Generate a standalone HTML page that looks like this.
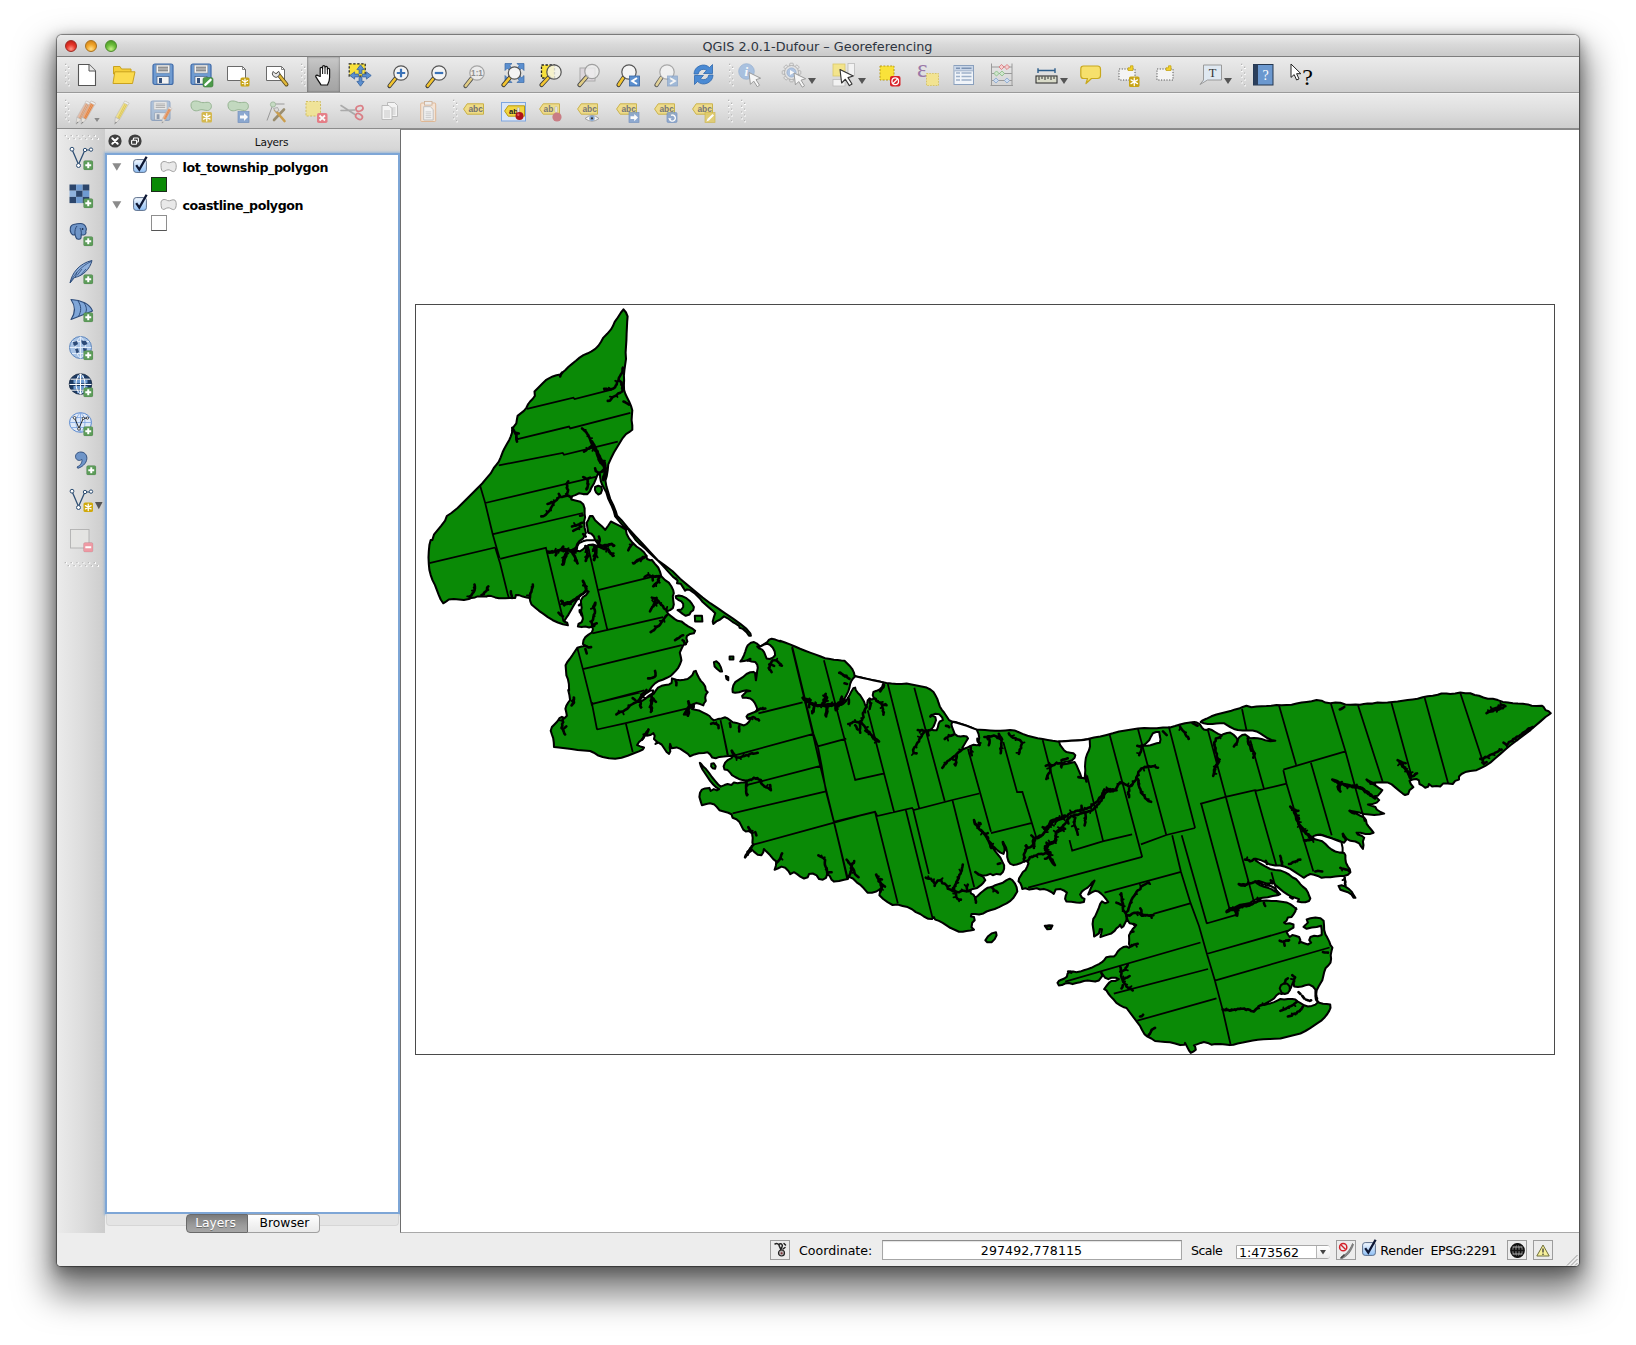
<!DOCTYPE html>
<html lang="en">
<head>
<meta charset="utf-8">
<title>QGIS 2.0.1-Dufour – Georeferencing</title>
<style>
html,body{margin:0;padding:0;background:#fff;}
body{width:1636px;height:1345px;position:relative;overflow:hidden;font-family:"DejaVu Sans","Liberation Sans",sans-serif;font-size:12px;color:#000;}
.abs{position:absolute;}
#win{position:absolute;left:57px;top:35px;width:1522px;height:1231px;background:#ededed;border-radius:5px 5px 4px 4px;
 box-shadow:0 0 1px 1px rgba(0,0,0,.45),0 5px 14px 2px rgba(0,0,0,.32),0 21px 34px 8px rgba(0,0,0,.50);}
#title{position:absolute;left:0;top:0;width:1522px;height:22px;border-radius:5px 5px 0 0;
 background:linear-gradient(#ebebeb,#d9d9d9 45%,#cacaca);border-bottom:1px solid #7d7d7d;box-sizing:border-box;}
#title .t{position:absolute;left:0;width:1521px;top:3.6px;text-align:center;font-size:12.8px;color:#2d3440;letter-spacing:0px;white-space:nowrap;}
.tl{position:absolute;top:5px;width:12px;height:12px;border-radius:50%;box-sizing:border-box;}
.tb{position:absolute;left:0;width:1522px;height:36px;background:linear-gradient(#ebebeb,#dedede 50%,#cecece);box-sizing:border-box;}
#tb1{top:22px;border-bottom:1px solid #9a9a9a;}
#tb2{top:58px;border-top:1px solid #f2f2f2;border-bottom:1px solid #8c8c8c;}
.ic{position:absolute;overflow:visible;}
.grip{position:absolute;width:5px;height:23px;}
#ltb{position:absolute;left:0;top:94px;width:48px;height:1104px;background:linear-gradient(90deg,#ebebeb,#dcdcdc 55%,#cccccc);}
#lhead{position:absolute;left:48px;top:94px;width:295px;height:25px;background:linear-gradient(#e4e4e4,#d3d3d3);}
#lhead .t{position:absolute;left:0;width:333px;top:7.2px;text-align:center;font-size:10.6px;letter-spacing:-.3px;color:#111;}
#tree{position:absolute;left:48px;top:118px;width:295px;height:1061px;background:#fff;box-sizing:border-box;border:2px solid #7ea6d6;box-shadow:0 0 2px 1px rgba(110,160,215,.55);}
.lname{position:absolute;font-weight:bold;font-size:12.6px;letter-spacing:-.4px;white-space:nowrap;color:#000;}
#canvas{position:absolute;left:343px;top:94px;width:1179px;height:1104px;background:#fff;border-left:1px solid #6e6e6e;box-sizing:border-box;border-top:1px solid #8a8a8a;border-bottom:1px solid #a9a9a9;}
#status{position:absolute;left:0;top:1198px;width:1522px;height:33px;background:#ededed;border-radius:0 0 4px 4px;}
.st{position:absolute;font-size:12.6px;white-space:nowrap;color:#000;}
</style>
</head>
<body>
<div id="win">
<div id="title">
 <div class="tl" style="left:8px;background:radial-gradient(circle at 50% 80%,#ff9a8a 0,#e8392d 45%,#b5150f 100%);border:1px solid #9c2a22;"></div>
 <div class="tl" style="left:28px;background:radial-gradient(circle at 50% 80%,#ffe08a 0,#f2a72d 45%,#c9780f 100%);border:1px solid #a8701c;"></div>
 <div class="tl" style="left:48px;background:radial-gradient(circle at 50% 80%,#c8f08a 0,#6fbf3d 45%,#3f8f1f 100%);border:1px solid #4d8a2c;"></div>
 <div class="t">QGIS 2.0.1-Dufour – Georeferencing</div>
</div>
<div id="tb1" class="tb"></div>
<div id="tb2" class="tb"></div>
<svg class="ic" style="left:8px;top:28.5px" width="6" height="25" viewBox="0 0 6 25" ><rect x="0" y="0" width="2" height="2" fill="#fff"/><rect x="0" y="-0.3" width="1.4" height="1.4" fill="#b5b5b5"/><rect x="3" y="2.9" width="2" height="2" fill="#fff"/><rect x="3" y="2.6" width="1.4" height="1.4" fill="#b5b5b5"/><rect x="0" y="5.8" width="2" height="2" fill="#fff"/><rect x="0" y="5.5" width="1.4" height="1.4" fill="#b5b5b5"/><rect x="3" y="8.7" width="2" height="2" fill="#fff"/><rect x="3" y="8.4" width="1.4" height="1.4" fill="#b5b5b5"/><rect x="0" y="11.6" width="2" height="2" fill="#fff"/><rect x="0" y="11.3" width="1.4" height="1.4" fill="#b5b5b5"/><rect x="3" y="14.5" width="2" height="2" fill="#fff"/><rect x="3" y="14.2" width="1.4" height="1.4" fill="#b5b5b5"/><rect x="0" y="17.4" width="2" height="2" fill="#fff"/><rect x="0" y="17.1" width="1.4" height="1.4" fill="#b5b5b5"/><rect x="3" y="20.3" width="2" height="2" fill="#fff"/><rect x="3" y="20" width="1.4" height="1.4" fill="#b5b5b5"/></svg><svg class="ic" style="left:18px;top:28px" width="24" height="24" viewBox="0 0 24 24" ><path d="M3.5 1.5H14L20.5 8V22.5H3.5Z" fill="#fff" stroke="#555" stroke-width="1.1" stroke-linejoin="round"/><path d="M14 1.5V8H20.5" fill="#e8e8e8" stroke="#555" stroke-width="1"/></svg><svg class="ic" style="left:55px;top:27px" width="24" height="24" viewBox="0 0 24 24" ><path d="M1.5 4.5H8L9.5 7H19V12H1.5Z" fill="#f5cf3a" stroke="#c9a21e" stroke-width="1"/><path d="M1 21.5L2.8 9.8H23L20.5 21.5Z" fill="#fbdb4f" stroke="#c9a21e" stroke-width="1" stroke-linejoin="round"/></svg><svg class="ic" style="left:93.5px;top:27.5px" width="24" height="24" viewBox="0 0 24 24" ><g transform="translate(1 0)"><g opacity="1"><rect x="1" y="1" width="20" height="20.5" rx="2" fill="#6f9bd1" stroke="#3f6aa8" stroke-width="1.2"/><rect x="4.2" y="2" width="13.6" height="8" fill="#f2f2f2" stroke="#888" stroke-width=".5"/><path d="M6 4.2H16M6 6H16M6 7.8H16" stroke="#555" stroke-width=".9"/><rect x="5" y="13.5" width="12" height="7.5" fill="#f2f2f2" stroke="#35507a" stroke-width=".6"/><rect x="7" y="15" width="3" height="5" fill="#35507a"/></g></g></svg><svg class="ic" style="left:132.5px;top:27.5px" width="24" height="24" viewBox="0 0 24 24" ><g transform="translate(0 0)"><g opacity="1"><rect x="1" y="1" width="20" height="20.5" rx="2" fill="#6f9bd1" stroke="#3f6aa8" stroke-width="1.2"/><rect x="4.2" y="2" width="13.6" height="8" fill="#f2f2f2" stroke="#888" stroke-width=".5"/><path d="M6 4.2H16M6 6H16M6 7.8H16" stroke="#555" stroke-width=".9"/><rect x="5" y="13.5" width="12" height="7.5" fill="#f2f2f2" stroke="#35507a" stroke-width=".6"/><rect x="7" y="15" width="3" height="5" fill="#35507a"/></g></g><rect x="13" y="14.5" width="10" height="9.5" rx="1.8" fill="#4d9a4a" stroke="#3b7a39" stroke-width=".6"/><path d="M15.3 21.8L20.6 16.8" stroke="#fff" stroke-width="2.3" stroke-linecap="round"/></svg><svg class="ic" style="left:169px;top:28px" width="24" height="24" viewBox="0 0 24 24" ><path d="M1.5 3.5H16.5L19.5 6.5V17.5H1.5Z" fill="#fff" stroke="#6a6a6a" stroke-width="1"/><path d="M16.5 3.5V6.5H19.5" fill="none" stroke="#6a6a6a" stroke-width=".8"/><g transform="translate(14.5 14.5)"><rect width="9" height="9" rx="1.6" fill="#c8a415"/><path d="M4.5 1.5L4.5 7.5M7.09808 3L1.90192 6M1.90192 3L7.09808 6" stroke="#fff" stroke-width="1.25" stroke-linecap="round"/></g></svg><svg class="ic" style="left:207.5px;top:28px" width="24" height="24" viewBox="0 0 24 24" ><path d="M1.5 3.5H16.5L19.5 6.5V17.5H1.5Z" fill="#fff" stroke="#6a6a6a" stroke-width="1"/><path d="M16.5 3.5V6.5H19.5" fill="none" stroke="#6a6a6a" stroke-width=".8"/><path d="M13 11L21.5 21.5" stroke="#5a4a1a" stroke-width="4" stroke-linecap="round"/><path d="M13.4 11.4L21.3 21.2" stroke="#e0b83a" stroke-width="2.4" stroke-linecap="round"/><path d="M8.2 8.4A3.6 3.6 0 1 0 13.6 8.2L11.6 10.6L9.8 10.2Z" fill="#e6e6e6" stroke="#444" stroke-width=".9"/></svg><svg class="ic" style="left:244px;top:28.5px" width="6" height="25" viewBox="0 0 6 25" ><rect x="0" y="0" width="2" height="2" fill="#fff"/><rect x="0" y="-0.3" width="1.4" height="1.4" fill="#b5b5b5"/><rect x="3" y="2.9" width="2" height="2" fill="#fff"/><rect x="3" y="2.6" width="1.4" height="1.4" fill="#b5b5b5"/><rect x="0" y="5.8" width="2" height="2" fill="#fff"/><rect x="0" y="5.5" width="1.4" height="1.4" fill="#b5b5b5"/><rect x="3" y="8.7" width="2" height="2" fill="#fff"/><rect x="3" y="8.4" width="1.4" height="1.4" fill="#b5b5b5"/><rect x="0" y="11.6" width="2" height="2" fill="#fff"/><rect x="0" y="11.3" width="1.4" height="1.4" fill="#b5b5b5"/><rect x="3" y="14.5" width="2" height="2" fill="#fff"/><rect x="3" y="14.2" width="1.4" height="1.4" fill="#b5b5b5"/><rect x="0" y="17.4" width="2" height="2" fill="#fff"/><rect x="0" y="17.1" width="1.4" height="1.4" fill="#b5b5b5"/><rect x="3" y="20.3" width="2" height="2" fill="#fff"/><rect x="3" y="20" width="1.4" height="1.4" fill="#b5b5b5"/></svg><div class="abs" style="left:250px;top:22px;width:33px;height:35px;background:linear-gradient(#c9c9c9,#b1b1b1 50%,#a3a3a3);box-shadow:inset 1px 0 2px rgba(0,0,0,.25),inset -1px 0 2px rgba(0,0,0,.18)"></div><svg class="ic" style="left:254.5px;top:28px" width="24" height="24" viewBox="0 0 24 24" ><path d="M8.2 13.5V5.6C8.2 4 10.6 4 10.6 5.6V3.8C10.6 2.2 13 2.2 13 3.8V4.6C13 3 15.4 3 15.4 4.6V6.4C15.4 5 17.6 5 17.6 6.6V14.5C17.6 18 16 21 15.5 22H9C8 20 5.5 16.5 4 14.2C3 12.6 5 11.4 6.2 12.8Z" fill="#fff" stroke="#111" stroke-width="1.2" stroke-linejoin="round"/><path d="M10.6 5.6V11M13 4.6V11M15.4 6.4V11.4" stroke="#111" stroke-width="1"/></svg><svg class="ic" style="left:291px;top:27.5px" width="24" height="24" viewBox="0 0 24 24" ><rect x="1.2" y="0.8" width="16" height="12.4" fill="#f7e03c" stroke="#222" stroke-width="1.2" stroke-dasharray="2.4 1.6"/><path transform="rotate(0 12.5 12.5)" d="M12.5 1.8L16.1 6.6H13.9V10.6H11.1V6.6H8.9Z" fill="#5b8fcf" stroke="#35629e" stroke-width=".8" stroke-linejoin="round"/><path transform="rotate(90 12.5 12.5)" d="M12.5 1.8L16.1 6.6H13.9V10.6H11.1V6.6H8.9Z" fill="#5b8fcf" stroke="#35629e" stroke-width=".8" stroke-linejoin="round"/><path transform="rotate(180 12.5 12.5)" d="M12.5 1.8L16.1 6.6H13.9V10.6H11.1V6.6H8.9Z" fill="#5b8fcf" stroke="#35629e" stroke-width=".8" stroke-linejoin="round"/><path transform="rotate(270 12.5 12.5)" d="M12.5 1.8L16.1 6.6H13.9V10.6H11.1V6.6H8.9Z" fill="#5b8fcf" stroke="#35629e" stroke-width=".8" stroke-linejoin="round"/></svg><svg class="ic" style="left:330px;top:29px" width="24" height="24" viewBox="0 0 24 24" ><g opacity="1"><path d="M8.816 14.184L2.5 22" stroke="#3a3a3a" stroke-width="4.2" stroke-linecap="round"/><path d="M8.216 14.784L2.7 21.8" stroke="#f3c530" stroke-width="2.6" stroke-linecap="round"/><circle cx="14" cy="9" r="7.2" fill="#f4f4f4" stroke="#555" stroke-width="1.2"/></g><path d="M9.8 9H18.2M14 4.8V13.2" stroke="#3a72b8" stroke-width="2.2"/></svg><svg class="ic" style="left:368px;top:29px" width="24" height="24" viewBox="0 0 24 24" ><g opacity="1"><path d="M8.816 14.184L2.5 22" stroke="#3a3a3a" stroke-width="4.2" stroke-linecap="round"/><path d="M8.216 14.784L2.7 21.8" stroke="#f3c530" stroke-width="2.6" stroke-linecap="round"/><circle cx="14" cy="9" r="7.2" fill="#f4f4f4" stroke="#555" stroke-width="1.2"/></g><path d="M9.8 9H18.2" stroke="#3a72b8" stroke-width="2.2"/></svg><svg class="ic" style="left:406px;top:29px" width="24" height="24" viewBox="0 0 24 24" ><g opacity="0.85"><path d="M8.816 14.184L2.5 22" stroke="#3a3a3a" stroke-width="4.2" stroke-linecap="round"/><path d="M8.216 14.784L2.7 21.8" stroke="#e6cd78" stroke-width="2.6" stroke-linecap="round"/><circle cx="14" cy="9" r="7.2" fill="#ededed" stroke="#9a9a9a" stroke-width="1.2"/></g><text x="14" y="12" font-family="Liberation Sans,sans-serif" font-weight="bold" font-size="8.2" text-anchor="middle" fill="#8d8d8d">1:1</text></svg><svg class="ic" style="left:443.5px;top:28px" width="24" height="24" viewBox="0 0 24 24" ><path transform="rotate(0 13.5 10)" d="M4 0.5H11L8.7 2.8L11.5 5.6L9.1 8L6.3 5.2L4 7.5Z" fill="#5b8fcf" stroke="#3a68a5" stroke-width=".7"/><path transform="rotate(90 13.5 10)" d="M4 0.5H11L8.7 2.8L11.5 5.6L9.1 8L6.3 5.2L4 7.5Z" fill="#5b8fcf" stroke="#3a68a5" stroke-width=".7"/><path transform="rotate(180 13.5 10)" d="M4 0.5H11L8.7 2.8L11.5 5.6L9.1 8L6.3 5.2L4 7.5Z" fill="#5b8fcf" stroke="#3a68a5" stroke-width=".7"/><path transform="rotate(270 13.5 10)" d="M4 0.5H11L8.7 2.8L11.5 5.6L9.1 8L6.3 5.2L4 7.5Z" fill="#5b8fcf" stroke="#3a68a5" stroke-width=".7"/><g opacity="1"><path d="M9.036 14.464L2.5 22" stroke="#3a3a3a" stroke-width="4.2" stroke-linecap="round"/><path d="M8.436 15.064L2.7 21.8" stroke="#f3c530" stroke-width="2.6" stroke-linecap="round"/><circle cx="13.5" cy="10" r="6.2" fill="#f4f4f4" stroke="#555" stroke-width="1.2"/></g></svg><svg class="ic" style="left:481.5px;top:28px" width="24" height="24" viewBox="0 0 24 24" ><rect x="2.5" y="2" width="13" height="13" fill="#f7e03c" stroke="#222" stroke-width="1.3" stroke-dasharray="2.4 1.6"/><g opacity="1"><path d="M9.816 14.184L2.5 22" stroke="#3a3a3a" stroke-width="4.2" stroke-linecap="round"/><path d="M9.216 14.784L2.7 21.8" stroke="#f3c530" stroke-width="2.6" stroke-linecap="round"/><circle cx="15" cy="9" r="7.2" fill="rgba(245,245,235,.82)" stroke="#555" stroke-width="1.2"/></g></svg><svg class="ic" style="left:520px;top:28px" width="24" height="24" viewBox="0 0 24 24" ><rect x="3" y="5" width="15" height="13" fill="#dcd6dc" stroke="#aaa" stroke-width="1"/><g opacity="0.9"><path d="M9.816 13.684L2.5 22" stroke="#3a3a3a" stroke-width="4.2" stroke-linecap="round"/><path d="M9.216 14.284L2.7 21.8" stroke="#e3cd7e" stroke-width="2.6" stroke-linecap="round"/><circle cx="15" cy="8.5" r="7.2" fill="rgba(240,240,240,.85)" stroke="#999" stroke-width="1.2"/></g></svg><svg class="ic" style="left:558.5px;top:28px" width="24" height="24" viewBox="0 0 24 24" ><g opacity="1"><path d="M7.816 14.184L2.5 22" stroke="#3a3a3a" stroke-width="4.2" stroke-linecap="round"/><path d="M7.216 14.784L2.7 21.8" stroke="#f3c530" stroke-width="2.6" stroke-linecap="round"/><circle cx="13" cy="9" r="7.2" fill="#f4f4f4" stroke="#555" stroke-width="1.2"/></g><rect x="13.5" y="13" width="10" height="10" fill="#5b8fcf" stroke="#3a68a5" stroke-width=".8"/><path d="M21 15L16.2 18L21 21" fill="none" stroke="#fff" stroke-width="2"/></svg><svg class="ic" style="left:596.5px;top:28px" width="24" height="24" viewBox="0 0 24 24" ><g opacity="0.8"><path d="M7.816 14.184L2.5 22" stroke="#3a3a3a" stroke-width="4.2" stroke-linecap="round"/><path d="M7.216 14.784L2.7 21.8" stroke="#e6d28a" stroke-width="2.6" stroke-linecap="round"/><circle cx="13" cy="9" r="7.2" fill="#f4f4f4" stroke="#9a9a9a" stroke-width="1.2"/></g><g opacity=".75"><rect x="13.5" y="13" width="10" height="10" fill="#8fb0d8" stroke="#7a99c2" stroke-width=".8"/><path d="M16 15L20.8 18L16 21" fill="none" stroke="#fff" stroke-width="2"/></g></svg><svg class="ic" style="left:634.5px;top:28px" width="24" height="24" viewBox="0 0 24 24" ><path d="M2 11A9.3 9.3 0 0 1 17.5 4.5L20.5 1.5V10.5H11.5L14.6 7.4A5.2 5.2 0 0 0 6.2 11Z" fill="#4a8ad4" stroke="#2f68ad" stroke-width=".8" stroke-linejoin="round"/><path d="M21 12A9.3 9.3 0 0 1 5.5 18.5L2.5 21.5V12.5H11.5L8.4 15.6A5.2 5.2 0 0 0 16.8 12Z" fill="#4a8ad4" stroke="#2f68ad" stroke-width=".8" stroke-linejoin="round"/></svg><svg class="ic" style="left:672px;top:28.5px" width="6" height="25" viewBox="0 0 6 25" ><rect x="0" y="0" width="2" height="2" fill="#fff"/><rect x="0" y="-0.3" width="1.4" height="1.4" fill="#b5b5b5"/><rect x="3" y="2.9" width="2" height="2" fill="#fff"/><rect x="3" y="2.6" width="1.4" height="1.4" fill="#b5b5b5"/><rect x="0" y="5.8" width="2" height="2" fill="#fff"/><rect x="0" y="5.5" width="1.4" height="1.4" fill="#b5b5b5"/><rect x="3" y="8.7" width="2" height="2" fill="#fff"/><rect x="3" y="8.4" width="1.4" height="1.4" fill="#b5b5b5"/><rect x="0" y="11.6" width="2" height="2" fill="#fff"/><rect x="0" y="11.3" width="1.4" height="1.4" fill="#b5b5b5"/><rect x="3" y="14.5" width="2" height="2" fill="#fff"/><rect x="3" y="14.2" width="1.4" height="1.4" fill="#b5b5b5"/><rect x="0" y="17.4" width="2" height="2" fill="#fff"/><rect x="0" y="17.1" width="1.4" height="1.4" fill="#b5b5b5"/><rect x="3" y="20.3" width="2" height="2" fill="#fff"/><rect x="3" y="20" width="1.4" height="1.4" fill="#b5b5b5"/></svg><svg class="ic" style="left:681px;top:28px" width="24" height="24" viewBox="0 0 24 24" ><g opacity=".8"><circle cx="8.5" cy="8.5" r="7.8" fill="#9bb9df" stroke="#8aa8cf" stroke-width=".8"/><text x="8.2" y="13" font-family="Liberation Serif,serif" font-style="italic" font-weight="bold" font-size="13" text-anchor="middle" fill="#fff">i</text></g><path transform="translate(11 9.5) scale(1.1)" d="M0 0L10.6 5.2L6.4 6.5L9.6 11.6L7.5 12.9L4.3 7.8L1.3 10.8Z" fill="#f6f6f6" stroke="#9a9a9a" stroke-width=".9" stroke-linejoin="round"/></svg><svg class="ic" style="left:725px;top:28px" width="24" height="24" viewBox="0 0 24 24" ><g opacity=".85"><rect transform="rotate(0 9.5 9.5)" x="7.7" y="0.2" width="3.6" height="4" rx=".8" fill="#e4e4e4" stroke="#9c9c9c" stroke-width=".7"/><rect transform="rotate(45 9.5 9.5)" x="7.7" y="0.2" width="3.6" height="4" rx=".8" fill="#e4e4e4" stroke="#9c9c9c" stroke-width=".7"/><rect transform="rotate(90 9.5 9.5)" x="7.7" y="0.2" width="3.6" height="4" rx=".8" fill="#e4e4e4" stroke="#9c9c9c" stroke-width=".7"/><rect transform="rotate(135 9.5 9.5)" x="7.7" y="0.2" width="3.6" height="4" rx=".8" fill="#e4e4e4" stroke="#9c9c9c" stroke-width=".7"/><rect transform="rotate(180 9.5 9.5)" x="7.7" y="0.2" width="3.6" height="4" rx=".8" fill="#e4e4e4" stroke="#9c9c9c" stroke-width=".7"/><rect transform="rotate(225 9.5 9.5)" x="7.7" y="0.2" width="3.6" height="4" rx=".8" fill="#e4e4e4" stroke="#9c9c9c" stroke-width=".7"/><rect transform="rotate(270 9.5 9.5)" x="7.7" y="0.2" width="3.6" height="4" rx=".8" fill="#e4e4e4" stroke="#9c9c9c" stroke-width=".7"/><rect transform="rotate(315 9.5 9.5)" x="7.7" y="0.2" width="3.6" height="4" rx=".8" fill="#e4e4e4" stroke="#9c9c9c" stroke-width=".7"/><circle cx="9.5" cy="9.5" r="7" fill="#e4e4e4" stroke="#9c9c9c" stroke-width=".8"/><circle cx="9.5" cy="9.5" r="4.6" fill="#a9c1e2" stroke="#8aa3c9" stroke-width=".7"/><path d="M8 7L12.3 9.5L8 12Z" fill="#fff"/></g><path transform="translate(12 10) scale(1.1)" d="M0 0L10.6 5.2L6.4 6.5L9.6 11.6L7.5 12.9L4.3 7.8L1.3 10.8Z" fill="#f6f6f6" stroke="#9a9a9a" stroke-width=".9" stroke-linejoin="round"/></svg><svg class="ic" style="left:751px;top:43px" width="8" height="6" viewBox="0 0 8 6" ><path d="M0 0H8L4 6Z" fill="#555"/></svg><svg class="ic" style="left:775px;top:27.5px" width="24" height="24" viewBox="0 0 24 24" ><rect x="1" y="1" width="12" height="12" fill="#f3e48c" stroke="#d9c869" stroke-width=".8"/><rect x="16" y="0.5" width="6.5" height="12" fill="#f2f2f2" stroke="#bbb" stroke-width=".8"/><rect x="1" y="16.5" width="12" height="6.5" fill="#f2f2f2" stroke="#bbb" stroke-width=".8"/><path transform="translate(8 6.5) scale(1.25)" d="M0 0L10.6 5.2L6.4 6.5L9.6 11.6L7.5 12.9L4.3 7.8L1.3 10.8Z" fill="#fff" stroke="#333" stroke-width=".9" stroke-linejoin="round"/></svg><svg class="ic" style="left:801px;top:43px" width="8" height="6" viewBox="0 0 8 6" ><path d="M0 0H8L4 6Z" fill="#555"/></svg><svg class="ic" style="left:821.5px;top:29px" width="24" height="24" viewBox="0 0 24 24" ><rect x="1" y="2" width="14" height="14" fill="#f9e23a" stroke="#b89c1a" stroke-width="1" stroke-dasharray="2 1.4"/><rect x="11" y="12" width="10.5" height="10.5" rx="2" fill="#d8242b"/><circle cx="16.25" cy="17.25" r="3.3" fill="none" stroke="#fff" stroke-width="1.3"/><path d="M14 19.5L18.5 15" stroke="#fff" stroke-width="1.3"/></svg><svg class="ic" style="left:860px;top:28px" width="24" height="24" viewBox="0 0 24 24" ><text x="0" y="14" font-family="Liberation Serif,DejaVu Serif,serif" font-size="25" fill="#9a78a8">ε</text><rect x="9.5" y="10.5" width="12" height="12" fill="#f2e391" stroke="#d5c160" stroke-width=".9" stroke-dasharray="1.6 1.2"/></svg><svg class="ic" style="left:896px;top:29px" width="24" height="24" viewBox="0 0 24 24" ><rect x="1" y="1.5" width="19.5" height="19" fill="#f0f4f9" stroke="#8aa0bd" stroke-width="1"/><rect x="1.5" y="2" width="18.5" height="4.5" fill="#c9d6e8"/><path d="M3 4.2H7M8.5 4.2H18.5" stroke="#7d93b3" stroke-width="1.6"/><path d="M3 9H7M8.5 9H18.5M3 12.5H7M8.5 12.5H18.5M3 16H7M8.5 16H18.5" stroke="#9db0c9" stroke-width="1.3"/><path d="M1.5 6.8H20" stroke="#8aa0bd" stroke-width=".8"/></svg><svg class="ic" style="left:933px;top:28px" width="24" height="24" viewBox="0 0 24 24" ><path d="M1.5 0.5V22M22 0.5V22M0.5 22.5H23M1.5 4H22M1.5 10.5H22M1.5 17.5H22" stroke="#9a9a9a" stroke-width="1" fill="none"/><rect transform="rotate(45 11.5 4)" x="9.7" y="2.2" width="3.6" height="3.6" fill="#f6cfd0" stroke="#d76a6e" stroke-width=".7"/><rect transform="rotate(45 17 4)" x="15.2" y="2.2" width="3.6" height="3.6" fill="#f6cfd0" stroke="#d76a6e" stroke-width=".7"/><rect transform="rotate(45 6.5 10.5)" x="4.7" y="8.7" width="3.6" height="3.6" fill="#cfe6cc" stroke="#7fb879" stroke-width=".7"/><rect transform="rotate(45 12 10.5)" x="10.2" y="8.7" width="3.6" height="3.6" fill="#cfe6cc" stroke="#7fb879" stroke-width=".7"/><rect transform="rotate(45 6 17.5)" x="4.2" y="15.7" width="3.6" height="3.6" fill="#cddcf0" stroke="#7fa0cc" stroke-width=".7"/><rect transform="rotate(45 17 17.5)" x="15.2" y="15.7" width="3.6" height="3.6" fill="#cddcf0" stroke="#7fa0cc" stroke-width=".7"/></svg><svg class="ic" style="left:977.5px;top:32px" width="24" height="24" viewBox="0 0 24 24" ><path d="M3 3.5H20M3 1.2V6M20 1.2V6" stroke="#2c5d8a" stroke-width="1.4"/><rect x="1" y="9" width="21" height="7" fill="#d9dbc9" stroke="#333" stroke-width="1.1"/><path d="M4 9.5V13M7 9.5V12M10 9.5V13M13 9.5V12M16 9.5V13M19 9.5V12" stroke="#333" stroke-width="1"/></svg><svg class="ic" style="left:1003px;top:43px" width="8" height="6" viewBox="0 0 8 6" ><path d="M0 0H8L4 6Z" fill="#555"/></svg><svg class="ic" style="left:1022.5px;top:30px" width="24" height="24" viewBox="0 0 24 24" ><path d="M3.5 1H17.5Q20.5 1 20.5 4V10.5Q20.5 13.5 17.5 13.5H11.5L6 18.5L7.5 13.5H3.5Q0.8 13.5 0.8 10.5V4Q0.8 1 3.5 1Z" fill="#f7e06c" stroke="#c8a81e" stroke-width="1.2" stroke-linejoin="round"/></svg><svg class="ic" style="left:1061px;top:29.5px" width="24" height="24" viewBox="0 0 24 24" ><rect x="1" y="4" width="16" height="11" fill="#f4f4f4" stroke="#555" stroke-width="1" stroke-dasharray="1.2 1.5"/><path d="M10 5.5V2.8H12.5V0.8H15V5.5Z" fill="#f4d228" stroke="#c4a418" stroke-width=".8"/><g transform="translate(11 11.5)"><rect width="10.5" height="10.5" rx="1.6" fill="#c8a415"/><path d="M5.25 1.5L5.25 9M8.4976 3.375L2.0024 7.125M2.0024 3.375L8.4976 7.125" stroke="#fff" stroke-width="1.25" stroke-linecap="round"/></g></svg><svg class="ic" style="left:1099px;top:29.5px" width="24" height="24" viewBox="0 0 24 24" ><rect x="1" y="4" width="16" height="11" fill="#f4f4f4" stroke="#555" stroke-width="1" stroke-dasharray="1.2 1.5"/><path d="M10 5.5V2.8H12.5V0.8H15V5.5Z" fill="#f4d228" stroke="#c4a418" stroke-width=".8"/></svg><svg class="ic" style="left:1141.5px;top:29px" width="24" height="24" viewBox="0 0 24 24" ><path d="M4.5 1H22.5V16H8.5L1 20.5L4.5 16Z" fill="#dfe8f1" stroke="#9a9a9a" stroke-width="1" stroke-linejoin="round"/><text x="13.5" y="13" font-family="Liberation Serif,serif" font-size="12.5" text-anchor="middle" fill="#333">T</text></svg><svg class="ic" style="left:1167px;top:43px" width="8" height="6" viewBox="0 0 8 6" ><path d="M0 0H8L4 6Z" fill="#555"/></svg><svg class="ic" style="left:1184px;top:28.5px" width="6" height="25" viewBox="0 0 6 25" ><rect x="0" y="0" width="2" height="2" fill="#fff"/><rect x="0" y="-0.3" width="1.4" height="1.4" fill="#b5b5b5"/><rect x="3" y="2.9" width="2" height="2" fill="#fff"/><rect x="3" y="2.6" width="1.4" height="1.4" fill="#b5b5b5"/><rect x="0" y="5.8" width="2" height="2" fill="#fff"/><rect x="0" y="5.5" width="1.4" height="1.4" fill="#b5b5b5"/><rect x="3" y="8.7" width="2" height="2" fill="#fff"/><rect x="3" y="8.4" width="1.4" height="1.4" fill="#b5b5b5"/><rect x="0" y="11.6" width="2" height="2" fill="#fff"/><rect x="0" y="11.3" width="1.4" height="1.4" fill="#b5b5b5"/><rect x="3" y="14.5" width="2" height="2" fill="#fff"/><rect x="3" y="14.2" width="1.4" height="1.4" fill="#b5b5b5"/><rect x="0" y="17.4" width="2" height="2" fill="#fff"/><rect x="0" y="17.1" width="1.4" height="1.4" fill="#b5b5b5"/><rect x="3" y="20.3" width="2" height="2" fill="#fff"/><rect x="3" y="20" width="1.4" height="1.4" fill="#b5b5b5"/></svg><svg class="ic" style="left:1195.5px;top:28.5px" width="24" height="24" viewBox="0 0 24 24" ><rect x="0.5" y="0.5" width="19.5" height="20.5" fill="#6b98cf" stroke="#24364e" stroke-width="1"/><rect x="0.5" y="0.5" width="4.5" height="20.5" fill="#2b3f5c"/><text x="12.5" y="15.5" font-family="Liberation Serif,serif" font-size="14" text-anchor="middle" fill="#fff">?</text></svg><svg class="ic" style="left:1232.5px;top:28px" width="24" height="24" viewBox="0 0 24 24" ><path d="M1 1L1 14.4L4.2 11.6L6.6 17L9 15.9L6.6 10.7L10.9 10.7Z" fill="#fff" stroke="#222" stroke-width="1" stroke-linejoin="round"/><text x="17.5" y="21.5" font-family="Liberation Serif,serif" font-size="24" text-anchor="middle" fill="#000">?</text></svg>
<svg class="ic" style="left:8px;top:65px" width="6" height="25" viewBox="0 0 6 25" ><rect x="0" y="0" width="2" height="2" fill="#fff"/><rect x="0" y="-0.3" width="1.4" height="1.4" fill="#b5b5b5"/><rect x="3" y="2.9" width="2" height="2" fill="#fff"/><rect x="3" y="2.6" width="1.4" height="1.4" fill="#b5b5b5"/><rect x="0" y="5.8" width="2" height="2" fill="#fff"/><rect x="0" y="5.5" width="1.4" height="1.4" fill="#b5b5b5"/><rect x="3" y="8.7" width="2" height="2" fill="#fff"/><rect x="3" y="8.4" width="1.4" height="1.4" fill="#b5b5b5"/><rect x="0" y="11.6" width="2" height="2" fill="#fff"/><rect x="0" y="11.3" width="1.4" height="1.4" fill="#b5b5b5"/><rect x="3" y="14.5" width="2" height="2" fill="#fff"/><rect x="3" y="14.2" width="1.4" height="1.4" fill="#b5b5b5"/><rect x="0" y="17.4" width="2" height="2" fill="#fff"/><rect x="0" y="17.1" width="1.4" height="1.4" fill="#b5b5b5"/><rect x="3" y="20.3" width="2" height="2" fill="#fff"/><rect x="3" y="20" width="1.4" height="1.4" fill="#b5b5b5"/></svg><svg class="ic" style="left:19px;top:66px" width="24" height="24" viewBox="0 0 24 24" ><g transform="translate(-0.5 0) scale(0.86)" opacity="0.9"><path d="M12.5 0L17.5 2.6L6.6 21.5L1.6 18.9Z" fill="#e3b9a3" stroke="#b9b9b9" stroke-width=".6"/><path d="M14.2 0.9L4.4 20.4M15.9 1.8L5.6 20.9" stroke="#d9925e" stroke-width="1"/><path d="M12.5 0L17.5 2.6L16.3 4.7L11.3 2.1Z" fill="#f0f0f0" stroke="#bbb" stroke-width=".5"/><path d="M1.6 18.9L6.6 21.5L0.6 27Z" fill="#e8e4de" stroke="#aaa" stroke-width=".6"/><path d="M1.9 24L3.4 24.8L0.6 27Z" fill="#777"/></g><g transform="translate(4.5 0) scale(0.86)" opacity="0.95"><path d="M12.5 0L17.5 2.6L6.6 21.5L1.6 18.9Z" fill="#eda77c" stroke="#b9b9b9" stroke-width=".6"/><path d="M14.2 0.9L4.4 20.4M15.9 1.8L5.6 20.9" stroke="#e07a2f" stroke-width="1"/><path d="M12.5 0L17.5 2.6L16.3 4.7L11.3 2.1Z" fill="#f0f0f0" stroke="#bbb" stroke-width=".5"/><path d="M1.6 18.9L6.6 21.5L0.6 27Z" fill="#e8e4de" stroke="#aaa" stroke-width=".6"/><path d="M1.9 24L3.4 24.8L0.6 27Z" fill="#777"/></g></svg><svg class="ic" style="left:36.5px;top:82.5px" width="6" height="4" viewBox="0 0 8 6"><path d="M0 0H8L4 6Z" fill="#888"/></svg><svg class="ic" style="left:56px;top:66px" width="24" height="24" viewBox="0 0 24 24" ><g transform="translate(1 0) scale(0.86)" opacity="0.95"><path d="M12.5 0L17.5 2.6L6.6 21.5L1.6 18.9Z" fill="#f0e08a" stroke="#b9b9b9" stroke-width=".6"/><path d="M14.2 0.9L4.4 20.4M15.9 1.8L5.6 20.9" stroke="#d9c24a" stroke-width="1"/><path d="M12.5 0L17.5 2.6L16.3 4.7L11.3 2.1Z" fill="#f0f0f0" stroke="#bbb" stroke-width=".5"/><path d="M1.6 18.9L6.6 21.5L0.6 27Z" fill="#e8e4de" stroke="#aaa" stroke-width=".6"/><path d="M1.9 24L3.4 24.8L0.6 27Z" fill="#777"/></g></svg><svg class="ic" style="left:93px;top:64px" width="24" height="24" viewBox="0 0 24 24" ><g transform="translate(0 1) scale(.95)"><g opacity="0.45"><rect x="1" y="1" width="20" height="20.5" rx="2" fill="#6f9bd1" stroke="#3f6aa8" stroke-width="1.2"/><rect x="4.2" y="2" width="13.6" height="8" fill="#f2f2f2" stroke="#888" stroke-width=".5"/><path d="M6 4.2H16M6 6H16M6 7.8H16" stroke="#555" stroke-width=".9"/><rect x="5" y="13.5" width="12" height="7.5" fill="#f2f2f2" stroke="#35507a" stroke-width=".6"/><rect x="7" y="15" width="3" height="5" fill="#35507a"/></g></g><g transform="translate(11.5 8) scale(0.6)" opacity="0.9"><path d="M12.5 0L17.5 2.6L6.6 21.5L1.6 18.9Z" fill="#eda77c" stroke="#b9b9b9" stroke-width=".6"/><path d="M14.2 0.9L4.4 20.4M15.9 1.8L5.6 20.9" stroke="#e07a2f" stroke-width="1"/><path d="M12.5 0L17.5 2.6L16.3 4.7L11.3 2.1Z" fill="#f0f0f0" stroke="#bbb" stroke-width=".5"/><path d="M1.6 18.9L6.6 21.5L0.6 27Z" fill="#e8e4de" stroke="#aaa" stroke-width=".6"/><path d="M1.9 24L3.4 24.8L0.6 27Z" fill="#777"/></g></svg><svg class="ic" style="left:131.5px;top:64px" width="24" height="24" viewBox="0 0 24 24" ><g opacity=".9"><path d="M2 6C2 1 8 1.5 11 3C15 4.8 19 1.8 21.5 4.5C23.5 7 22 11.5 18.5 11.5C15 11.5 13 9.8 10 11.2C6.5 12.8 2 11.5 2 6Z" fill="#bfd8bc" stroke="#8fb08b" stroke-width="1"/></g><g transform="translate(12.5 13)"><rect width="10.5" height="10.5" rx="1.6" fill="#d4b84e"/><path d="M5.25 1.5L5.25 9M8.4976 3.375L2.0024 7.125M2.0024 3.375L8.4976 7.125" stroke="#fff" stroke-width="1.25" stroke-linecap="round"/></g></svg><svg class="ic" style="left:169px;top:64px" width="24" height="24" viewBox="0 0 24 24" ><g opacity=".9"><path d="M2 6C2 1 8 1.5 11 3C15 4.8 19 1.8 21.5 4.5C23.5 7 22 11.5 18.5 11.5C15 11.5 13 9.8 10 11.2C6.5 12.8 2 11.5 2 6Z" fill="#bfd8bc" stroke="#8fb08b" stroke-width="1"/></g><g opacity=".85"><rect x="12" y="12.5" width="11" height="11" fill="#7fa0cf" stroke="#6385b8" stroke-width=".7"/><path d="M14 16.5H18V14L22 18L18 22V19.5H14Z" fill="#fff"/></g></svg><svg class="ic" style="left:208px;top:66px" width="24" height="24" viewBox="0 0 24 24" ><g opacity=".8"><circle cx="8" cy="3.5" r="2.6" fill="#bfd8bc" stroke="#8fb08b" stroke-width=".9"/><path d="M10.6 3H19.5M7 6L2 19.5" stroke="#888" stroke-width="1" fill="none"/><path d="M9 19L19 8.5" stroke="#8a7a55" stroke-width="2.6" stroke-linecap="round"/><path d="M10 9L19.5 20" stroke="#c9902a" stroke-width="2.6" stroke-linecap="round"/><path d="M8.5 7.5L12.5 6.5L14 9.5L11 11Z" fill="#ddd" stroke="#888" stroke-width=".7"/></g></svg><svg class="ic" style="left:248px;top:65px" width="24" height="24" viewBox="0 0 24 24" ><g opacity=".85"><rect x="1" y="1.5" width="14.5" height="14.5" fill="#f3e48c" stroke="#cdb84e" stroke-width="1" stroke-dasharray="2 1.4"/><rect x="12" y="13" width="10.5" height="10" rx="1.8" fill="#e8707a"/><path d="M14.5 15.5L20 20.5M20 15.5L14.5 20.5" stroke="#fff" stroke-width="1.8"/></g></svg><svg class="ic" style="left:283px;top:67px" width="24" height="24" viewBox="0 0 24 24" ><g opacity=".75"><path d="M1 3.5L15 12.5M1 8.5L15 8" stroke="#999" stroke-width="1.6" stroke-linecap="round"/><ellipse cx="19.5" cy="6.5" rx="3.6" ry="2.6" transform="rotate(-20 19.5 6.5)" fill="none" stroke="#d9606a" stroke-width="1.7"/><ellipse cx="19" cy="14.5" rx="3.6" ry="2.6" transform="rotate(30 19 14.5)" fill="none" stroke="#d9606a" stroke-width="1.7"/></g></svg><svg class="ic" style="left:323.5px;top:67px" width="24" height="24" viewBox="0 0 24 24" ><g transform="translate(6 0)"><path d="M0.5 0.5H7.5L10.5 3.5V14.5H0.5Z" fill="#f4f4f4" stroke="#b5b5b5" stroke-width=".9"/><path d="M2.5 6H8.5M2.5 8H8.5M2.5 10H8.5M2.5 12H8.5" stroke="#c3c3c3" stroke-width=".9"/></g><g transform="translate(0.5 3)"><path d="M0.5 0.5H7.5L10.5 3.5V14.5H0.5Z" fill="#f4f4f4" stroke="#b5b5b5" stroke-width=".9"/><path d="M2.5 6H8.5M2.5 8H8.5M2.5 10H8.5M2.5 12H8.5" stroke="#c3c3c3" stroke-width=".9"/></g></svg><svg class="ic" style="left:362.5px;top:65.5px" width="24" height="24" viewBox="0 0 24 24" ><g opacity=".9"><rect x="0.7" y="2" width="15" height="18.5" rx="1" fill="#f6e4d4" stroke="#e0b48e" stroke-width="1"/><rect x="4.5" y="0.5" width="7.5" height="3.6" fill="#eee" stroke="#c9a98c" stroke-width=".8"/><g transform="translate(3.2 5.2) scale(.95)"><path d="M0.5 0.5H7.5L10.5 3.5V14.5H0.5Z" fill="#f4f4f4" stroke="#b5b5b5" stroke-width=".9"/><path d="M2.5 6H8.5M2.5 8H8.5M2.5 10H8.5M2.5 12H8.5" stroke="#c3c3c3" stroke-width=".9"/></g></g></svg><svg class="ic" style="left:395.5px;top:65px" width="6" height="25" viewBox="0 0 6 25" ><rect x="0" y="0" width="2" height="2" fill="#fff"/><rect x="0" y="-0.3" width="1.4" height="1.4" fill="#b5b5b5"/><rect x="3" y="2.9" width="2" height="2" fill="#fff"/><rect x="3" y="2.6" width="1.4" height="1.4" fill="#b5b5b5"/><rect x="0" y="5.8" width="2" height="2" fill="#fff"/><rect x="0" y="5.5" width="1.4" height="1.4" fill="#b5b5b5"/><rect x="3" y="8.7" width="2" height="2" fill="#fff"/><rect x="3" y="8.4" width="1.4" height="1.4" fill="#b5b5b5"/><rect x="0" y="11.6" width="2" height="2" fill="#fff"/><rect x="0" y="11.3" width="1.4" height="1.4" fill="#b5b5b5"/><rect x="3" y="14.5" width="2" height="2" fill="#fff"/><rect x="3" y="14.2" width="1.4" height="1.4" fill="#b5b5b5"/><rect x="0" y="17.4" width="2" height="2" fill="#fff"/><rect x="0" y="17.1" width="1.4" height="1.4" fill="#b5b5b5"/><rect x="3" y="20.3" width="2" height="2" fill="#fff"/><rect x="3" y="20" width="1.4" height="1.4" fill="#b5b5b5"/></svg><svg class="ic" style="left:406px;top:68px" width="24" height="24" viewBox="0 0 24 24" ><g opacity="0.95"><path d="M0.6 6L4.2 0.8H20.5V11.2H4.2Z" fill="#f0dc82" stroke="#c9ae3c" stroke-width="1"/><text x="12.6" y="9" font-family="Liberation Sans,sans-serif" font-weight="bold" font-size="8.4" text-anchor="middle" fill="#6b6b6b">abc</text></g></svg><svg class="ic" style="left:444.5px;top:67.5px" width="24" height="24" viewBox="0 0 24 24" ><rect x="-0.5" y="-0.5" width="24" height="18.5" fill="#dbe6f6" stroke="#7ea6e0" stroke-width="1"/><g transform="translate(2 2)"><g opacity="1"><path d="M0.6 6L4.2 0.8H20.5V11.2H4.2Z" fill="#f2d640" stroke="#b89a14" stroke-width="1"/><text x="9.5" y="9" font-family="Liberation Sans,sans-serif" font-weight="bold" font-size="7.6" text-anchor="middle" fill="#222">ab</text></g></g><rect x="15.2" y="4.6" width="2.2" height="6" rx="1" fill="#eee" stroke="#999" stroke-width=".5"/><circle cx="17.5" cy="13" r="4" fill="#b01318"/><circle cx="16.3" cy="11.8" r="1.2" fill="#e0565a"/></svg><svg class="ic" style="left:482px;top:68px" width="24" height="24" viewBox="0 0 24 24" ><g opacity="0.9"><path d="M0.6 6L4.2 0.8H20.5V11.2H4.2Z" fill="#f0dc82" stroke="#c9ae3c" stroke-width="1"/><text x="9.5" y="9" font-family="Liberation Sans,sans-serif" font-weight="bold" font-size="8.4" text-anchor="middle" fill="#6b6b6b">ab</text></g><rect x="16" y="3.5" width="2.2" height="6" rx="1" fill="#eee" stroke="#aaa" stroke-width=".5"/><circle cx="18" cy="14" r="4.6" fill="#c97d84"/></svg><svg class="ic" style="left:520px;top:68px" width="24" height="24" viewBox="0 0 24 24" ><g opacity="0.9"><path d="M0.6 6L4.2 0.8H20.5V11.2H4.2Z" fill="#f0dc82" stroke="#c9ae3c" stroke-width="1"/><text x="12.6" y="9" font-family="Liberation Sans,sans-serif" font-weight="bold" font-size="8.4" text-anchor="middle" fill="#6b6b6b">abc</text></g><path d="M8 15.5Q15 9.5 22 15.5Q15 21 8 15.5Z" fill="#f4f4f4" stroke="#9a9a9a" stroke-width=".9"/><circle cx="15" cy="15.3" r="2.7" fill="#86a6d2"/><circle cx="15" cy="15.3" r="1.1" fill="#333"/></svg><svg class="ic" style="left:558.5px;top:68px" width="24" height="24" viewBox="0 0 24 24" ><g opacity="0.9"><path d="M0.6 6L4.2 0.8H20.5V11.2H4.2Z" fill="#f0dc82" stroke="#c9ae3c" stroke-width="1"/><text x="12.6" y="9" font-family="Liberation Sans,sans-serif" font-weight="bold" font-size="8.4" text-anchor="middle" fill="#6b6b6b">abc</text></g><g opacity=".9"><rect x="13" y="9.5" width="10" height="10" fill="#87a5d0" stroke="#6f8fbe" stroke-width=".7"/><path d="M14.5 13.2H18.2V11L22 14.6L18.2 18.2V16H14.5Z" fill="#fff"/></g></svg><svg class="ic" style="left:596.5px;top:68px" width="24" height="24" viewBox="0 0 24 24" ><g opacity="0.9"><path d="M0.6 6L4.2 0.8H20.5V11.2H4.2Z" fill="#f0dc82" stroke="#c9ae3c" stroke-width="1"/><text x="12.6" y="9" font-family="Liberation Sans,sans-serif" font-weight="bold" font-size="8.4" text-anchor="middle" fill="#6b6b6b">abc</text></g><g opacity=".9"><rect x="13" y="9.5" width="10" height="10" rx="1.2" fill="#8aa4cb" stroke="#6f8fbe" stroke-width=".7"/><path d="M15.5 16A3 3 0 1 0 17 12.4" fill="none" stroke="#fff" stroke-width="1.4"/><path d="M14.2 15L15.6 17.6L17.6 15.6Z" fill="#fff"/></g></svg><svg class="ic" style="left:634.5px;top:68px" width="24" height="24" viewBox="0 0 24 24" ><g opacity="0.9"><path d="M0.6 6L4.2 0.8H20.5V11.2H4.2Z" fill="#f0dc82" stroke="#c9ae3c" stroke-width="1"/><text x="12.6" y="9" font-family="Liberation Sans,sans-serif" font-weight="bold" font-size="8.4" text-anchor="middle" fill="#6b6b6b">abc</text></g><g opacity=".9"><rect x="13" y="9.5" width="10" height="10" fill="#e1cc6c" stroke="#cdb54c" stroke-width=".7"/><path d="M14.5 18.5L15.5 15.8L20.6 11L22 12.4L17 17.4Z" fill="#fff"/></g></svg><svg class="ic" style="left:670.5px;top:65px" width="6" height="25" viewBox="0 0 6 25" ><rect x="0" y="0" width="2" height="2" fill="#fff"/><rect x="0" y="-0.3" width="1.4" height="1.4" fill="#b5b5b5"/><rect x="3" y="2.9" width="2" height="2" fill="#fff"/><rect x="3" y="2.6" width="1.4" height="1.4" fill="#b5b5b5"/><rect x="0" y="5.8" width="2" height="2" fill="#fff"/><rect x="0" y="5.5" width="1.4" height="1.4" fill="#b5b5b5"/><rect x="3" y="8.7" width="2" height="2" fill="#fff"/><rect x="3" y="8.4" width="1.4" height="1.4" fill="#b5b5b5"/><rect x="0" y="11.6" width="2" height="2" fill="#fff"/><rect x="0" y="11.3" width="1.4" height="1.4" fill="#b5b5b5"/><rect x="3" y="14.5" width="2" height="2" fill="#fff"/><rect x="3" y="14.2" width="1.4" height="1.4" fill="#b5b5b5"/><rect x="0" y="17.4" width="2" height="2" fill="#fff"/><rect x="0" y="17.1" width="1.4" height="1.4" fill="#b5b5b5"/><rect x="3" y="20.3" width="2" height="2" fill="#fff"/><rect x="3" y="20" width="1.4" height="1.4" fill="#b5b5b5"/></svg><svg class="ic" style="left:683.5px;top:65px" width="6" height="25" viewBox="0 0 6 25" ><rect x="0" y="0" width="2" height="2" fill="#fff"/><rect x="0" y="-0.3" width="1.4" height="1.4" fill="#b5b5b5"/><rect x="3" y="2.9" width="2" height="2" fill="#fff"/><rect x="3" y="2.6" width="1.4" height="1.4" fill="#b5b5b5"/><rect x="0" y="5.8" width="2" height="2" fill="#fff"/><rect x="0" y="5.5" width="1.4" height="1.4" fill="#b5b5b5"/><rect x="3" y="8.7" width="2" height="2" fill="#fff"/><rect x="3" y="8.4" width="1.4" height="1.4" fill="#b5b5b5"/><rect x="0" y="11.6" width="2" height="2" fill="#fff"/><rect x="0" y="11.3" width="1.4" height="1.4" fill="#b5b5b5"/><rect x="3" y="14.5" width="2" height="2" fill="#fff"/><rect x="3" y="14.2" width="1.4" height="1.4" fill="#b5b5b5"/><rect x="0" y="17.4" width="2" height="2" fill="#fff"/><rect x="0" y="17.1" width="1.4" height="1.4" fill="#b5b5b5"/><rect x="3" y="20.3" width="2" height="2" fill="#fff"/><rect x="3" y="20" width="1.4" height="1.4" fill="#b5b5b5"/></svg>
<div id="ltb"></div><div><svg class="ic" style="left:8px;top:100px" width="36" height="6" viewBox="0 0 36 6" ><rect x="0" y="0" width="2" height="2" fill="#fff"/><rect x="-0.3" y="0" width="1.4" height="1.4" fill="#b8b8b8"/><rect x="2.9" y="3" width="2" height="2" fill="#fff"/><rect x="2.6" y="3" width="1.4" height="1.4" fill="#b8b8b8"/><rect x="5.8" y="0" width="2" height="2" fill="#fff"/><rect x="5.5" y="0" width="1.4" height="1.4" fill="#b8b8b8"/><rect x="8.7" y="3" width="2" height="2" fill="#fff"/><rect x="8.4" y="3" width="1.4" height="1.4" fill="#b8b8b8"/><rect x="11.6" y="0" width="2" height="2" fill="#fff"/><rect x="11.3" y="0" width="1.4" height="1.4" fill="#b8b8b8"/><rect x="14.5" y="3" width="2" height="2" fill="#fff"/><rect x="14.2" y="3" width="1.4" height="1.4" fill="#b8b8b8"/><rect x="17.4" y="0" width="2" height="2" fill="#fff"/><rect x="17.1" y="0" width="1.4" height="1.4" fill="#b8b8b8"/><rect x="20.3" y="3" width="2" height="2" fill="#fff"/><rect x="20" y="3" width="1.4" height="1.4" fill="#b8b8b8"/><rect x="23.2" y="0" width="2" height="2" fill="#fff"/><rect x="22.9" y="0" width="1.4" height="1.4" fill="#b8b8b8"/><rect x="26.1" y="3" width="2" height="2" fill="#fff"/><rect x="25.8" y="3" width="1.4" height="1.4" fill="#b8b8b8"/><rect x="29" y="0" width="2" height="2" fill="#fff"/><rect x="28.7" y="0" width="1.4" height="1.4" fill="#b8b8b8"/><rect x="31.9" y="3" width="2" height="2" fill="#fff"/><rect x="31.6" y="3" width="1.4" height="1.4" fill="#b8b8b8"/></svg><svg class="ic" style="left:12px;top:110.5px" width="24.5" height="24.5" viewBox="0 0 24.5 24.5" ><path d="M3.5 4.5L9.5 18.5L15.5 5" fill="none" stroke="#2f4f73" stroke-width="1.3"/><path d="M16 4H21" stroke="#2f4f73" stroke-width="1.1"/><circle cx="3" cy="3.2" r="1.9" fill="#fff" stroke="#2f4f73" stroke-width="1"/><circle cx="9.5" cy="19.5" r="2" fill="#fff" stroke="#2f4f73" stroke-width="1"/><circle cx="16" cy="4" r="1.7" fill="#fff" stroke="#2f4f73" stroke-width="1"/><circle cx="22" cy="3.6" r="1.7" fill="#fff" stroke="#2f4f73" stroke-width="1"/><g transform="translate(14.5 14.5)" opacity="1"><rect width="9.5" height="9.5" rx="1.6" fill="#5d9c5a" stroke="rgba(0,0,0,.12)" stroke-width=".6"/><path d="M1.8 4.75H7.7" stroke="#fff" stroke-width="2"/><path d="M4.75 1.8V7.7" stroke="#fff" stroke-width="2"/></g></svg><svg class="ic" style="left:12px;top:148.5px" width="24.5" height="24.5" viewBox="0 0 24.5 24.5" ><rect x="0.5" y="0.5" width="6.6" height="6.2" fill="#2b456b"/><rect x="7.1" y="0.5" width="6.6" height="6.2" fill="#6f9bd1"/><rect x="13.7" y="0.5" width="6.6" height="6.2" fill="#2b456b"/><rect x="0.5" y="6.7" width="6.6" height="6.2" fill="#8fb2dc"/><rect x="7.1" y="6.7" width="6.6" height="6.2" fill="#2b456b"/><rect x="13.7" y="6.7" width="6.6" height="6.2" fill="#6f9bd1"/><rect x="0.5" y="12.9" width="6.6" height="6.2" fill="#2b456b"/><rect x="7.1" y="12.9" width="6.6" height="6.2" fill="#6f9bd1"/><rect x="13.7" y="12.9" width="6.6" height="6.2" fill="#2b456b"/><g transform="translate(14.5 14.5)" opacity="1"><rect width="9.5" height="9.5" rx="1.6" fill="#5d9c5a" stroke="rgba(0,0,0,.12)" stroke-width=".6"/><path d="M1.8 4.75H7.7" stroke="#fff" stroke-width="2"/><path d="M4.75 1.8V7.7" stroke="#fff" stroke-width="2"/></g></svg><svg class="ic" style="left:12px;top:187px" width="24.5" height="24.5" viewBox="0 0 24.5 24.5" ><path d="M4.5 2.5C1 3 0.5 8 2 11C3 13 5 13.5 6 12.5L7 15.5C7.5 17.5 11 18 12 16L12.2 13H14.5C16.5 13 17.5 11 16.8 9.5C18.5 6 16 1.5 11.5 1.5C9 1.5 6.5 2 4.5 2.5Z" fill="#6f95c8" stroke="#2c4a78" stroke-width="1.1"/><path d="M6 12.5C5.5 9 6.5 5.5 8 4M12.2 13C12.6 10 12 7.5 11 6" fill="none" stroke="#2c4a78" stroke-width="1"/><circle cx="13.6" cy="7" r=".9" fill="#1b2f50"/><g transform="translate(14.5 14.5)" opacity="1"><rect width="9.5" height="9.5" rx="1.6" fill="#5d9c5a" stroke="rgba(0,0,0,.12)" stroke-width=".6"/><path d="M1.8 4.75H7.7" stroke="#fff" stroke-width="2"/><path d="M4.75 1.8V7.7" stroke="#fff" stroke-width="2"/></g></svg><svg class="ic" style="left:12px;top:225px" width="24.5" height="24.5" viewBox="0 0 24.5 24.5" ><path d="M1 23C3 13 10 3.5 23 0.5C21 9 14 16 5.5 17.5Z" fill="#8fb0dc" stroke="#2c4a78" stroke-width="1"/><path d="M1.5 22C6 13 13 6 22 1.5M8 15.5L13 9M11 16L17 9M6 18L8 12" fill="none" stroke="#2c4a78" stroke-width=".8"/><g transform="translate(14.5 14.5)" opacity="1"><rect width="9.5" height="9.5" rx="1.6" fill="#5d9c5a" stroke="rgba(0,0,0,.12)" stroke-width=".6"/><path d="M1.8 4.75H7.7" stroke="#fff" stroke-width="2"/><path d="M4.75 1.8V7.7" stroke="#fff" stroke-width="2"/></g></svg><svg class="ic" style="left:12px;top:263px" width="24.5" height="24.5" viewBox="0 0 24.5 24.5" ><path d="M2 1.5C12 2 21 6 23.5 13L2 21.5C6.5 15 6.5 8 2 1.5Z" fill="#7fa6d8" stroke="#2c4a78" stroke-width="1.1" stroke-linejoin="round"/><path d="M9 3C12.5 8 12.5 13 9.5 18.5M15 5C18 9 18 12.5 16 16" fill="none" stroke="#2c4a78" stroke-width="1"/><g transform="translate(14.5 14.5)" opacity="1"><rect width="9.5" height="9.5" rx="1.6" fill="#5d9c5a" stroke="rgba(0,0,0,.12)" stroke-width=".6"/><path d="M1.8 4.75H7.7" stroke="#fff" stroke-width="2"/><path d="M4.75 1.8V7.7" stroke="#fff" stroke-width="2"/></g></svg><svg class="ic" style="left:12px;top:300.8px" width="24.5" height="24.5" viewBox="0 0 24.5 24.5" ><circle cx="11.5" cy="11.5" r="11" fill="#a9c4e6" stroke="#5d86bd" stroke-width="1"/><path d="M0.8 11.5H22.2M11.5 0.8V22.2M3 5.5H20M3 17.5H20M11.5 0.8C5 6 5 17 11.5 22.2M11.5 0.8C18 6 18 17 11.5 22.2" fill="none" stroke="#e9f0fa" stroke-width=".9"/><path d="M4 6L8 5L9 8L6 10L4.5 9ZM12 4.5L17 5L18.5 8L15 9.5L13 7.5ZM6 13L9 12.5L10 16L7.5 17.5ZM14 12L18 12.5L17 16L14.5 15.5Z" fill="#2c4a78"/><g transform="translate(14.5 14.5)" opacity="1"><rect width="9.5" height="9.5" rx="1.6" fill="#5d9c5a" stroke="rgba(0,0,0,.12)" stroke-width=".6"/><path d="M1.8 4.75H7.7" stroke="#fff" stroke-width="2"/><path d="M4.75 1.8V7.7" stroke="#fff" stroke-width="2"/></g></svg><svg class="ic" style="left:12px;top:338.4px" width="24.5" height="24.5" viewBox="0 0 24.5 24.5" ><ellipse cx="11.5" cy="11" rx="11.3" ry="10.3" fill="#1d3a63" stroke="#14263f" stroke-width=".8"/><path d="M4.5 7H18.5V10.3H4.5ZM4.5 13H18.5V16.5H4.5Z" fill="#6f9bd1"/><path d="M8 2.5H15V5H8ZM8 18.3H15V20.3H8Z" fill="#6f9bd1"/><path d="M0.5 11.5H22.5M1.5 6.2H21.5M1.5 17.2H21.5M11.5 0.8V21.2M11.5 0.8C5.5 5.5 5.5 16.5 11.5 21.2M11.5 0.8C17.5 5.5 17.5 16.5 11.5 21.2" fill="none" stroke="#fff" stroke-width="1"/><g transform="translate(14.5 14.5)" opacity="1"><rect width="9.5" height="9.5" rx="1.6" fill="#5d9c5a" stroke="rgba(0,0,0,.12)" stroke-width=".6"/><path d="M1.8 4.75H7.7" stroke="#fff" stroke-width="2"/><path d="M4.75 1.8V7.7" stroke="#fff" stroke-width="2"/></g></svg><svg class="ic" style="left:12px;top:376.7px" width="24.5" height="24.5" viewBox="0 0 24.5 24.5" ><ellipse cx="11.5" cy="10.5" rx="11" ry="9.8" fill="#dfe9f7" stroke="#5b8ad0" stroke-width="1"/><path d="M0.8 10.5H22.2M2 5.5H21M2 15.5H21M11.5 0.8V20.2M11.5 0.8C5.5 5 5.5 16 11.5 20.2M11.5 0.8C17.5 5 17.5 16 11.5 20.2" fill="none" stroke="#7ba3df" stroke-width=".8"/><g transform="translate(3.5 3.6) scale(.68)"><path d="M3.5 4.5L9.5 18.5L15.5 5" fill="none" stroke="#111" stroke-width="1.3"/><path d="M16 4H21" stroke="#111" stroke-width="1.1"/><circle cx="3" cy="3.2" r="1.9" fill="#fff" stroke="#111" stroke-width="1"/><circle cx="9.5" cy="19.5" r="2" fill="#fff" stroke="#111" stroke-width="1"/><circle cx="16" cy="4" r="1.7" fill="#fff" stroke="#111" stroke-width="1"/><circle cx="22" cy="3.6" r="1.7" fill="#fff" stroke="#111" stroke-width="1"/></g><g transform="translate(14.5 14.5)" opacity="1"><rect width="9.5" height="9.5" rx="1.6" fill="#5d9c5a" stroke="rgba(0,0,0,.12)" stroke-width=".6"/><path d="M1.8 4.75H7.7" stroke="#fff" stroke-width="2"/><path d="M4.75 1.8V7.7" stroke="#fff" stroke-width="2"/></g></svg><svg class="ic" style="left:15px;top:416px" width="24.5" height="24.5" viewBox="0 0 24.5 24.5" ><path d="M9 1C4.5 1 2.5 4.5 4 7.5C5.2 9.8 8.5 10 9.8 8.3C10.5 11.5 8.5 14.5 5 16L5.8 17.3C12 15.5 15.5 10.5 14.8 6C14.3 3 12 1 9 1Z" fill="#6f95c8" stroke="#2c4a78" stroke-width=".9"/><g transform="translate(14.5 14.5)" opacity="1"><rect width="9.5" height="9.5" rx="1.6" fill="#5d9c5a" stroke="rgba(0,0,0,.12)" stroke-width=".6"/><path d="M1.8 4.75H7.7" stroke="#fff" stroke-width="2"/><path d="M4.75 1.8V7.7" stroke="#fff" stroke-width="2"/></g></svg><svg class="ic" style="left:12px;top:452.5px" width="24.5" height="24.5" viewBox="0 0 24.5 24.5" ><path d="M3.5 4.5L9.5 18.5L15.5 5" fill="none" stroke="#2f4f73" stroke-width="1.3"/><path d="M16 4H21" stroke="#2f4f73" stroke-width="1.1"/><circle cx="3" cy="3.2" r="1.9" fill="#fff" stroke="#2f4f73" stroke-width="1"/><circle cx="9.5" cy="19.5" r="2" fill="#fff" stroke="#2f4f73" stroke-width="1"/><circle cx="16" cy="4" r="1.7" fill="#fff" stroke="#2f4f73" stroke-width="1"/><circle cx="22" cy="3.6" r="1.7" fill="#fff" stroke="#2f4f73" stroke-width="1"/><g transform="translate(14.5 14.5)"><rect width="9.5" height="9.5" rx="1.6" fill="#d0a90c"/><path d="M4.75 1.5L4.75 8M7.56458 3.125L1.93542 6.375M1.93542 3.125L7.56458 6.375" stroke="#fff" stroke-width="1.25" stroke-linecap="round"/></g></svg><svg class="ic" style="left:12px;top:492.5px" width="24.5" height="24.5" viewBox="0 0 24.5 24.5" ><g opacity=".85"><rect x="1.5" y="1.5" width="18.5" height="18.5" fill="#e6e6e4" stroke="#a9a9a9" stroke-width=".9"/></g><g transform="translate(14.5 14.5)" opacity="1"><rect width="9.5" height="9.5" rx="1.6" fill="#ee9aa4" stroke="rgba(0,0,0,.12)" stroke-width=".6"/><path d="M1.8 4.75H7.7" stroke="#fff" stroke-width="2"/></g></svg><svg class="ic" style="left:38.3px;top:466.8px" width="7.6" height="7.2" viewBox="0 0 7.6 7.2" ><path d="M0 0H7.6L3.8 7.2Z" fill="#555"/></svg><svg class="ic" style="left:8px;top:526.6px" width="36" height="6" viewBox="0 0 36 6" ><rect x="0" y="0" width="2" height="2" fill="#fff"/><rect x="-0.3" y="0" width="1.4" height="1.4" fill="#b8b8b8"/><rect x="2.9" y="3" width="2" height="2" fill="#fff"/><rect x="2.6" y="3" width="1.4" height="1.4" fill="#b8b8b8"/><rect x="5.8" y="0" width="2" height="2" fill="#fff"/><rect x="5.5" y="0" width="1.4" height="1.4" fill="#b8b8b8"/><rect x="8.7" y="3" width="2" height="2" fill="#fff"/><rect x="8.4" y="3" width="1.4" height="1.4" fill="#b8b8b8"/><rect x="11.6" y="0" width="2" height="2" fill="#fff"/><rect x="11.3" y="0" width="1.4" height="1.4" fill="#b8b8b8"/><rect x="14.5" y="3" width="2" height="2" fill="#fff"/><rect x="14.2" y="3" width="1.4" height="1.4" fill="#b8b8b8"/><rect x="17.4" y="0" width="2" height="2" fill="#fff"/><rect x="17.1" y="0" width="1.4" height="1.4" fill="#b8b8b8"/><rect x="20.3" y="3" width="2" height="2" fill="#fff"/><rect x="20" y="3" width="1.4" height="1.4" fill="#b8b8b8"/><rect x="23.2" y="0" width="2" height="2" fill="#fff"/><rect x="22.9" y="0" width="1.4" height="1.4" fill="#b8b8b8"/><rect x="26.1" y="3" width="2" height="2" fill="#fff"/><rect x="25.8" y="3" width="1.4" height="1.4" fill="#b8b8b8"/><rect x="29" y="0" width="2" height="2" fill="#fff"/><rect x="28.7" y="0" width="1.4" height="1.4" fill="#b8b8b8"/><rect x="31.9" y="3" width="2" height="2" fill="#fff"/><rect x="31.6" y="3" width="1.4" height="1.4" fill="#b8b8b8"/></svg></div>
<div id="lhead"><div class="t">Layers</div></div><div><svg class="ic" style="left:51px;top:99px" width="14" height="14" viewBox="0 0 14 14" ><circle cx="7" cy="7" r="6.6" fill="#3f3f3f"/><path d="M4.3 4.3L9.7 9.7M9.7 4.3L4.3 9.7" stroke="#fff" stroke-width="2" stroke-linecap="round"/></svg><svg class="ic" style="left:71px;top:99px" width="14" height="14" viewBox="0 0 14 14" ><circle cx="7" cy="7" r="6.6" fill="#3f3f3f"/><rect x="5.4" y="4" width="5" height="4" rx=".8" fill="none" stroke="#fff" stroke-width="1.1"/><rect x="3.6" y="6.2" width="5" height="4" rx=".8" fill="#3f3f3f" stroke="#fff" stroke-width="1.1"/></svg></div>
<div id="tree"></div><div><svg class="ic" style="left:54.7px;top:127.6px" width="10" height="8" viewBox="0 0 10 8" ><path d="M0.3 0.3H9.3L4.8 7.7Z" fill="#8b8b8b"/></svg><svg class="ic" style="left:75.8px;top:121px" width="16" height="18" viewBox="0 0 16 18" ><defs><linearGradient id="cbg1487" x1="0" y1="0" x2="0" y2="1"><stop offset="0" stop-color="#f6faff"/><stop offset=".45" stop-color="#c4ddfa"/><stop offset="1" stop-color="#8fc0f5"/></linearGradient></defs><rect x="0.6" y="3.6" width="12.8" height="12.8" rx="2.6" fill="url(#cbg1487)" stroke="#5c6f8c" stroke-width="1"/><path d="M3.2 9.2L6.3 13.6L13.6 0.8" fill="none" stroke="#0d1734" stroke-width="2.3" stroke-linejoin="miter"/></svg><svg class="ic" style="left:102.5px;top:124.6px" width="17" height="13" viewBox="0 0 17 13" ><path d="M1 5.5C0.6 1.2 4.6 0.6 7.6 2.6C9.6 3.8 12.5 0.6 15 2.2C17 3.8 16.6 11.6 13.6 11.6C11.4 11.6 10.4 9.6 8 9.8C5.4 10 4.4 12.2 2.6 11.2C1.2 10.4 1.2 8 1 5.5Z" fill="#e9e9e9" stroke="#a0a0a0" stroke-width="1"/></svg><div class="lname" style="left:125.5px;top:124.5px">lot_township_polygon</div><div class="abs" style="left:94px;top:141.9px;width:14px;height:13.5px;background:#0a8a06;border:1px solid #1c2b1c"></div><svg class="ic" style="left:54.7px;top:165.6px" width="10" height="8" viewBox="0 0 10 8" ><path d="M0.3 0.3H9.3L4.8 7.7Z" fill="#8b8b8b"/></svg><svg class="ic" style="left:75.8px;top:159px" width="16" height="18" viewBox="0 0 16 18" ><defs><linearGradient id="cbg1525" x1="0" y1="0" x2="0" y2="1"><stop offset="0" stop-color="#f6faff"/><stop offset=".45" stop-color="#c4ddfa"/><stop offset="1" stop-color="#8fc0f5"/></linearGradient></defs><rect x="0.6" y="3.6" width="12.8" height="12.8" rx="2.6" fill="url(#cbg1525)" stroke="#5c6f8c" stroke-width="1"/><path d="M3.2 9.2L6.3 13.6L13.6 0.8" fill="none" stroke="#0d1734" stroke-width="2.3" stroke-linejoin="miter"/></svg><svg class="ic" style="left:102.5px;top:162.6px" width="17" height="13" viewBox="0 0 17 13" ><path d="M1 5.5C0.6 1.2 4.6 0.6 7.6 2.6C9.6 3.8 12.5 0.6 15 2.2C17 3.8 16.6 11.6 13.6 11.6C11.4 11.6 10.4 9.6 8 9.8C5.4 10 4.4 12.2 2.6 11.2C1.2 10.4 1.2 8 1 5.5Z" fill="#e9e9e9" stroke="#a0a0a0" stroke-width="1"/></svg><div class="lname" style="left:125.5px;top:162.8px">coastline_polygon</div><div class="abs" style="left:94px;top:180px;width:14px;height:14px;background:#fff;border:1px solid #8e8e8e;border-bottom-color:#555"></div></div>
<div id="tabs"><div class="abs" style="left:48.5px;top:1179px;width:293px;height:12px;border:1px solid #d6d6d6;border-top:none;border-radius:0 0 4px 4px;background:#e4e4e4;box-sizing:border-box"></div><div class="abs" style="left:128.5px;top:1179px;width:62px;height:19px;border-radius:4px 0 0 4px;background:linear-gradient(#7a7a7a,#9b9b9b 60%,#a6a6a6);border:1px solid #6a6a6a;box-sizing:border-box;color:#fff;text-align:center;font-size:12.3px;line-height:16.5px;text-indent:-2px;text-shadow:0 1px 0 rgba(0,0,0,.35)">Layers</div><div class="abs" style="left:190.5px;top:1179px;width:72px;height:19px;border-radius:0 4px 4px 0;background:linear-gradient(#ffffff,#f1f1f1 60%,#e9e9e9);border:1px solid #a0a0a0;border-left:none;box-sizing:border-box;color:#000;text-align:center;text-indent:3px;font-size:12.3px;line-height:16.5px">Browser</div></div>
<div id="canvas">
<svg class="abs" style="left:-1px;top:-1px" width="1179" height="1104" viewBox="400 129 1179 1104">
<rect x="415.5" y="304.5" width="1139" height="750" fill="#fff" stroke="#4a4a4a" stroke-width="1"/>
<path d="M623.5 309.4 L621.0 312.5 L617.8 317.5 L614.7 321.9 L612.8 326.3 L611.0 329.4 L607.2 333.8 L603.4 337.6 L600.9 342.0 L598.4 345.7 L595.3 348.9 L591.5 351.4 L587.8 353.3 L583.4 355.1 L579.6 357.6 L575.9 360.8 L572.1 363.9 L568.3 367.0 L565.2 370.2 L562.1 372.7 L560.2 374.6 L556.4 375.2 L552.7 376.4 L548.9 378.3 L545.8 380.2 L542.7 383.3 L539.5 386.5 L537.0 389.0 L534.5 391.5 L534.9 395.9 L532.6 399.0 L530.1 401.5 L528.2 404.0 L526.4 407.8 L523.9 410.9 L520.7 413.4 L517.6 415.9 L517.0 419.0 L516.3 423.4 L513.8 426.6 L512.3 429.1 L512.0 432.8 L510.7 436.6 L509.4 439.7 L506.9 444.1 L504.4 448.5 L502.6 452.3 L500.7 457.3 L498.8 461.7 L496.3 464.8 L493.8 468.0 L490.7 473.4 L486.4 478.4 L482.2 483.5 L476.4 489.2 L470.2 495.5 L463.9 501.8 L457.6 508.0 L451.4 513.0 L446.8 516.0 L445.1 520.6 L441.3 525.6 L437.6 530.1 L434.1 534.3 L432.3 540.1 L430.7 540.0 L429.4 545.0 L428.8 551.3 L428.5 557.5 L428.8 563.8 L429.4 570.1 L430.7 575.1 L432.5 580.1 L435.0 585.1 L436.9 590.1 L438.8 595.1 L440.7 599.5 L443.2 603.3 L446.3 601.4 L448.8 599.5 L453.8 599.1 L458.8 599.5 L463.9 599.9 L468.9 598.9 L471.4 597.9 L475.1 597.4 L477.6 596.4 L482.7 596.4 L486.4 596.6 L488.3 595.8 L491.4 596.1 L495.2 597.4 L498.9 598.3 L505.2 598.3 L510.2 597.9 L515.2 597.9 L515.9 595.1 L519.0 595.1 L522.8 596.6 L526.5 597.4 L529.6 597.9 L530.3 601.4 L531.5 604.5 L535.3 607.7 L539.0 610.8 L543.4 613.9 L547.8 617.1 L552.8 620.2 L557.8 622.5 L562.9 624.2 L567.9 625.2 L567.2 622.7 L564.1 621.5 L566.0 618.3 L568.5 614.6 L571.0 610.2 L573.5 605.8 L576.0 601.4 L578.5 597.6 L581.7 594.5 L584.8 592.6 L586.7 590.8 L587.9 592.6 L586.0 595.1 L582.9 597.0 L581.0 600.2 L581.0 603.9 L581.7 607.7 L581.0 610.8 L582.3 615.2 L582.9 618.9 L581.7 622.1 L578.5 624.0 L577.9 626.5 L581.7 627.1 L585.4 626.5 L589.2 627.5 L592.3 626.5 L592.9 629.6 L591.7 632.7 L588.5 634.6 L585.4 637.1 L583.5 640.3 L582.9 644.0 L585.4 645.9 L581.7 646.5 L577.3 647.8 L574.8 651.5 L572.3 655.3 L569.7 659.0 L567.2 662.2 L565.6 665.3 L566.0 670.3 L566.4 675.3 L567.9 679.1 L568.9 684.1 L569.1 690.4 L568.2 690.0 L569.4 695.0 L570.1 700.0 L568.2 702.5 L566.3 705.7 L565.4 708.8 L566.3 712.6 L566.9 715.7 L564.4 718.2 L561.9 716.9 L559.4 718.2 L557.5 721.3 L554.4 724.5 L551.9 727.0 L550.7 730.7 L551.9 734.5 L553.2 738.2 L553.8 742.6 L554.0 747.0 L558.8 747.6 L565.1 748.3 L571.3 749.1 L577.6 749.9 L583.9 750.4 L590.1 751.0 L593.9 752.7 L597.6 755.2 L602.7 757.0 L608.9 758.3 L615.2 758.7 L621.5 757.7 L627.7 755.8 L634.0 753.3 L639.0 751.4 L642.8 749.5 L644.0 747.6 L640.3 746.4 L637.1 745.1 L639.0 742.0 L642.1 739.5 L644.6 736.4 L646.5 732.6 L648.4 729.5 L647.5 732.6 L646.8 735.7 L650.3 735.1 L653.4 733.2 L654.7 735.7 L654.0 738.9 L657.2 742.0 L655.5 743.9 L658.4 742.6 L661.6 744.5 L664.1 748.3 L666.6 752.0 L669.1 753.9 L670.3 751.4 L669.7 747.6 L670.1 743.9 L671.6 748.3 L676.6 747.4 L680.4 748.9 L684.1 751.4 L687.9 753.9 L690.0 756.3 L694.4 754.4 L698.8 753.2 L703.8 752.9 L707.5 752.3 L710.1 754.4 L712.3 757.6 L715.7 758.2 L719.4 756.9 L723.8 756.6 L728.8 756.1 L733.2 755.4 L731.4 758.2 L727.6 760.1 L725.1 762.6 L723.6 766.3 L724.5 769.5 L727.6 770.1 L730.1 772.6 L732.0 775.1 L735.1 777.0 L738.9 778.9 L742.6 780.1 L747.0 780.8 L745.1 782.6 L741.4 782.4 L737.6 783.3 L733.9 782.6 L731.4 784.9 L727.6 784.1 L724.5 785.1 L720.7 786.6 L718.2 784.5 L715.1 780.8 L711.9 777.0 L708.8 772.6 L706.0 769.1 L703.2 766.6 L701.3 764.1 L699.8 762.8 L700.7 765.7 L702.5 769.5 L705.0 773.2 L707.5 777.0 L710.1 780.8 L713.2 784.5 L716.3 787.4 L719.1 789.1 L716.9 790.4 L713.8 789.1 L710.7 791.0 L709.4 787.9 L705.0 788.4 L701.9 789.6 L700.0 792.7 L699.4 797.0 L700.7 801.4 L701.9 805.2 L706.3 803.9 L710.1 803.3 L714.4 804.6 L716.9 807.1 L719.4 810.2 L723.8 811.5 L728.2 812.7 L731.4 814.2 L732.6 817.7 L736.4 819.2 L739.5 822.1 L741.4 825.9 L743.3 829.6 L745.8 831.5 L748.9 830.9 L752.0 833.4 L752.7 837.8 L752.4 842.8 L753.3 844.7 L750.2 849.0 L747.6 852.8 L745.1 857.2 L747.0 855.3 L749.5 852.2 L752.0 849.7 L753.9 851.6 L757.7 854.7 L761.4 855.3 L763.3 852.2 L763.9 849.0 L766.4 851.6 L770.2 855.3 L773.3 859.1 L776.5 861.6 L775.8 866.0 L774.6 869.7 L777.7 868.5 L781.5 866.6 L785.2 867.8 L788.4 871.0 L790.3 874.1 L794.0 872.2 L797.1 874.1 L800.3 876.6 L804.0 878.5 L807.8 877.2 L809.0 874.1 L812.8 873.5 L816.6 875.4 L819.1 879.1 L822.8 879.7 L826.0 877.9 L827.2 874.1 L829.7 876.0 L831.6 879.7 L834.1 881.6 L839.1 881.0 L844.1 879.7 L847.9 879.1 L848.5 876.6 L852.9 878.5 L856.7 882.3 L860.0 884.6 L863.8 888.3 L867.5 892.7 L871.9 892.7 L876.3 891.5 L879.4 889.6 L881.9 887.1 L880.1 891.5 L879.4 895.2 L883.2 899.0 L887.6 902.1 L892.6 905.0 L897.6 904.6 L902.6 905.9 L907.6 907.1 L912.0 909.2 L915.8 912.1 L920.2 914.0 L923.9 916.5 L928.3 918.8 L932.1 919.0 L933.9 917.1 L935.2 919.6 L938.9 920.9 L942.7 922.8 L946.5 925.3 L950.2 927.8 L954.6 929.7 L959.0 931.8 L962.8 931.8 L966.5 930.9 L970.3 930.6 L974.0 929.7 L971.5 927.2 L972.2 922.8 L974.7 920.3 L974.0 917.1 L970.9 916.5 L971.5 914.0 L975.3 914.0 L979.0 914.6 L983.4 913.4 L986.6 911.5 L990.3 910.3 L994.7 909.0 L999.1 907.1 L1002.9 905.2 L1006.6 903.4 L1010.4 900.9 L1013.5 897.7 L1015.4 894.6 L1017.3 891.5 L1016.6 887.1 L1014.8 883.3 L1012.3 880.2 L1009.7 878.7 L1006.6 880.2 L1002.9 882.7 L999.1 883.9 L995.3 885.2 L991.6 887.1 L987.8 887.7 L984.1 890.2 L980.9 892.7 L977.8 895.8 L975.3 897.7 L973.4 894.6 L970.9 893.3 L970.3 890.2 L972.8 888.9 L977.2 887.9 L980.9 885.2 L983.4 882.7 L985.3 880.2 L983.4 877.0 L982.2 875.8 L986.6 875.2 L990.3 873.9 L992.8 875.2 L996.6 873.9 L1000.4 874.5 L1002.9 872.0 L1004.1 868.9 L1004.1 865.1 L1002.2 861.4 L1000.4 857.6 L997.8 854.5 L995.3 851.4 L992.8 847.6 L994.1 847.0 L997.2 850.1 L1000.4 852.6 L1003.5 853.9 L1004.7 850.1 L1004.1 845.7 L1002.9 842.0 L1006.0 847.6 L1007.2 852.6 L1007.2 857.0 L1008.5 861.4 L1010.4 863.9 L1013.5 865.1 L1016.6 864.5 L1020.4 863.3 L1024.2 861.4 L1026.7 860.8 L1028.5 863.3 L1027.3 866.4 L1025.4 870.2 L1022.9 872.0 L1021.0 875.2 L1019.1 878.3 L1018.5 881.4 L1020.4 883.3 L1021.7 886.4 L1022.3 888.9 L1025.4 888.3 L1029.2 889.6 L1032.9 888.9 L1036.7 888.3 L1040.0 889.5 L1043.8 888.9 L1047.5 890.1 L1051.3 892.0 L1053.8 893.9 L1055.7 889.5 L1060.1 888.9 L1064.4 890.8 L1066.9 892.6 L1065.7 895.8 L1065.1 898.9 L1066.3 901.4 L1071.3 901.7 L1076.3 902.4 L1080.1 902.7 L1083.9 902.0 L1084.5 898.9 L1082.0 897.6 L1080.1 894.5 L1082.0 891.4 L1084.5 889.5 L1087.6 887.6 L1090.1 885.1 L1092.6 882.0 L1094.5 880.7 L1092.6 884.5 L1090.8 888.2 L1089.5 891.4 L1088.2 894.5 L1091.4 892.6 L1095.1 890.8 L1098.3 891.4 L1101.4 893.9 L1103.9 896.4 L1106.4 899.5 L1108.3 902.0 L1105.2 903.3 L1102.0 901.4 L1100.2 903.9 L1098.9 907.7 L1097.0 912.1 L1095.1 916.4 L1093.3 918.9 L1092.6 924.0 L1093.3 929.0 L1093.9 932.7 L1094.1 936.5 L1096.4 935.2 L1098.9 933.4 L1099.9 929.0 L1102.0 929.2 L1101.2 933.4 L1100.4 937.1 L1103.9 935.9 L1107.7 934.6 L1111.4 933.4 L1114.6 930.9 L1116.4 928.3 L1118.9 926.5 L1120.2 924.6 L1121.5 927.7 L1123.3 926.5 L1125.2 922.7 L1126.5 920.2 L1126.5 916.4 L1127.7 920.2 L1129.6 923.3 L1133.4 924.0 L1135.2 926.5 L1132.7 929.0 L1130.9 932.1 L1129.0 935.2 L1129.2 940.3 L1129.0 944.0 L1130.2 946.5 L1129.0 947.8 L1126.5 946.5 L1123.3 947.1 L1120.2 949.0 L1117.7 951.5 L1115.8 954.7 L1113.9 956.5 L1110.2 956.5 L1106.4 957.2 L1104.5 959.7 L1102.0 962.2 L1098.9 964.1 L1095.1 965.9 L1091.4 967.8 L1087.6 969.1 L1083.9 970.3 L1080.1 971.6 L1076.3 972.2 L1073.2 971.6 L1070.1 971.6 L1067.6 973.5 L1066.9 976.6 L1064.4 978.5 L1061.3 979.7 L1058.8 981.0 L1057.5 982.9 L1058.8 985.4 L1061.9 985.1 L1065.1 983.5 L1068.8 982.9 L1072.6 984.1 L1076.3 982.9 L1080.1 982.2 L1083.9 981.0 L1087.6 980.4 L1091.4 981.0 L1095.1 981.6 L1098.9 980.4 L1101.4 977.2 L1102.7 974.7 L1105.2 977.8 L1108.3 979.1 L1111.4 977.8 L1115.8 977.8 L1118.9 979.1 L1115.2 981.0 L1111.4 981.0 L1108.9 982.9 L1106.4 986.0 L1104.2 989.1 L1106.4 990.4 L1108.3 993.5 L1110.8 996.6 L1113.9 999.8 L1116.4 1002.9 L1120.2 1005.4 L1124.0 1007.3 L1126.5 1008.0 L1140.0 1025.9 L1141.9 1029.7 L1144.4 1034.1 L1147.5 1036.6 L1151.3 1038.5 L1155.0 1041.0 L1160.1 1041.6 L1165.1 1041.9 L1170.1 1042.2 L1175.1 1043.5 L1180.1 1045.1 L1184.5 1044.7 L1185.1 1042.9 L1187.0 1046.6 L1188.9 1050.4 L1190.8 1052.9 L1193.3 1051.6 L1195.8 1049.7 L1195.1 1046.6 L1193.9 1045.4 L1197.6 1044.1 L1200.8 1042.9 L1203.9 1041.9 L1207.7 1042.9 L1211.4 1044.7 L1215.2 1044.1 L1220.2 1044.1 L1225.2 1044.4 L1229.6 1045.1 L1233.4 1044.7 L1237.7 1043.5 L1242.8 1042.6 L1247.8 1041.6 L1252.8 1040.6 L1257.8 1039.7 L1263.4 1039.3 L1269.1 1039.1 L1274.7 1038.8 L1280.4 1038.5 L1285.4 1037.2 L1290.4 1036.0 L1295.4 1034.7 L1300.4 1033.5 L1305.4 1031.0 L1309.8 1028.4 L1314.2 1025.3 L1317.9 1022.8 L1321.7 1020.3 L1324.8 1017.2 L1327.3 1014.0 L1329.2 1010.9 L1330.5 1007.8 L1330.2 1004.6 L1326.7 1004.0 L1323.0 1003.8 L1319.2 1002.8 L1316.7 1000.3 L1316.1 995.2 L1316.7 990.2 L1318.6 986.5 L1320.5 983.3 L1322.3 980.2 L1323.2 976.4 L1324.2 972.1 L1325.5 968.3 L1328.0 965.8 L1330.5 962.7 L1331.1 958.9 L1330.7 955.1 L1331.7 950.1 L1332.4 947.6 L1330.5 945.1 L1329.2 941.4 L1327.3 937.6 L1325.5 934.5 L1324.2 930.1 L1324.0 925.1 L1323.6 920.7 L1320.5 918.2 L1315.4 917.5 L1310.4 918.2 L1306.7 919.4 L1307.9 922.6 L1305.4 925.1 L1303.5 926.9 L1306.7 928.8 L1311.7 927.6 L1316.7 926.9 L1321.1 925.7 L1321.7 930.1 L1321.7 935.1 L1317.9 936.3 L1314.2 935.7 L1310.4 937.0 L1309.2 940.1 L1311.1 942.6 L1307.9 944.5 L1304.2 943.2 L1301.0 942.0 L1299.1 943.2 L1300.4 940.1 L1299.1 937.0 L1295.4 935.7 L1292.3 935.1 L1289.7 937.0 L1287.9 934.5 L1286.6 932.0 L1290.4 929.4 L1293.5 927.6 L1293.5 924.4 L1289.7 923.2 L1286.0 923.8 L1284.1 922.6 L1286.6 920.7 L1287.9 917.5 L1291.6 916.9 L1293.5 914.4 L1295.4 911.3 L1296.0 908.1 L1296.5 909.1 L1293.4 906.4 L1290.2 904.1 L1286.5 902.4 L1281.5 901.7 L1276.4 901.1 L1271.4 900.9 L1266.4 900.5 L1261.4 900.7 L1257.6 901.5 L1253.9 903.1 L1250.1 905.4 L1246.4 906.6 L1242.6 906.0 L1238.8 907.2 L1235.1 909.1 L1231.3 909.7 L1226.9 911.0 L1230.1 908.5 L1235.1 907.2 L1240.1 904.7 L1245.1 904.1 L1250.1 902.9 L1253.9 900.4 L1257.6 898.8 L1262.7 897.8 L1267.7 897.2 L1272.7 896.0 L1277.7 895.3 L1280.2 894.1 L1277.7 891.6 L1275.2 889.1 L1272.1 886.6 L1268.9 885.3 L1265.2 885.9 L1261.4 884.1 L1258.3 882.2 L1255.1 881.6 L1258.9 880.9 L1262.7 882.2 L1266.4 883.4 L1270.2 883.4 L1272.1 880.9 L1273.9 883.4 L1276.4 885.9 L1280.2 889.1 L1284.0 892.2 L1287.7 894.7 L1291.5 896.6 L1295.2 897.8 L1299.0 899.1 L1297.7 901.6 L1301.5 902.2 L1305.3 902.2 L1309.0 901.0 L1310.3 898.5 L1309.0 895.3 L1307.8 892.2 L1305.9 889.1 L1302.8 886.6 L1300.3 884.1 L1298.4 881.6 L1295.9 879.0 L1292.7 877.5 L1289.0 874.5 L1285.2 872.4 L1280.2 870.4 L1275.2 869.9 L1270.2 869.0 L1265.2 866.3 L1260.2 863.5 L1255.8 860.6 L1255.8 858.7 L1260.2 859.9 L1265.2 862.1 L1270.2 864.6 L1275.2 865.5 L1280.2 865.5 L1285.2 866.8 L1290.2 868.9 L1295.2 872.2 L1300.3 875.5 L1304.0 877.8 L1306.5 875.9 L1310.3 874.0 L1314.0 874.7 L1317.8 875.9 L1321.6 877.8 L1325.3 877.2 L1330.3 877.2 L1335.3 876.5 L1340.4 875.9 L1344.1 875.9 L1347.9 874.7 L1350.4 872.2 L1349.7 869.0 L1347.9 866.5 L1346.0 862.8 L1345.4 859.0 L1345.4 855.2 L1344.1 853.0 L1342.9 852.7 L1337.8 852.1 L1334.1 850.9 L1331.0 848.3 L1327.8 845.8 L1324.7 842.7 L1321.6 840.2 L1317.8 839.6 L1314.0 838.9 L1313.4 837.1 L1316.5 835.2 L1320.3 834.6 L1324.1 835.8 L1327.8 837.1 L1331.6 838.3 L1335.3 839.6 L1339.1 840.8 L1342.2 842.1 L1344.1 842.7 L1346.0 840.2 L1343.5 836.4 L1342.9 833.9 L1346.6 838.9 L1350.4 840.8 L1355.4 841.5 L1359.1 843.3 L1361.0 846.5 L1362.9 849.0 L1363.5 845.2 L1362.9 841.5 L1364.2 837.7 L1361.7 835.8 L1357.9 834.6 L1356.6 832.7 L1360.4 832.7 L1365.4 833.9 L1369.8 833.9 L1373.6 832.7 L1371.1 829.5 L1368.5 826.4 L1366.7 823.9 L1366.0 820.2 L1364.2 817.6 L1360.4 815.8 L1356.6 813.9 L1352.9 812.6 L1349.7 810.8 L1354.1 811.4 L1359.1 812.6 L1364.2 813.9 L1369.2 814.5 L1374.2 815.1 L1379.2 814.5 L1384.2 813.6 L1380.5 812.0 L1376.7 809.5 L1375.4 807.0 L1371.7 805.7 L1367.9 804.5 L1372.9 803.9 L1376.7 802.6 L1379.2 800.1 L1376.7 797.6 L1374.2 796.3 L1377.9 795.7 L1380.5 792.6 L1382.3 790.1 L1379.2 788.2 L1376.7 786.3 L1373.6 784.4 L1370.4 783.2 L1375.4 782.6 L1381.7 782.3 L1388.0 782.6 L1391.7 784.4 L1395.5 787.6 L1399.2 790.7 L1403.0 793.8 L1405.1 795.0 L1408.2 794.0 L1409.5 790.3 L1413.3 787.1 L1410.8 784.0 L1409.5 780.9 L1412.6 779.6 L1416.4 779.0 L1418.9 780.3 L1419.5 784.0 L1422.0 785.3 L1425.2 787.8 L1428.3 786.5 L1428.9 784.0 L1432.1 786.5 L1436.4 785.9 L1440.2 786.5 L1443.3 783.4 L1447.7 783.4 L1452.7 784.0 L1455.2 780.9 L1459.0 779.6 L1459.0 776.5 L1461.5 774.0 L1465.3 772.1 L1470.3 770.9 L1476.5 770.2 L1480.3 768.3 L1485.3 765.8 L1490.3 762.7 L1495.3 758.3 L1500.4 753.9 L1505.4 749.5 L1510.4 745.2 L1515.4 741.4 L1520.4 737.6 L1525.4 733.9 L1530.4 730.1 L1535.4 725.7 L1540.5 721.4 L1545.5 717.0 L1549.2 714.5 L1550.7 713.2 L1548.6 711.3 L1545.5 710.1 L1543.6 706.9 L1541.7 705.7 L1536.7 706.1 L1531.7 705.7 L1527.9 704.4 L1522.9 703.8 L1517.9 703.6 L1512.9 703.2 L1507.9 702.6 L1502.9 701.9 L1497.8 700.1 L1492.8 698.8 L1487.8 698.8 L1483.4 697.5 L1479.0 695.7 L1474.7 695.0 L1470.3 693.2 L1465.3 693.2 L1460.3 692.5 L1455.2 693.5 L1450.2 694.0 L1446.5 693.5 L1441.5 693.5 L1437.7 694.8 L1432.7 695.7 L1427.7 696.3 L1422.7 697.3 L1417.6 698.8 L1412.6 699.4 L1407.6 700.1 L1402.6 700.7 L1397.6 701.6 L1392.6 701.9 L1387.6 702.6 L1382.6 702.8 L1377.5 702.6 L1372.5 703.6 L1367.5 703.6 L1363.8 704.1 L1360.0 704.8 L1355.5 704.4 L1350.5 704.8 L1345.4 704.4 L1340.4 702.8 L1335.4 702.6 L1330.4 703.2 L1325.4 702.6 L1321.6 700.7 L1316.6 700.1 L1311.6 701.3 L1306.6 701.9 L1301.6 702.6 L1296.6 703.6 L1291.6 704.8 L1286.5 705.1 L1281.5 705.3 L1276.5 705.1 L1271.5 705.7 L1266.5 706.1 L1261.5 706.3 L1256.5 706.6 L1251.5 707.3 L1246.4 705.7 L1242.7 706.9 L1238.9 708.6 L1235.2 709.4 L1231.4 710.7 L1226.4 712.0 L1221.4 713.2 L1216.4 714.5 L1211.4 716.3 L1206.3 718.8 L1202.0 720.7 L1200.7 722.0 L1203.8 723.2 L1207.6 723.9 L1212.6 724.1 L1216.4 723.6 L1220.1 723.2 L1223.9 723.2 L1227.0 725.1 L1230.2 727.0 L1233.9 728.9 L1237.7 730.1 L1242.7 730.4 L1247.7 730.4 L1252.7 730.4 L1256.5 731.4 L1260.2 733.3 L1264.0 735.8 L1267.7 738.3 L1271.5 739.9 L1275.3 740.8 L1270.3 741.2 L1265.2 740.2 L1261.5 738.9 L1257.7 738.3 L1254.0 737.9 L1250.2 738.3 L1247.7 736.4 L1245.2 734.5 L1242.1 735.1 L1239.5 737.0 L1237.7 739.5 L1235.8 737.0 L1233.3 734.5 L1230.2 732.6 L1227.0 732.9 L1223.9 733.9 L1221.4 735.1 L1218.2 733.9 L1215.1 732.0 L1212.0 730.1 L1208.8 729.1 L1206.3 729.9 L1203.8 729.5 L1202.0 727.6 L1200.7 725.7 L1199.4 723.9 L1196.9 722.6 L1194.4 722.0 L1190.1 722.6 L1185.0 723.2 L1180.0 724.5 L1175.0 726.1 L1170.0 727.4 L1163.0 727.6 L1156.7 728.2 L1150.4 728.2 L1144.2 727.9 L1137.9 728.6 L1131.6 729.5 L1125.4 730.4 L1119.1 731.4 L1112.8 733.3 L1106.6 734.9 L1100.3 736.4 L1094.0 737.6 L1087.8 738.9 L1081.5 739.9 L1075.3 740.4 L1069.0 740.8 L1062.7 741.2 L1057.7 741.4 L1052.7 740.8 L1047.7 739.9 L1042.7 739.1 L1037.7 738.3 L1032.6 737.0 L1027.6 735.8 L1022.6 733.9 L1018.2 732.0 L1014.5 730.4 L1010.1 730.1 L1005.1 730.4 L1000.1 730.8 L995.1 730.8 L990.0 730.5 L985.0 730.1 L980.0 729.7 L975.0 729.5 L970.5 727.1 L965.5 725.2 L960.5 723.7 L955.4 722.1 L951.7 721.5 L949.2 720.2 L946.7 716.5 L944.2 712.7 L941.7 709.6 L939.8 706.4 L938.5 702.7 L937.3 698.9 L935.4 695.2 L933.5 692.0 L930.4 689.5 L926.6 687.6 L921.6 686.4 L916.6 685.4 L911.6 684.5 L906.6 683.6 L901.6 683.9 L896.5 684.1 L891.5 683.6 L886.5 682.9 L881.5 682.0 L876.5 680.8 L871.5 679.9 L866.5 678.9 L861.5 677.6 L856.4 676.4 L854.6 675.7 L853.9 672.6 L852.1 668.8 L849.5 665.7 L847.0 663.2 L844.5 660.7 L841.4 660.5 L837.6 660.1 L833.9 659.8 L830.1 659.1 L825.1 658.2 L820.1 656.3 L815.1 654.4 L810.1 652.6 L805.1 650.7 L800.1 648.8 L795.0 646.5 L790.0 644.4 L785.0 642.5 L780.0 640.7 L780.4 641.5 L775.3 639.6 L771.6 638.7 L769.1 639.6 L767.2 642.1 L764.1 644.0 L760.3 646.5 L756.5 643.3 L754.0 642.1 L750.9 642.7 L747.8 645.2 L746.5 647.7 L745.3 651.5 L744.0 655.2 L742.1 659.0 L740.3 661.5 L744.0 660.9 L747.8 660.3 L751.5 661.5 L755.3 662.1 L757.2 664.6 L757.8 667.8 L757.2 670.9 L756.5 676.5 L755.9 680.3 L755.0 672.8 L753.4 671.9 L750.3 672.2 L746.5 674.0 L742.8 677.2 L739.0 679.7 L735.2 682.2 L733.4 685.3 L732.5 689.1 L732.7 692.2 L735.2 692.8 L739.0 692.2 L742.8 691.0 L746.5 690.3 L750.3 691.0 L746.5 691.6 L744.6 693.5 L742.1 696.0 L742.8 697.8 L746.5 697.8 L750.3 698.5 L752.8 700.4 L754.7 702.9 L755.9 705.4 L757.2 708.5 L756.5 711.0 L754.0 712.3 L750.9 713.5 L747.8 714.8 L746.5 716.6 L747.8 718.5 L750.3 719.1 L749.0 721.7 L746.5 724.2 L744.0 725.4 L740.3 724.2 L736.5 722.9 L732.7 722.3 L730.2 720.4 L727.7 718.5 L725.2 717.3 L721.5 718.5 L717.7 719.1 L713.9 720.4 L711.4 718.5 L709.5 716.0 L706.4 714.1 L702.7 712.3 L698.9 710.4 L695.1 709.7 L692.0 709.1 L693.9 707.2 L693.9 704.1 L696.4 702.9 L700.2 704.1 L703.3 705.4 L703.9 703.5 L705.8 701.0 L705.2 697.8 L705.8 694.7 L707.7 692.2 L705.8 690.3 L705.2 686.6 L703.3 683.4 L700.8 680.9 L698.9 677.8 L697.0 674.0 L695.8 670.9 L693.9 671.5 L692.6 674.7 L690.1 677.2 L687.6 679.0 L683.9 679.7 L680.1 680.3 L676.3 679.7 L672.0 678.4 L671.6 682.8 L669.1 684.4 L665.3 685.1 L661.6 685.8 L658.0 687.7 L655.7 690.7 L653.8 693.7 L650.7 695.7 L647.5 697.0 L644.3 699.3 L640.5 701.9 L637.7 701.9 L639.0 699.4 L641.5 696.9 L640.0 699.1 L642.5 697.2 L646.3 693.5 L649.4 690.3 L651.9 686.6 L655.0 683.4 L658.8 680.9 L662.6 679.7 L666.9 677.8 L670.7 675.9 L672.6 674.0 L675.7 670.9 L678.2 667.8 L680.1 664.0 L681.4 660.3 L680.7 656.5 L679.8 652.7 L681.4 649.0 L683.2 645.2 L685.7 644.0 L687.4 641.5 L686.4 638.3 L687.0 635.8 L690.1 633.9 L693.9 633.3 L695.1 630.8 L692.0 628.3 L688.2 626.4 L684.5 623.9 L681.4 621.4 L677.6 620.8 L674.5 618.9 L671.3 616.4 L668.2 613.9 L666.9 611.4 L670.1 610.1 L672.8 608.2 L673.8 604.5 L673.2 600.1 L672.8 596.3 L673.8 593.2 L673.2 590.1 L671.3 586.3 L668.8 582.6 L665.1 580.1 L661.3 576.3 L660.1 571.9 L658.2 567.5 L655.0 563.8 L651.9 560.0 L650.3 560.3 L647.1 559.0 L646.3 555.9 L644.0 552.2 L640.3 549.0 L636.5 546.5 L632.7 542.8 L629.0 538.4 L626.7 534.0 L625.8 529.6 L620.2 526.2 L615.2 523.7 L610.9 521.5 L608.3 525.5 L605.2 529.8 L602.7 527.1 L598.9 523.7 L595.1 520.2 L592.6 516.1 L589.9 516.1 L588.2 520.2 L586.6 522.7 L587.4 527.7 L588.2 532.7 L591.4 533.7 L593.9 536.5 L595.1 540.3 L598.3 544.0 L602.7 545.9 L604.2 548.0 L599.1 546.8 L594.1 545.5 L589.1 544.8 L585.4 546.0 L582.6 549.0 L577.8 549.8 L576.0 547.8 L577.1 544.0 L579.1 541.3 L583.2 538.4 L585.9 532.7 L584.6 527.7 L584.1 521.5 L585.1 517.3 L584.6 513.9 L584.6 508.3 L583.2 504.2 L580.4 501.7 L575.3 500.4 L571.3 499.5 L571.6 496.4 L575.3 495.1 L579.1 493.3 L583.2 494.1 L587.4 494.1 L589.9 491.4 L591.4 487.6 L594.1 483.2 L595.9 478.8 L597.1 475.7 L598.1 473.6 L599.9 474.5 L600.2 477.6 L600.9 481.4 L602.3 485.1 L604.2 488.6 L606.4 492.6 L608.3 498.9 L611.4 505.2 L613.9 511.4 L615.2 516.4 L618.3 520.2 L621.5 524.0 L625.8 528.3 L628.1 529.2 L630.5 533.0 L633.4 536.7 L635.9 540.3 L639.0 543.4 L642.1 545.9 L645.9 549.3 L649.6 553.0 L653.4 556.5 L657.8 560.6 L661.6 564.3 L665.3 568.4 L669.1 572.6 L672.8 576.6 L676.6 579.7 L675.7 578.2 L677.6 580.7 L677.0 583.2 L680.7 583.8 L683.2 587.6 L685.1 590.7 L687.0 589.4 L690.1 590.1 L695.1 593.8 L700.2 598.8 L702.7 602.0 L707.7 606.4 L712.7 610.8 L715.2 613.3 L713.9 617.0 L712.7 621.4 L713.3 623.9 L716.4 621.4 L720.2 619.5 L724.0 616.4 L727.7 618.3 L732.7 622.0 L735.2 623.3 L739.0 625.8 L739.6 627.7 L742.8 628.9 L746.5 632.1 L749.0 635.8 L750.9 635.8 L750.3 633.3 L746.5 628.9 L740.3 623.9 L732.7 618.3 L725.2 613.3 L717.7 608.2 L710.2 603.2 L702.7 597.6 L695.1 591.3 L687.6 585.1 L680.1 578.8 L672.6 571.3 L665.1 565.6 L657.5 560.0 L650.3 552.2 L642.8 544.0 L635.2 535.9 L627.7 527.7 L621.5 520.2 L617.1 515.8 L615.8 511.4 L613.3 505.2 L610.2 498.9 L608.3 492.6 L606.4 486.4 L605.4 480.7 L606.7 476.3 L607.7 470.1 L608.3 464.4 L610.8 458.8 L613.9 452.5 L617.7 446.3 L621.5 440.0 L622.9 437.8 L626.0 434.1 L629.1 432.2 L632.3 429.7 L632.3 425.3 L631.6 420.3 L631.9 415.3 L632.3 410.3 L631.0 405.9 L629.1 401.5 L627.2 397.7 L625.4 394.0 L624.1 390.2 L623.9 385.2 L624.1 380.2 L623.9 375.2 L624.4 370.2 L625.1 365.2 L626.0 358.9 L625.6 352.6 L626.0 346.4 L626.4 340.1 L626.6 333.8 L626.9 327.6 L627.2 321.3 L627.6 316.3 L626.0 312.5Z" fill="#0a8a06" stroke="#000" stroke-width="2.05" stroke-linejoin="round" fill-rule="evenodd"/>
<path d="M757.2 646.5 L760.3 646.5 L764.1 644.6 L767.2 643.7 L770.3 645.2 L772.8 647.7 L774.7 651.5 L775.1 655.2 L772.8 657.7 L769.7 659.0 L766.6 658.4 L765.3 655.2 L764.1 652.1 L762.2 649.6 L759.0 648.3Z M1059.0 741.5 L1065.2 741.2 L1071.5 740.8 L1077.8 740.4 L1084.0 739.9 L1089.7 739.1 L1090.0 746.4 L1089.0 750.2 L1087.2 753.9 L1085.9 757.7 L1085.3 762.1 L1085.0 766.5 L1085.3 770.2 L1085.0 774.6 L1084.6 778.4 L1081.5 777.7 L1080.3 774.0 L1078.4 769.6 L1076.5 765.2 L1074.6 762.1 L1071.5 762.7 L1067.7 763.7 L1064.0 764.2 L1062.1 765.2 L1061.5 767.7 L1060.8 766.5 L1061.5 763.3 L1064.6 762.1 L1068.4 761.5 L1072.1 760.2 L1074.6 757.7 L1075.3 755.2 L1073.4 753.3 L1070.2 752.7 L1066.5 752.1 L1064.0 750.2 L1062.1 747.7 L1060.2 745.2Z M1142.9 745.8 L1146.1 743.3 L1149.2 740.2 L1151.1 736.4 L1152.9 733.3 L1156.1 732.0 L1159.2 732.0 L1159.8 735.8 L1160.5 739.5 L1159.8 742.7 L1156.7 743.3 L1153.6 744.2 L1150.4 745.2 L1147.3 745.8Z M855.2 676.2 L861.5 677.7 L867.7 679.1 L874.0 680.4 L880.3 681.8 L883.4 682.6 L882.1 687.0 L879.6 689.5 L876.5 690.8 L873.4 692.0 L872.7 695.2 L874.0 698.3 L872.1 699.5 L869.6 698.7 L867.7 700.2 L867.1 703.9 L866.5 707.1 L865.2 705.2 L864.0 701.4 L862.1 698.3 L860.2 695.2 L857.7 692.7 L855.8 690.2 L855.2 687.6 L853.3 688.3 L851.4 691.4 L849.5 695.2 L847.7 698.3 L845.8 701.4 L843.3 703.9 L841.4 704.6 L842.7 702.1 L844.5 698.9 L846.4 695.2 L848.3 691.4 L849.5 687.6 L850.2 683.9 L851.4 680.8 L853.3 678.2Z M931.6 715.2 L935.4 713.7 L939.1 714.2 L942.3 717.7 L942.9 720.2 L939.8 721.5 L938.5 724.0 L937.9 727.1 L936.6 730.3 L933.5 730.3 L931.6 729.0 L933.5 726.5 L934.8 723.4 L936.0 720.2 L935.4 717.1Z M952.3 721.7 L956.7 722.7 L961.7 724.2 L966.7 725.9 L971.7 727.7 L976.7 729.6 L978.6 734.0 L979.2 737.8 L978.6 741.5 L979.9 744.7 L976.7 745.3 L973.6 744.7 L970.5 745.9 L966.7 747.8 L963.6 749.0 L962.3 747.8 L964.2 744.7 L966.1 741.5 L968.0 738.4 L966.7 736.5 L963.6 735.9 L960.5 736.5 L957.3 735.9 L954.8 734.0 L953.6 730.9 L952.3 727.7 L951.4 724.6Z M1294.1 986.5 L1297.9 987.1 L1301.7 986.5 L1305.4 985.2 L1309.2 984.6 L1312.9 986.5 L1315.4 989.6 L1315.4 994.0 L1315.7 999.0 L1317.9 1002.1 L1315.4 1004.6 L1311.7 1005.9 L1307.9 1006.5 L1304.2 1005.3 L1301.0 1003.4 L1297.9 1001.5 L1295.4 999.6 L1292.3 999.0 L1287.9 999.0 L1284.1 999.6 L1280.4 999.0 L1277.8 1000.3 L1274.1 1002.1 L1270.3 1003.4 L1266.6 1004.0 L1263.4 1004.6 L1266.6 1002.8 L1270.3 1000.9 L1274.1 998.4 L1276.6 995.2 L1279.1 993.4 L1281.6 994.0 L1285.4 992.7 L1289.1 990.9 L1291.0 987.7 L1292.3 984.0 L1293.5 981.5Z M598.9 460.1 L603.9 460.7 L605.2 463.2 L602.7 464.4 L600.2 463.2Z M598.4 459.8 L602.2 460.4 L604.1 462.9 L600.9 463.5Z M642.8 696.3 L646.5 693.1 L650.3 690.6 L653.4 690.6 L652.8 693.1 L649.0 695.6 L645.3 698.8Z M576.6 550.7 L577.3 546.3 L579.1 543.1 L582.9 541.3 L586.7 540.3 L595.4 540.3 L597.9 543.8 L601.7 546.3 L605.5 546.9 L604.2 549.4 L600.5 547.5 L596.7 545.6 L592.9 544.4 L588.5 545.0 L585.4 546.9 L582.9 549.4 L579.8 551.3Z M1522.9 732.9 L1526.7 730.4 L1529.8 728.6 L1530.4 729.6 L1527.3 731.6 L1523.9 733.9Z M1307.8 833.9 L1310.9 836.4 L1313.4 838.3 L1312.2 839.6 L1309.0 837.7Z M1313.4 836.1 L1317.8 834.8 L1322.2 835.3 L1326.6 836.8 L1331.6 838.4 L1336.6 840.3 L1341.4 842.1 L1342.6 847.7 L1342.6 852.5 L1339.1 852.4 L1335.3 851.4 L1331.6 849.5 L1328.4 847.0 L1325.3 843.8 L1322.2 841.3 L1318.4 840.1 L1313.4 838.8Z M1255.1 881.8 L1258.9 882.6 L1262.7 884.1 L1266.4 885.3 L1270.2 885.9 L1273.9 887.8 L1276.4 890.3 L1278.3 892.8 L1275.2 891.6 L1271.4 889.1 L1267.7 887.8 L1263.9 886.8 L1260.2 885.3 L1257.0 883.4Z" fill="#fff" stroke="#000" stroke-width="2.0" stroke-linejoin="round"/>
<path d="M675.7 596.3 L678.8 595.5 L682.6 596.3 L686.4 598.2 L689.5 600.7 L692.0 603.9 L693.9 607.0 L693.3 610.1 L690.8 612.0 L689.5 614.5 L685.7 615.8 L682.6 613.9 L679.5 611.4 L677.6 610.1 L681.4 609.5 L683.2 607.0 L683.2 603.9 L681.4 601.4 L678.2 599.8 L676.1 598.2Z M694.8 615.8 L702.0 615.8 L702.4 621.4 L695.1 621.4Z M713.9 662.1 L716.4 661.3 L718.9 663.4 L720.8 667.1 L722.1 671.5 L720.2 671.5 L717.1 669.0 L714.6 666.5Z M729.6 656.5 L733.4 656.5 L733.4 659.6 L729.6 659.6Z M725.8 675.9 L728.3 677.2 L728.3 680.3 L726.5 679.0Z M595.1 487.0 L598.3 485.7 L601.4 487.0 L602.0 490.1 L600.8 493.3 L598.3 494.5 L596.1 492.6 L594.9 489.9Z M711.3 763.8 L713.8 763.2 L715.7 766.3 L715.1 768.8 L712.6 768.2 L711.1 766.3Z M985.3 940.3 L987.8 936.6 L991.6 933.4 L996.0 932.2 L996.6 935.3 L994.7 939.1 L991.6 942.2 L987.2 942.2Z M1044.8 925.9 L1049.2 925.3 L1052.4 925.5 L1050.5 929.0 L1047.3 929.3Z M1044.8 925.8 L1048.8 926.5 L1052.5 925.5 L1050.7 929.0 L1047.5 929.2Z M1338.5 885.9 L1341.6 885.3 L1345.4 886.6 L1349.1 889.1 L1351.6 891.6 L1353.5 894.7 L1355.4 897.8 L1353.5 897.8 L1351.6 894.7 L1347.9 892.2 L1344.1 891.0 L1340.4 889.7Z M1279.7 988.3 L1281.0 985.2 L1284.1 983.3 L1287.2 983.7 L1289.7 986.5 L1289.7 990.2 L1287.9 993.0 L1284.7 994.0 L1281.6 992.7Z" fill="#0a8a06" stroke="#000" stroke-width="2.0" stroke-linejoin="round"/>
<path d="M527.0 408.8 L573.4 397.7 L574.6 399.0 L611.6 389.6 M517.6 439.1 L569.0 426.6 L570.2 428.4 L630.4 412.8 M498.8 465.4 L562.7 452.9 L564.0 454.8 L617.8 441.6 M480.2 486.0 L485.2 503.0 L492.7 534.3 L499.5 558.1 L495.2 547.5 L500.2 563.8 L507.7 593.9 L509.0 598.3 M485.2 503.0 L596.7 476.7 M492.2 534.3 L582.9 513.0 M429.4 563.2 L495.2 547.5 M500.2 558.8 L545.9 547.8 L561.6 613.3 L563.5 621.5 M587.9 546.3 L597.9 590.1 L607.3 629.6 M597.9 590.1 L656.9 575.7 M592.3 633.4 L663.1 617.1 M592.0 703.8 L640.3 692.5 M597.0 729.5 L625.8 723.2 L688.5 708.2 M625.8 723.2 L632.7 752.0 M577.3 647.8 L582.9 669.1 L591.7 704.2 L592.0 703.8 L597.0 729.5 M582.9 669.1 L681.9 645.2 M591.7 704.2 L644.3 690.3 M720.5 720.1 L728.0 755.2 M722.6 730.0 L727.6 755.1 M792.2 646.5 L813.4 733.8 L817.8 746.3 L821.6 765.7 L826.0 791.4 L834.1 822.7 L840.4 849.0 L847.3 879.1 M758.4 713.4 L802.6 702.3 M733.9 755.7 L813.4 733.8 M746.4 785.1 L821.6 765.7 M732.6 813.3 L826.0 791.4 M753.3 844.7 L834.1 822.7 L875.5 811.5 L833.9 821.8 M817.8 746.3 L845.4 738.8 L845.7 739.8 M792.0 647.6 L812.6 732.8 L820.1 765.4 L833.9 821.8 L847.7 878.2 M823.9 660.2 L855.2 779.9 L883.3 773.7 M867.7 710.3 L894.0 811.8 M887.8 684.0 L919.1 808.0 M914.3 687.7 L944.7 801.0 M968.0 749.1 L991.0 831.8 M1003.3 742.1 L1017.1 792.2 L1022.4 792.0 L1036.4 837.8 M1042.7 740.1 L1062.7 817.8 M1087.0 775.4 L1103.3 841.9 M1109.6 734.6 L1142.2 856.9 M1137.9 728.8 L1166.3 835.0 M1168.8 726.5 L1195.1 828.0 M833.9 821.8 L875.2 812.0 L877.2 816.0 L912.1 808.0 L913.6 810.0 L952.4 800.0 L979.2 793.5 M875.2 812.5 L897.8 903.3 M905.8 810.0 L932.6 918.3 M913.3 810.0 L928.9 873.9 M952.4 800.0 L974.2 887.0 M991.0 833.1 L1031.1 823.1 M1069.5 840.1 L1072.2 850.6 L1102.6 841.4 L1132.1 834.3 M1028.1 887.7 L1142.2 856.9 M1140.9 844.4 L1166.3 835.0 L1195.1 828.0 M1104.6 892.5 L1181.0 871.9 M1153.4 913.8 L1190.2 903.4 M1172.2 835.2 L1181.0 872.0 L1190.5 902.9 L1199.0 925.9 L1206.8 953.5 L1214.8 980.3 L1222.8 1010.4 L1230.8 1045.5 M1181.7 835.2 L1206.8 923.4 M1207.6 729.0 L1225.7 796.4 L1254.0 901.9 M1242.0 708.7 L1246.5 730.2 M1250.3 740.3 L1264.0 789.1 M1279.1 705.7 L1296.1 764.8 M1331.0 703.9 L1345.5 751.5 L1356.8 792.9 L1364.8 821.7 M1358.0 705.2 L1382.6 781.6 M1391.4 702.7 L1411.4 775.3 M1424.7 698.1 L1448.2 783.4 M1460.3 693.1 L1484.1 765.3 M1201.4 804.4 L1229.4 908.4 M1255.0 790.1 L1276.3 865.3 M1283.3 770.1 L1286.6 783.9 L1295.1 812.7 L1303.9 840.3 L1313.4 871.6 M1310.9 762.8 L1331.7 835.2 M1200.1 803.9 L1225.7 796.9 L1255.0 790.1 L1257.0 790.6 L1286.6 783.6 M1283.3 769.6 L1345.5 751.3 M1206.4 923.5 L1236.2 914.9 M1271.4 872.3 L1277.7 895.3 M1206.5 954.0 L1288.0 930.7 M1214.8 980.6 L1329.6 947.5 M1065.2 981.6 L1200.5 942.5 M1113.8 993.6 L1208.0 969.0 M1137.3 1020.7 L1216.5 998.3 M1104.5 892.6 L1181.0 872.0" fill="none" stroke="#000" stroke-width="1.75"/>
<path d="M622.3 372.5 L624.2 374.1 M617.1 381.8 L615.2 380.8 M611.2 389.2 L608.8 387.8 M606.1 388.8 L604.4 390.3 M621.5 382.3 L621.0 384.6 M616.3 395.5 L617.5 397.0 M612.6 397.2 L609.9 396.7 M513.2 429.3 L512.1 430.4 M516.3 437.0 L517.4 438.9 M583.9 429.9 L585.8 429.9 M588.2 435.0 L587.3 436.3 M589.8 438.6 L592.1 438.2 M592.0 444.2 L593.8 444.2 M593.6 448.0 L592.5 450.8 M597.6 455.9 L600.4 456.4 M590.4 447.2 L589.2 447.1 M587.4 448.8 L586.3 447.8 M602.4 462.2 L605.0 460.6 M599.4 456.8 L598.3 457.4 M595.9 448.6 L593.5 448.3 M604.0 470.6 L602.4 471.9 M604.3 475.4 L606.1 476.1 M605.2 470.7 L606.5 472.0 M586.4 478.9 L584.9 477.3 M587.5 483.4 L588.8 484.1 M587.4 487.8 L586.2 488.4 M567.2 495.6 L565.8 493.9 M558.4 497.8 L557.1 497.9 M555.0 501.2 L553.7 500.1 M552.8 504.3 L553.9 505.1 M550.5 509.1 L551.1 510.5 M547.9 512.2 L546.4 510.9 M568.1 489.9 L566.5 487.6 M581.0 523.1 L579.6 525.6 M575.8 525.6 L574.0 523.0 M578.8 528.1 L579.4 529.2 M573.4 549.5 L572.7 551.8 M567.4 550.6 L566.9 553.1 M559.1 550.2 L558.5 552.8 M556.4 551.6 L555.9 552.7 M566.4 552.6 L568.4 553.3 M564.5 556.6 L562.1 557.7 M563.3 563.2 L561.8 564.4 M572.6 551.5 L574.2 550.8 M575.6 558.2 L574.5 560.7 M586.4 549.5 L585.4 552.1 M588.1 556.1 L589.6 555.4 M594.6 547.4 L592.7 549.6 M595.3 550.1 L592.8 551.1 M595.2 554.1 L593.3 556.2 M606.4 548.8 L606.1 551.8 M611.1 553.3 L613.8 553.2 M606.4 545.0 L608.3 546.9 M599.2 542.1 L597.1 540.2 M631.4 545.1 L629.7 544.4 M642.1 558.7 L640.8 561.4 M634.5 563.2 L632.5 562.7 M642.0 558.7 L640.3 558.3 M637.8 559.9 L636.6 561.8 M653.4 576.6 L652.8 575.3 M648.7 575.2 L648.3 572.8 M658.3 581.4 L659.8 582.7 M584.3 583.3 L582.9 585.6 M586.0 590.2 L588.8 591.5 M579.1 596.3 L578.9 599.4 M570.5 601.9 L569.7 604.4 M562.8 602.5 L563.0 601.1 M655.2 601.2 L653.1 601.6 M474.9 586.3 L473.7 587.7 M474.5 590.3 L471.9 590.6 M470.0 596.4 L467.2 596.3 M487.1 587.6 L488.4 590.0 M484.3 592.6 L484.2 594.4 M532.9 586.3 L531.5 587.1 M530.1 595.3 L526.9 595.5 M549.8 552.7 L552.2 550.8 M554.6 551.3 L555.8 548.7 M562.7 549.3 L563.4 551.7 M566.5 549.8 L568.5 548.1 M573.9 551.1 L574.2 549.2 M567.1 551.4 L565.6 551.4 M566.3 554.5 L566.6 556.2 M564.2 561.8 L563.0 562.3 M573.0 552.8 L576.0 552.8 M587.1 548.9 L588.9 550.1 M587.2 555.0 L585.1 557.2 M596.3 548.1 L594.8 548.0 M596.0 554.8 L597.7 557.4 M608.3 549.5 L608.4 551.6 M611.7 544.1 L613.3 546.4 M585.0 585.4 L587.0 586.5 M562.8 603.2 L560.9 604.2 M569.7 603.4 L571.1 604.3 M574.3 599.9 L575.8 600.2 M593.8 607.7 L590.9 608.9 M593.8 614.9 L594.7 616.2 M591.9 621.3 L590.0 621.5 M592.3 624.1 L594.6 624.6 M573.6 699.7 L571.6 701.1 M618.4 713.0 L618.7 710.6 M622.6 711.6 L623.7 714.4 M628.5 707.5 L628.3 705.2 M638.1 700.9 L641.0 701.7 M641.8 695.2 L641.0 694.4 M650.8 700.5 L651.7 702.3 M651.2 706.3 L649.4 707.1 M651.6 709.8 L652.2 710.9 M640.0 705.3 L641.6 707.4 M573.2 702.7 L572.4 704.1 M562.5 720.6 L559.7 720.4 M563.0 729.2 L562.7 730.5 M689.3 705.6 L691.0 707.0 M715.2 723.7 L716.4 722.2 M645.4 734.1 L643.3 734.5 M736.5 757.5 L736.6 760.0 M739.7 757.6 L741.0 759.1 M742.9 756.3 L743.8 753.6 M747.9 755.2 L748.7 756.5 M746.1 784.9 L747.5 785.8 M746.3 793.2 L747.9 794.5 M750.2 779.7 L751.3 780.3 M753.7 777.7 L755.9 778.7 M760.9 780.0 L762.0 781.5 M765.9 787.2 L767.8 784.7 M751.6 831.5 L752.8 830.7 M780.6 857.7 L782.5 859.7 M820.2 856.4 L821.6 855.5 M823.6 858.3 L824.8 857.3 M826.6 868.3 L825.7 869.6 M848.1 861.3 L848.0 862.8 M850.2 864.4 L852.2 863.7 M854.3 872.1 L852.5 872.9 M853.9 862.8 L852.1 863.4 M851.8 870.1 L850.6 872.0 M876.7 876.0 L878.9 876.5 M881.2 884.4 L882.5 885.0 M881.4 888.5 L883.0 889.9 M868.9 732.9 L868.5 734.4 M871.7 735.3 L872.2 737.6 M873.7 737.8 L873.1 738.9 M876.6 740.4 L874.8 742.8 M750.2 848.5 L750.9 851.3 M747.5 853.9 L748.2 854.8 M968.3 891.1 L966.6 890.2 M962.4 890.5 L961.8 889.4 M954.7 890.9 L954.3 888.6 M951.7 890.3 L952.7 887.7 M947.5 886.6 L950.1 885.6 M941.1 879.9 L942.6 878.1 M933.5 881.8 L934.0 879.1 M929.2 878.7 L928.2 876.3 M954.5 886.3 L956.0 886.2 M956.1 883.4 L958.4 882.7 M957.8 879.9 L957.4 877.0 M961.0 871.9 L959.4 869.6 M955.2 893.1 L953.2 893.6 M956.1 896.8 L953.5 897.3 M958.9 899.7 L959.1 901.4 M966.8 887.0 L964.6 884.8 M980.3 874.9 L981.3 876.0 M993.9 890.3 L993.2 891.6 M992.0 845.1 L993.2 843.7 M988.0 839.9 L988.6 838.2 M982.7 831.7 L980.6 831.0 M978.4 826.9 L979.6 826.1 M974.6 822.9 L974.8 821.2 M878.6 879.4 L878.2 881.5 M1023.8 858.9 L1025.4 857.5 M1025.4 851.5 L1025.0 849.6 M1026.5 846.4 L1025.1 846.0 M1032.1 845.9 L1034.9 846.1 M1034.4 838.7 L1036.1 837.0 M1038.0 836.9 L1038.6 838.0 M1045.1 831.8 L1047.9 832.1 M1048.7 825.6 L1051.1 827.1 M1050.7 821.0 L1053.8 820.6 M1058.9 818.2 L1059.6 815.8 M1061.6 817.3 L1063.1 817.7 M1029.9 857.2 L1031.5 856.2 M1036.1 855.5 L1037.5 857.2 M1043.0 854.3 L1045.4 853.0 M1046.6 851.1 L1044.8 850.4 M1045.0 846.4 L1046.8 845.8 M1048.3 843.8 L1046.4 842.1 M1054.3 842.2 L1056.0 843.1 M1055.9 837.1 L1058.1 836.9 M1061.8 829.8 L1064.0 831.2 M1050.7 858.8 L1052.7 859.4 M1053.6 842.1 L1051.7 841.9 M1047.3 845.1 L1046.0 842.9 M1046.6 850.2 L1048.8 849.8 M1050.5 854.8 L1052.7 855.1 M1123.8 910.9 L1122.6 911.2 M1122.8 907.2 L1124.8 906.1 M1121.8 900.6 L1123.7 899.2 M1121.7 896.4 L1119.8 894.4 M1128.1 910.6 L1128.2 909.3 M1129.8 904.2 L1132.0 902.3 M1135.4 894.1 L1137.1 894.1 M1141.0 886.7 L1140.0 884.9 M1147.4 883.0 L1150.2 884.1 M1129.7 915.6 L1131.2 914.8 M1136.3 912.9 L1137.7 915.3 M1141.7 915.7 L1143.3 915.7 M1150.7 915.8 L1151.4 918.1 M1131.8 946.0 L1131.8 944.6 M1135.6 944.3 L1136.9 946.7 M1121.0 971.2 L1119.8 971.7 M1123.1 981.6 L1125.1 981.5 M1125.5 984.5 L1127.2 984.6 M1129.8 987.9 L1131.5 986.1 M1124.0 979.1 L1123.4 976.5 M1125.4 969.5 L1127.8 970.4 M1232.0 910.0 L1233.6 908.4 M1237.0 909.4 L1238.0 910.2 M1231.9 909.8 L1232.7 907.2 M1236.6 910.9 L1238.8 910.7 M1240.0 907.2 L1242.8 907.5 M1246.7 905.1 L1247.7 904.2 M1254.9 902.0 L1256.2 902.6 M1258.5 900.2 L1257.4 897.5 M1286.0 940.5 L1288.4 941.2 M1293.9 979.6 L1290.9 978.9 M1151.6 1029.9 L1151.1 1031.8 M1149.9 1033.8 L1148.7 1034.4 M1141.9 914.0 L1142.7 915.6 M1151.0 915.2 L1152.1 918.0 M1224.5 1010.1 L1226.5 1008.4 M1229.5 1010.6 L1231.8 1009.1 M1234.8 1009.4 L1235.6 1010.5 M1239.6 1009.0 L1240.4 1008.1 M1244.3 1008.6 L1246.3 1010.3 M1253.8 1011.5 L1255.6 1009.2 M1256.6 1008.6 L1259.3 1008.4 M1262.6 1004.7 L1262.6 1003.2 M1283.5 1009.6 L1283.4 1007.5 M1286.9 1008.0 L1289.2 1008.2 M1293.6 1004.5 L1295.4 1006.1 M1291.6 1015.8 L1291.8 1013.4 M1294.2 1013.8 L1295.6 1014.6 M1299.5 1011.3 L1301.0 1008.9 M1214.0 773.9 L1216.5 773.8 M1215.5 766.8 L1217.2 766.9 M1219.2 761.4 L1218.4 758.8 M1292.1 808.7 L1291.8 810.2 M1296.6 815.5 L1299.1 815.3 M1296.7 820.0 L1298.5 820.8 M1299.2 825.0 L1297.8 827.1 M1302.6 830.0 L1305.6 829.0 M1304.7 831.6 L1307.3 830.5 M1337.6 782.0 L1338.2 784.3 M1346.9 786.2 L1347.5 788.4 M1353.9 787.1 L1355.5 785.3 M1357.5 787.0 L1359.9 787.6 M1365.0 792.1 L1367.4 791.3 M1368.1 794.0 L1369.6 793.8 M1339.8 785.5 L1339.9 788.1 M1281.0 860.1 L1282.6 862.2 M1293.4 862.0 L1295.2 862.5 M1341.8 868.7 L1342.1 870.6 M1400.0 763.4 L1398.0 765.4 M1403.9 767.4 L1405.6 767.1 M1246.3 859.7 L1247.3 857.3 M1249.9 861.3 L1251.6 861.0 M1241.7 884.9 L1243.1 884.1 M1248.1 883.3 L1248.1 881.7 M1344.6 879.2 L1342.5 880.1 M1306.2 840.6 L1308.0 839.4 M1312.2 839.4 L1313.5 842.0 M1401.5 762.0 L1401.7 764.2 M1404.6 768.1 L1407.2 768.8 M1410.0 773.1 L1412.7 772.2 M1414.1 775.7 L1415.3 773.5 M1406.0 770.6 L1405.1 771.5 M1491.8 709.7 L1490.7 707.0 M1498.3 707.1 L1498.4 705.2 M1501.1 704.8 L1500.4 702.9 M1501.2 708.2 L1500.7 705.7 M1497.6 709.8 L1496.9 711.8 M1489.4 711.7 L1487.9 710.1 M1506.6 744.9 L1507.1 746.8 M1512.3 740.7 L1514.0 741.8 M1514.9 738.6 L1517.3 740.3 M1522.4 733.3 L1523.9 733.0 M1527.9 729.1 L1530.2 730.2 M1483.3 758.6 L1485.3 756.4 M1486.8 756.9 L1489.4 758.4 M1492.3 754.1 L1494.7 755.2 M1499.5 750.3 L1499.4 748.8 M1483.1 761.8 L1481.9 762.7 M1180.6 727.9 L1179.3 730.0 M1184.7 732.4 L1186.2 732.4 M1188.0 737.0 L1188.4 739.0 M1236.5 743.3 L1236.9 745.0 M1247.9 741.3 L1249.6 742.5 M1249.3 744.9 L1251.4 744.3 M1250.7 749.0 L1252.0 749.5 M1253.8 752.2 L1252.8 753.9 M1220.0 737.1 L1220.5 738.3 M1214.3 742.4 L1213.8 744.8 M1215.5 748.1 L1214.1 750.6 M1217.4 757.9 L1220.1 759.5 M1216.4 765.6 L1213.8 766.6 M1214.5 770.5 L1214.8 772.4 M1337.1 781.0 L1337.1 783.0 M1339.5 782.9 L1342.1 781.6 M1347.2 784.7 L1347.4 785.9 M1355.0 786.6 L1356.9 784.4 M1363.8 789.2 L1363.8 791.0 M1368.4 792.1 L1368.6 793.4 M1337.7 786.7 L1338.4 789.6 M1370.3 781.8 L1370.3 784.0 M1293.8 809.9 L1294.2 811.7 M1296.1 817.4 L1299.1 817.3 M1298.5 822.2 L1300.9 822.2 M1300.1 825.3 L1300.2 827.7 M1304.4 831.2 L1306.2 832.6 M1310.4 837.2 L1309.5 839.9 M1057.9 763.5 L1056.5 762.5 M1050.2 767.9 L1047.2 768.7 M1047.4 775.7 L1048.3 778.5 M1050.5 765.0 L1049.2 762.7 M1139.6 753.7 L1137.1 753.0 M986.8 737.0 L987.6 739.6 M995.9 736.2 L997.3 738.4 M1001.3 740.0 L998.9 738.6 M1001.1 747.6 L1002.8 748.3 M989.2 738.6 L988.0 739.5 M1011.3 736.4 L1014.0 735.2 M1015.6 738.3 L1015.6 740.2 M1022.2 743.0 L1024.5 742.4 M1019.4 752.6 L1016.4 752.8 M979.2 743.1 L980.8 743.0 M977.8 827.0 L977.2 828.2 M982.4 832.2 L981.0 834.6 M986.3 836.8 L988.0 836.7 M990.3 845.1 L992.7 845.9 M1154.7 766.1 L1155.2 765.0 M1150.8 766.8 L1148.1 765.6 M1143.3 768.0 L1144.2 770.6 M1138.0 774.4 L1139.1 775.3 M1134.3 781.6 L1132.5 781.1 M1132.6 784.1 L1130.6 785.1 M1127.5 785.4 L1128.5 783.4 M1123.1 783.0 L1120.4 783.5 M1118.7 784.0 L1117.3 783.9 M1115.1 790.2 L1113.5 790.0 M1107.3 788.8 L1106.5 787.3 M1104.2 789.5 L1103.3 790.9 M1101.1 796.6 L1102.1 798.8 M1093.7 804.1 L1091.0 804.1 M1090.7 807.0 L1091.1 808.5 M1086.6 808.8 L1084.6 807.7 M1079.1 810.7 L1077.7 810.5 M1071.4 812.4 L1070.0 810.3 M1063.6 818.5 L1064.8 820.3 M1055.9 821.5 L1055.1 824.2 M1051.7 824.2 L1054.0 825.8 M1046.7 830.1 L1044.0 829.1 M1044.2 832.4 L1043.2 834.7 M1037.6 838.1 L1036.2 837.7 M1033.7 839.0 L1033.0 841.3 M1033.5 844.9 L1034.5 845.7 M1138.4 782.0 L1139.6 784.0 M1140.9 791.2 L1142.9 792.0 M1143.7 795.2 L1145.0 794.9 M1146.9 799.5 L1148.9 799.2 M1128.0 792.5 L1127.9 794.5 M1110.7 791.3 L1110.1 788.7 M1108.1 791.1 L1106.0 792.9 M1104.4 794.5 L1102.0 795.8 M1101.8 798.5 L1101.6 800.8 M1096.9 805.3 L1096.9 807.5 M1090.7 810.8 L1090.2 813.1 M1082.5 812.9 L1080.2 811.6 M1075.1 814.9 L1073.3 817.4 M1068.3 818.4 L1068.5 819.7 M1063.1 825.6 L1063.9 828.3 M1060.0 828.4 L1057.8 827.1 M1056.2 832.2 L1053.8 830.8 M1055.7 838.4 L1054.1 841.1 M1050.3 842.9 L1048.6 840.4 M1085.8 817.1 L1084.2 818.2 M1074.6 821.4 L1073.3 822.0 M1074.5 825.2 L1071.8 826.3 M1076.2 829.2 L1078.6 829.1 M839.2 705.1 L838.7 706.6 M830.6 705.4 L830.8 703.8 M826.2 706.4 L825.3 705.2 M820.4 705.1 L818.2 706.3 M815.3 704.4 L815.3 702.1 M807.8 701.9 L805.3 702.8 M823.7 702.0 L825.8 701.4 M824.8 695.4 L823.0 695.4 M813.6 710.2 L811.8 711.3 M827.4 711.2 L825.9 712.5 M864.8 709.7 L865.4 712.7 M862.7 718.1 L861.1 718.1 M855.3 721.4 L855.0 719.8 M849.7 723.8 L850.0 725.9 M860.1 728.9 L857.8 729.8 M865.5 727.9 L868.0 726.9 M869.3 731.9 L870.2 734.2 M875.4 739.0 L874.4 740.1 M876.3 700.7 L878.2 700.8 M880.0 702.7 L882.9 701.9 M883.6 704.9 L885.7 703.7 M882.3 707.2 L880.6 708.0 M882.8 711.0 L884.2 712.4 M870.3 703.1 L871.7 703.1 M843.6 675.5 L846.8 675.3 M929.7 730.2 L928.5 729.8 M926.1 730.4 L924.0 732.7 M920.5 730.7 L919.7 732.6 M922.2 734.6 L921.0 734.1 M920.6 737.6 L917.9 736.5 M915.9 746.2 L916.6 747.5 M913.7 753.0 L911.9 755.0 M961.5 750.0 L959.2 749.3 M955.8 755.6 L954.3 755.7 M952.7 757.4 L953.0 760.0 M946.9 762.4 L944.4 762.7 M956.3 758.8 L954.4 760.0 M956.3 762.5 L954.2 764.3 M970.7 749.8 L972.9 751.8 M971.2 753.3 L969.4 753.7 M951.0 735.8 L948.5 734.8 M947.2 737.7 L948.1 740.6 M666.3 609.6 L667.2 606.9 M661.3 604.9 L661.2 602.8 M653.1 598.1 L652.2 600.5 M656.0 604.0 L656.6 605.8 M663.9 618.8 L664.5 621.8 M662.3 621.0 L659.6 620.8 M657.4 626.6 L654.5 626.1 M656.2 583.2 L656.2 586.2 M678.7 638.1 L676.6 638.3 M655.5 675.8 L653.1 677.6 M651.9 697.4 L653.9 698.5 M652.3 700.6 L651.0 703.4 M650.4 706.0 L651.7 708.4 M689.1 706.4 L687.7 707.8 M688.0 713.2 L685.7 714.7 M776.3 660.5 L777.2 658.6 M770.3 664.5 L768.8 664.6 M769.5 667.2 L768.2 668.0 M808.2 700.0 L811.0 699.9 M814.3 705.3 L816.2 703.0 M819.5 705.7 L821.3 707.4 M822.1 705.2 L822.1 702.8 M831.3 703.9 L832.2 702.2 M837.7 703.9 L838.3 705.8 M842.3 702.1 L843.3 701.0 M825.4 701.3 L828.1 700.9 M825.6 695.9 L823.5 696.2 M826.7 707.8 L827.6 709.0 M762.0 708.7 L762.9 707.5 M751.1 718.1 L752.6 719.4" fill="none" stroke="#000" stroke-width="1.8" stroke-linejoin="round" stroke-linecap="round"/>
<path d="M622.9 367.7 L622.5 369.0 L622.6 370.5 L622.3 372.5 L620.8 374.6 L619.8 376.4 L618.9 377.9 L618.4 380.6 L617.1 381.8 L616.7 384.5 L615.7 385.7 L615.2 387.2 L613.5 388.4 L611.2 389.2 L609.5 389.8 L607.5 389.3 L606.1 388.8 L604.1 388.7 M618.5 380.2 L620.0 381.2 L621.5 382.3 L621.8 384.9 L622.5 386.5 L622.1 388.3 L622.7 389.9 L622.2 391.5 M620.4 392.7 L618.0 393.5 L616.3 395.5 L614.2 396.4 L612.6 397.2 L611.5 398.6 L609.9 400.7 L607.8 400.9 M623.5 401.5 L625.3 402.3 L627.1 403.4 L629.1 404.6 M562.1 372.7 L560.8 374.5 L560.2 376.4 M512.3 427.8 L513.2 429.3 L514.4 431.6 L515.6 434.0 L516.5 435.2 L516.3 437.0 L516.4 439.7 L517.0 441.6 M515.7 432.8 L518.8 433.5 M582.1 428.4 L583.9 429.9 L584.7 431.1 L585.9 431.7 L587.2 433.8 L588.2 435.0 L588.9 436.5 L589.8 438.6 L590.4 440.2 L591.2 442.5 L592.0 444.2 L592.2 446.2 L593.6 448.0 L594.8 450.2 L596.4 451.6 L596.9 454.0 L597.6 455.9 L598.8 459.1 L599.3 460.1 L600.3 461.7 M591.5 446.0 L590.4 447.2 L589.3 448.4 L587.4 448.8 L585.8 450.7 L584.0 451.6 M602.7 465.1 L602.2 463.9 L602.4 462.2 L601.3 459.7 L600.3 458.0 L599.4 456.8 L599.3 455.4 L598.0 453.5 L597.6 451.2 L596.6 450.5 L595.9 448.6 L594.7 446.3 L594.2 444.8 L593.3 443.7 L592.0 441.3 M603.3 465.1 L603.9 466.6 L604.2 468.0 L604.0 470.6 L604.5 471.8 L604.6 473.3 L604.3 475.4 L603.4 476.5 L603.3 478.1 L603.3 480.1 M598.9 473.2 L601.6 471.7 L603.9 469.4 M605.2 465.1 L605.3 467.3 L605.9 468.4 L605.2 470.7 L606.2 472.9 L605.6 475.0 L604.8 476.4 L604.9 478.8 M598.9 473.8 L597.6 472.1 L595.8 471.1 L595.1 468.2 M590.1 477.6 L588.0 478.5 L586.4 478.9 L585.1 478.4 L583.2 477.0 M587.6 480.1 L587.7 481.7 L587.5 483.4 L587.9 485.3 L587.4 487.8 L586.6 489.5 M571.3 497.6 L569.8 496.5 L568.2 495.6 L567.2 495.6 L565.5 495.9 L563.5 496.6 L561.9 497.0 L559.6 496.8 L558.4 497.8 L557.2 499.1 L556.8 500.0 L555.0 501.2 L553.3 502.5 L552.8 504.3 L552.3 505.9 L551.3 507.4 L550.5 509.1 L549.2 511.1 L547.9 512.2 L546.0 514.4 L544.7 515.5 L543.5 516.2 L541.3 516.4 M566.9 495.1 L567.3 493.0 L567.6 492.3 L568.1 489.9 L567.0 488.5 L567.3 486.0 L566.6 483.8 L568.2 481.4 M560.1 496.4 L558.8 493.9 M553.8 502.7 L551.4 502.1 L550.0 503.2 L547.5 503.9 M582.6 515.2 L580.1 515.8 M582.6 522.7 L581.0 523.1 L579.2 524.1 L577.8 524.8 L575.8 525.6 L574.4 525.6 L572.0 526.5 M581.4 526.5 L579.4 527.4 L578.8 528.1 L576.5 529.2 L575.0 529.9 L573.2 530.9 M583.2 534.0 L584.1 535.2 L585.7 536.5 M576.0 547.8 L574.2 549.1 L573.4 549.5 L571.0 550.8 L569.4 550.3 L567.4 550.6 L566.3 550.9 L564.3 550.7 L562.4 550.2 L560.9 550.2 L559.1 550.2 L557.7 550.8 L556.4 551.6 L554.4 552.0 L552.1 552.6 L549.6 551.7 L547.5 551.5 M566.3 550.9 L566.4 552.6 L565.4 554.2 L564.5 556.6 L563.8 558.5 L563.1 560.5 L563.3 563.2 L562.6 564.7 M571.3 550.3 L572.6 551.5 L572.4 553.2 L573.3 554.6 L574.3 556.1 L575.6 558.2 L575.9 560.3 L577.0 562.4 L577.6 563.4 M585.4 546.0 L585.7 547.4 L586.4 549.5 L586.5 551.5 L587.7 553.7 L587.3 555.3 L588.1 556.1 L586.2 559.0 L585.7 560.9 M561.3 550.3 L562.1 548.0 L563.2 546.5 M556.3 551.5 L556.5 553.6 L555.7 555.3 M594.1 545.5 L594.6 547.4 L595.1 548.6 L595.3 550.1 L595.4 551.8 L595.2 554.1 L594.8 554.8 L594.8 557.2 L593.9 559.7 M604.2 548.0 L606.4 548.8 L608.8 550.2 L609.3 552.1 L611.1 553.3 L612.7 555.9 M602.7 545.9 L604.5 545.1 L606.4 545.0 L608.1 544.7 L609.5 544.2 L612.1 544.0 M598.9 544.0 L599.2 542.1 L599.7 540.9 L599.7 539.2 L598.9 536.5 M632.7 544.0 L631.4 545.1 L630.5 546.4 L629.3 548.1 L628.3 550.3 M644.0 557.8 L642.1 558.7 L641.1 559.7 L638.9 560.2 L637.6 560.9 L636.0 561.4 L634.5 563.2 L633.4 563.4 M646.3 555.9 L645.1 557.1 L642.7 557.0 L642.0 558.7 L640.2 559.1 L637.8 559.9 L636.5 560.9 M658.4 576.0 L657.2 576.4 L655.2 576.7 L653.4 576.6 L650.7 576.0 L648.7 575.2 L647.7 575.3 L645.7 576.1 L644.6 577.2 M660.1 576.0 L659.0 578.2 L658.0 579.8 L658.3 581.4 L656.3 583.4 L655.0 584.6 L654.0 586.0 M653.4 576.6 L652.6 578.1 L652.8 580.4 M583.2 581.0 L584.3 583.3 L584.0 585.1 L585.3 586.8 L586.4 588.7 L586.0 590.2 L585.0 591.7 L583.0 593.9 L580.9 594.8 L579.1 596.3 L577.3 597.2 L575.5 598.9 L573.4 599.9 L572.3 601.0 L570.5 601.9 L568.3 602.4 L567.1 602.4 L563.9 603.6 L562.8 602.5 L561.3 601.0 M656.5 597.9 L655.4 599.6 L655.2 601.2 L654.5 603.2 L653.4 605.4 M595.1 602.9 L594.4 604.5 L593.3 606.7 M474.5 584.5 L474.9 586.3 L474.9 588.5 L474.5 590.3 L473.6 592.1 L472.5 593.4 L471.3 595.5 L470.0 596.4 L469.5 598.3 M488.3 586.4 L487.1 587.6 L487.0 590.0 L486.3 590.9 L484.3 592.6 L483.0 594.4 L481.4 595.1 M532.8 584.5 L532.9 586.3 L532.4 587.7 L531.8 589.4 L531.4 591.7 L530.3 593.5 L530.1 595.3 L530.0 597.6 M510.9 591.4 L510.9 593.2 L511.6 595.3 L512.1 597.9 M547.8 552.5 L549.8 552.7 L551.3 551.7 L553.2 551.7 L554.6 551.3 L556.4 550.7 L557.6 550.4 L559.1 550.4 L561.3 549.2 L562.7 549.3 L564.5 548.9 L566.5 549.8 L568.4 549.6 L570.0 551.3 L572.6 552.4 L573.9 551.1 L576.6 550.7 M567.9 550.0 L567.1 551.4 L567.1 553.5 L566.3 554.5 L565.8 556.9 L565.0 558.2 L564.4 560.4 L564.2 561.8 L563.5 564.4 M572.3 551.9 L573.0 552.8 L574.2 555.2 L574.9 556.2 L575.6 559.0 L576.6 560.3 L577.3 563.2 M586.7 547.5 L587.1 548.9 L586.4 550.6 L587.4 552.7 L587.2 555.0 L587.6 555.9 L586.5 558.1 L586.0 560.7 M596.7 546.3 L596.3 548.1 L596.4 549.2 L596.3 551.5 L596.3 553.1 L596.0 554.8 L595.6 556.0 L594.8 558.2 L594.2 560.1 M605.5 546.9 L606.2 548.5 L608.3 549.5 L609.6 551.5 L610.6 553.8 L612.2 554.5 L613.6 555.7 M605.5 546.9 L607.9 544.9 L609.3 544.8 L611.7 544.1 L614.2 545.6 M582.9 580.7 L583.1 581.9 L584.1 583.4 L585.0 585.4 L585.5 587.1 L585.9 589.1 L586.7 590.8 M561.6 600.8 L562.6 602.6 L562.8 603.2 L564.2 605.4 L565.6 604.1 L568.3 603.7 L569.7 603.4 L571.0 602.5 L571.9 601.8 L574.3 599.9 L576.0 598.9 M558.5 612.7 L560.6 615.0 L562.9 616.4 M595.4 602.7 L595.2 604.8 L594.2 606.3 L593.8 607.7 L594.5 609.2 L595.0 611.1 L594.9 613.1 L593.8 614.9 L593.7 615.9 L593.3 617.4 L593.1 619.5 L591.9 621.3 L591.6 622.4 L592.3 624.1 L592.3 626.5 M596.7 623.3 L594.9 624.0 L594.2 625.8 M585.4 645.9 L586.8 646.4 L588.4 647.5 L591.1 647.1 M585.4 649.0 L586.1 651.3 L586.7 653.4 M574.1 697.9 L573.6 699.7 L573.7 700.8 L574.0 702.6 L571.6 705.4 M581.0 603.9 L579.1 605.2 M581.7 615.2 L580.9 613.3 L579.9 612.0 L579.8 610.2 M616.4 714.4 L618.4 713.0 L620.4 711.9 L622.6 711.6 L623.7 711.1 L625.3 709.8 L627.6 708.5 L628.5 707.5 L629.7 705.7 L632.6 704.0 L633.7 703.3 L635.9 702.4 L638.1 700.9 L640.0 699.2 L640.4 697.6 L641.8 695.2 L642.2 694.1 L644.3 692.5 L645.5 691.2 L646.5 690.0 M651.5 697.5 L651.8 699.6 L650.8 700.5 L651.4 702.2 L651.0 704.3 L651.2 706.3 L652.0 708.1 L651.6 709.8 L650.9 711.9 M654.0 700.0 L655.9 701.9 M640.3 699.4 L640.4 701.2 L640.8 704.0 L640.0 705.3 L640.9 707.5 M632.7 698.1 L635.2 700.0 M573.8 697.5 L574.0 699.5 L573.1 701.4 L573.2 702.7 L572.0 705.0 M563.2 718.2 L562.5 720.6 L563.2 722.2 L562.1 724.1 L562.4 725.7 L561.5 727.9 L563.0 729.2 L563.6 731.1 L564.3 733.4 L565.1 734.5 M566.3 726.3 L564.4 728.2 M688.5 701.3 L688.6 703.5 L689.3 705.6 L688.0 708.2 L687.5 710.1 L686.1 711.1 L685.0 712.9 L684.1 714.4 M688.5 708.2 L688.7 710.7 L689.0 712.7 L687.9 715.7 M688.5 708.2 L691.2 707.2 L692.9 706.3 M711.1 723.8 L713.0 723.1 L715.2 723.7 L716.1 723.8 L718.4 725.4 L718.6 728.2 M731.7 750.8 L733.1 752.8 L733.9 753.8 L735.5 756.4 M729.8 723.2 L730.3 724.9 L730.5 727.0 M739.2 726.3 L739.0 727.9 L739.3 729.3 L739.2 731.4 M648.4 729.5 L647.9 731.1 L646.8 732.0 L645.4 734.1 L644.6 734.8 L643.8 736.7 L643.3 738.0 L642.1 739.5 M733.2 755.7 L735.0 756.0 L736.5 757.5 L738.0 757.5 L739.7 757.6 L742.0 756.6 L742.9 756.3 L744.7 756.0 L746.2 755.1 L747.9 755.2 L750.2 753.8 L752.1 753.3 L753.2 753.8 L755.8 753.3 L757.7 752.8 M732.0 750.7 L732.1 752.0 L733.2 753.8 M746.4 781.4 L746.6 783.3 L746.1 784.9 L746.1 786.6 L746.1 788.5 L746.3 789.8 L746.1 791.1 L746.3 793.2 L747.0 795.2 M747.0 780.8 L748.1 780.5 L750.2 779.7 L752.4 779.3 L753.7 777.7 L756.2 778.7 L757.2 778.0 L758.7 779.5 L760.9 780.0 L760.9 782.6 L761.6 783.8 L762.9 784.9 L764.5 786.5 L765.9 787.2 L767.9 787.8 L768.9 788.6 L770.9 790.2 L770.5 787.7 L770.2 785.1 M748.3 827.1 L748.9 828.3 L750.5 830.6 L751.6 831.5 L752.7 832.8 M755.2 832.1 L755.8 833.5 L756.4 835.3 M782.1 853.4 L781.2 855.2 L780.6 857.7 L779.7 859.4 L778.2 861.3 L776.5 862.8 M818.4 855.3 L820.2 856.4 L822.0 857.2 L823.6 858.3 L825.1 859.9 L824.8 862.4 L824.9 864.8 L825.8 867.1 L826.6 868.3 L827.0 870.8 L827.2 872.9 M827.2 872.9 L829.7 872.2 L831.6 872.2 M846.6 859.7 L848.1 861.3 L849.0 862.8 L850.2 864.4 L851.2 865.4 L852.1 867.5 L853.2 869.0 L854.2 870.8 L854.3 872.1 L855.0 874.1 L856.5 875.6 L858.5 877.2 M854.2 861.0 L853.9 862.8 L852.1 864.1 L851.8 865.4 L850.9 868.1 L851.8 870.1 L850.6 871.6 L850.4 873.4 L849.1 876.0 M876.1 874.7 L876.7 876.0 L877.5 877.2 L878.4 879.0 L879.5 880.8 L881.0 883.3 L881.2 884.4 L882.3 886.2 L881.4 888.5 L880.7 890.5 L880.5 891.7 M880.5 882.9 L882.3 884.6 L883.5 885.5 L884.9 886.6 M865.4 730.6 L867.2 731.9 L868.9 732.9 L870.1 733.9 L871.7 735.3 L872.5 735.9 L873.7 737.8 L875.9 738.9 L876.6 740.4 L878.0 741.3 M753.3 844.7 L751.7 846.3 L751.2 848.0 L750.2 848.5 L749.2 850.4 L747.5 852.0 L747.5 853.9 L746.0 854.9 L745.1 857.2 M970.3 890.2 L968.3 891.1 L967.0 891.3 L964.9 891.0 L962.4 890.5 L960.6 891.2 L959.0 892.3 L957.5 892.2 L954.7 890.9 L952.9 891.2 L951.7 890.3 L949.5 889.1 L947.8 888.8 L947.5 886.6 L946.3 885.1 L944.8 883.6 L942.3 883.2 L941.7 881.6 L941.1 879.9 L939.5 880.5 L937.6 880.6 L936.7 882.2 L934.9 884.1 L933.5 881.8 L932.2 880.8 L931.1 878.8 L929.2 878.7 L927.8 878.5 L925.8 877.7 M952.7 890.2 L953.8 889.0 L954.5 886.3 L955.1 885.2 L956.1 883.4 L956.4 881.7 L957.8 879.9 L958.7 878.4 L959.0 876.7 L959.3 875.0 L960.6 873.7 L961.0 871.9 L961.8 870.5 L961.9 868.7 L962.4 866.8 L962.8 864.5 M955.2 891.5 L955.2 893.1 L956.2 894.9 L956.1 896.8 L957.6 898.9 L958.9 899.7 L960.9 899.6 M966.5 891.5 L967.2 890.0 L966.8 888.1 L966.8 887.0 L967.8 884.6 M935.2 883.9 L934.6 885.8 M975.3 872.0 L976.7 873.0 L978.5 874.4 L980.3 874.9 L982.2 875.8 M991.6 887.1 L993.3 888.8 L993.9 890.3 L996.2 891.0 L997.8 892.7 M975.3 897.7 L975.4 899.3 L976.0 901.5 L975.9 902.7 M1000.4 863.3 L997.8 863.9 M992.8 847.6 L992.0 845.1 L991.1 843.5 L989.3 841.7 L988.0 839.9 L987.1 838.5 L986.6 836.8 L985.8 834.3 L983.2 832.7 L982.7 831.7 L980.3 829.9 L978.9 828.6 L978.4 826.9 L977.1 826.1 L975.8 824.0 L974.6 822.9 L974.0 820.0 M977.2 825.7 L979.2 824.0 L980.3 823.2 M985.3 834.4 L987.8 833.2 M876.3 874.5 L876.9 876.4 L877.5 877.7 L878.6 879.4 L879.2 881.5 L880.5 882.9 L880.8 885.6 L881.9 887.1 M878.8 878.9 L881.9 879.5 M1002.9 842.0 L1003.2 843.9 L1004.1 845.7 M1024.2 861.4 L1023.8 858.9 L1024.5 857.4 L1023.8 854.6 L1024.3 853.6 L1025.4 851.5 L1025.7 850.2 L1026.5 848.8 L1026.5 846.4 L1026.2 845.3 L1026.6 847.8 L1028.1 847.6 L1030.2 847.3 L1032.1 845.9 L1032.4 845.3 L1034.2 844.2 L1034.1 841.8 L1035.0 840.3 L1034.4 838.7 L1036.5 837.3 L1038.0 836.9 L1039.8 835.6 L1041.9 835.4 L1043.7 833.3 L1045.1 831.8 L1045.4 829.6 L1045.9 828.7 L1046.7 827.1 L1048.0 826.1 L1048.7 825.6 L1049.9 822.8 L1050.7 821.0 L1053.6 819.8 L1055.0 819.6 L1056.8 818.2 L1058.9 818.2 L1060.5 817.7 L1061.6 817.3 L1063.7 815.8 L1065.0 815.6 M1027.9 860.8 L1029.1 859.2 L1029.9 857.2 L1032.5 857.0 L1034.0 855.9 L1036.1 855.5 L1038.4 854.0 L1039.8 854.0 L1041.5 853.8 L1043.0 854.3 L1045.0 853.3 L1046.7 853.2 L1046.6 851.1 L1045.2 849.6 L1045.0 846.4 L1047.5 845.1 L1048.3 843.8 L1050.8 843.1 L1052.6 842.8 L1054.3 842.2 L1055.9 841.0 L1055.3 839.2 L1055.9 837.1 L1055.9 834.9 L1055.8 832.8 L1058.3 831.7 L1060.6 830.6 L1061.8 829.8 L1063.2 829.4 L1065.0 828.8 M1046.7 853.2 L1049.1 854.7 L1050.1 857.0 L1050.7 858.8 L1052.6 860.4 L1053.4 862.4 L1054.9 865.1 M1032.9 836.9 L1034.8 838.8 M1043.6 827.5 L1045.5 828.2 M1056.3 840.0 L1054.8 840.9 L1053.6 842.1 L1052.6 843.3 L1050.3 844.0 L1049.7 844.3 L1047.3 845.1 L1046.6 846.8 L1044.9 848.5 L1046.6 850.2 L1048.0 852.0 L1050.4 852.3 L1050.5 854.8 L1049.9 855.8 L1050.1 858.9 L1051.1 860.7 L1052.3 862.7 L1053.8 864.4 M1045.0 858.8 L1046.8 858.4 L1048.0 857.3 L1049.4 856.3 M1126.5 916.4 L1126.1 914.1 L1125.1 912.5 L1123.8 910.9 L1123.0 909.7 L1122.8 907.2 L1123.2 905.2 L1123.0 903.6 L1122.3 902.2 L1121.8 900.6 L1121.8 898.0 L1121.7 896.4 L1121.5 895.3 L1121.2 893.3 M1126.5 912.1 L1128.1 910.6 L1128.7 907.9 L1129.3 906.5 L1129.8 904.2 L1130.9 901.5 L1131.3 900.3 L1132.7 897.6 L1133.9 896.1 L1135.4 894.1 L1136.4 892.2 L1137.0 891.1 L1137.9 890.3 L1140.3 889.1 L1141.0 886.7 L1143.5 885.2 L1145.0 884.4 L1147.4 883.0 L1149.0 882.6 M1127.7 915.2 L1129.7 915.6 L1131.7 913.9 L1133.9 912.8 L1136.3 912.9 L1137.6 912.5 L1140.0 913.8 L1141.7 915.7 L1143.3 915.6 L1145.3 915.1 L1147.1 915.3 L1149.0 915.6 L1150.7 915.8 L1153.4 915.2 M1140.3 908.3 L1141.4 910.2 L1141.5 912.1 M1116.4 902.7 L1118.0 903.2 L1119.8 904.1 L1122.1 905.2 M1130.2 946.5 L1131.8 946.0 L1134.1 944.5 L1135.6 944.3 L1137.7 943.8 M1133.4 924.0 L1135.9 925.2 M1130.9 932.1 L1133.4 931.5 M1120.2 966.6 L1120.8 968.3 L1120.8 969.8 L1121.0 971.2 L1121.5 973.6 L1121.0 975.5 L1121.8 978.0 L1122.7 980.1 L1123.1 981.6 L1124.1 982.9 L1125.5 984.5 L1126.4 986.4 L1128.0 987.7 L1129.8 987.9 L1130.8 988.8 L1132.7 990.4 M1122.7 980.4 L1124.0 979.1 L1125.9 977.8 L1127.5 977.4 L1129.6 976.0 M1122.7 985.4 L1122.5 987.1 L1121.5 988.5 M1127.7 964.7 L1127.0 966.6 L1125.6 967.9 L1125.4 969.5 L1123.7 970.4 L1121.5 971.6 M1101.4 972.8 L1102.7 975.3 M1068.2 971.6 L1070.1 971.8 L1071.3 972.6 M1226.7 912.1 L1229.1 911.1 L1230.0 909.8 L1232.0 910.0 L1234.2 909.7 L1235.0 910.7 L1237.0 909.4 L1238.8 907.9 L1241.2 906.9 L1243.0 905.3 L1245.0 904.5 M1235.5 910.2 L1235.3 911.5 L1236.2 913.2 L1236.1 915.2 M1239.2 884.5 L1240.9 885.4 L1242.7 885.2 L1245.0 885.7 M1226.5 911.9 L1227.9 911.1 L1229.8 910.2 L1231.9 909.8 L1233.8 909.1 L1235.4 909.0 L1236.6 910.9 L1237.3 912.1 L1237.5 913.5 L1237.1 915.7 M1237.7 909.4 L1239.4 907.9 L1240.0 907.2 L1241.2 905.8 L1243.1 905.3 L1245.5 905.0 L1246.7 905.1 L1249.0 905.5 L1250.5 904.2 L1252.2 904.3 L1254.9 902.0 L1256.8 901.8 L1258.5 900.2 L1260.3 900.0 M1279.7 940.7 L1281.8 941.5 L1284.1 941.8 L1286.0 940.5 L1287.7 940.3 L1289.1 940.1 M1284.1 941.4 L1284.2 943.4 L1284.7 945.7 M1292.3 975.2 L1293.6 976.3 L1295.1 977.4 L1293.9 979.6 L1294.1 981.5 M1323.0 952.0 L1324.5 952.5 L1326.8 952.5 L1328.0 952.6 M1155.0 1027.8 L1153.6 1028.7 L1151.6 1029.9 L1150.8 1031.8 L1149.9 1033.8 L1148.1 1036.0 M1140.0 913.2 L1141.9 914.0 L1143.6 915.0 L1145.6 915.6 L1147.5 915.1 L1148.5 915.6 L1151.0 915.2 L1153.2 915.0 M1140.0 1016.5 L1142.1 1016.1 L1143.1 1014.7 M1222.7 1009.6 L1224.5 1010.1 L1225.6 1010.1 L1227.8 1009.8 L1229.5 1010.6 L1231.0 1010.4 L1232.5 1010.1 L1234.8 1009.4 L1235.7 1009.8 L1237.7 1008.8 L1239.6 1009.0 L1241.2 1008.8 L1242.8 1008.8 L1244.3 1008.6 L1245.7 1009.8 L1247.8 1009.2 L1250.0 1010.0 L1251.1 1010.9 L1253.8 1011.5 L1255.3 1010.0 L1256.6 1008.6 L1257.8 1007.9 L1258.6 1006.4 L1260.1 1005.5 L1262.6 1004.7 L1264.6 1004.6 L1266.6 1004.0 M1280.4 1010.9 L1282.0 1010.3 L1283.5 1009.6 L1285.7 1008.9 L1286.9 1008.0 L1288.8 1006.8 L1290.8 1006.2 L1292.1 1005.5 L1293.6 1004.5 L1296.6 1002.1 M1287.9 1016.5 L1289.6 1016.1 L1291.6 1015.8 L1292.3 1014.5 L1294.2 1013.8 L1296.6 1013.3 L1297.4 1011.8 L1299.5 1011.3 L1300.3 1010.0 L1301.3 1009.4 L1302.9 1006.5 M1298.5 992.1 L1300.4 994.0 M1302.3 995.9 L1304.2 998.4 M1306.0 999.6 L1308.5 1000.5 M1309.8 1000.9 L1311.1 1000.3 M1316.1 995.2 L1316.1 996.9 L1317.0 998.4 L1316.7 1000.3 M1284.7 983.3 L1285.2 981.7 L1285.7 979.9 L1287.9 978.3 M1213.2 775.7 L1214.0 773.9 L1214.1 772.2 L1214.0 769.9 L1214.6 768.9 L1215.5 766.8 L1216.4 764.6 L1217.8 763.9 L1219.2 761.4 L1216.9 760.0 M1290.9 807.0 L1292.1 808.7 L1293.2 810.2 L1294.5 811.5 L1295.7 813.7 L1296.6 815.5 L1296.1 816.9 L1296.2 818.7 L1296.7 820.0 L1298.2 822.2 L1298.3 824.0 L1299.2 825.0 L1300.0 826.6 L1301.3 828.5 L1302.6 830.0 L1303.4 831.3 L1304.7 831.6 L1305.8 833.7 L1308.3 835.0 L1309.6 836.4 L1310.9 837.7 M1293.4 810.1 L1295.3 809.8 L1296.4 810.7 L1298.4 810.8 M1296.5 818.9 L1299.0 818.9 M1332.8 780.1 L1333.8 780.7 L1335.2 781.5 L1337.6 782.0 L1339.4 783.3 L1341.9 783.5 L1343.7 784.8 L1344.5 785.2 L1346.9 786.2 L1348.4 786.6 L1350.8 786.0 L1352.1 787.1 L1353.9 787.1 L1356.2 787.7 L1357.5 787.0 L1359.2 788.2 L1361.6 788.7 L1362.8 789.3 L1364.4 790.9 L1365.0 792.1 L1366.7 792.3 L1368.1 794.0 L1369.1 794.2 L1370.4 795.7 M1341.6 783.8 L1339.8 785.5 L1338.7 787.4 L1339.5 789.2 L1339.7 790.7 M1280.2 855.9 L1281.0 858.1 L1281.0 860.1 L1281.8 862.4 L1282.1 864.6 M1289.0 864.0 L1290.9 863.8 L1292.3 862.6 L1293.4 862.0 L1295.7 861.4 L1297.1 861.3 L1298.1 859.7 L1300.3 859.6 M1265.8 860.9 L1266.7 862.6 L1267.0 864.0 M1340.4 867.8 L1341.8 868.7 L1343.4 868.7 L1345.0 869.4 L1347.6 869.7 L1349.1 870.9 M1315.3 871.5 L1317.6 870.9 L1318.8 871.0 L1322.2 871.5 M1270.8 880.3 L1271.9 881.6 L1272.1 883.4 M1290.2 897.2 L1292.7 898.5 M1399.2 761.3 L1400.0 763.4 L1402.1 765.3 L1402.3 766.6 L1403.9 767.4 L1405.0 768.8 M1245.1 859.6 L1246.3 859.7 L1248.7 860.0 L1249.9 861.3 L1252.0 860.7 L1254.0 859.1 L1255.1 859.0 M1238.8 884.1 L1240.7 884.5 L1241.7 884.9 L1243.4 884.3 L1246.5 884.8 L1248.1 883.3 L1249.8 883.5 L1251.9 882.9 L1254.0 882.2 L1255.1 881.6 M1226.9 911.0 L1228.3 910.3 L1230.1 908.5 M1344.7 877.8 L1344.6 879.2 L1345.4 882.1 L1345.0 883.2 L1345.4 885.3 M1304.0 840.2 L1306.2 840.6 L1307.6 840.1 L1308.8 840.1 L1311.2 839.7 L1312.2 839.4 L1314.0 839.2 M1342.9 833.9 L1343.5 836.4 M1349.7 810.8 L1350.8 811.7 L1352.2 812.7 L1354.1 813.3 M1263.9 902.9 L1264.4 904.5 L1265.2 906.0 M1397.6 760.2 L1399.7 761.1 L1401.5 762.0 L1402.4 764.2 L1403.4 766.4 L1404.6 768.1 L1406.2 770.0 L1407.7 771.3 L1408.3 771.6 L1410.0 773.1 L1410.6 775.3 L1410.9 776.8 L1414.1 775.7 L1415.7 774.0 L1417.0 773.4 M1403.2 762.7 L1405.7 763.3 M1403.2 766.5 L1404.5 768.2 L1405.9 769.7 L1406.0 770.6 L1408.0 772.5 L1408.0 773.4 L1408.9 775.1 L1409.8 777.6 L1410.8 779.0 M1486.6 713.2 L1488.0 712.1 L1489.5 711.3 L1491.8 709.7 L1493.3 708.7 L1494.5 708.4 L1496.8 707.7 L1498.3 707.1 L1499.7 706.0 L1501.1 704.8 L1503.6 705.2 L1505.4 706.1 L1503.8 706.7 L1502.8 708.2 L1501.2 708.2 L1499.1 709.5 L1497.6 709.8 L1496.6 710.1 L1494.4 709.8 L1493.1 711.2 L1491.2 711.4 L1489.4 711.7 L1488.5 712.2 L1486.6 713.2 M1503.5 742.7 L1505.0 743.6 L1506.6 744.9 L1508.1 743.8 L1509.0 741.9 L1510.6 741.5 L1512.3 740.7 L1513.3 739.0 L1514.9 738.6 L1516.6 736.8 L1519.0 736.3 L1519.9 735.3 L1521.9 734.1 L1522.4 733.3 L1524.1 732.1 L1526.4 731.1 L1527.9 729.1 L1529.0 728.3 L1530.5 728.2 L1532.9 727.0 M1480.3 758.9 L1481.8 758.9 L1483.3 758.6 L1485.4 757.2 L1486.8 756.9 L1488.6 756.1 L1490.1 754.9 L1492.3 754.1 L1493.9 753.8 L1495.4 752.6 L1497.7 751.7 L1499.5 750.3 L1501.6 749.5 M1482.2 758.9 L1482.8 760.6 L1483.1 761.8 L1483.6 763.7 L1486.6 762.1 M1367.5 780.3 L1369.9 781.7 L1371.3 783.4 M1180.0 726.4 L1180.6 727.9 L1182.2 729.9 L1183.5 731.3 L1184.7 732.4 L1185.4 734.3 L1186.6 736.3 L1188.0 737.0 L1188.8 738.9 M1192.6 723.2 L1195.4 724.7 L1197.6 725.7 M1237.7 739.5 L1237.3 741.9 L1236.5 743.3 L1234.9 745.0 L1233.9 746.4 M1247.7 738.3 L1248.1 740.0 L1247.9 741.3 L1248.4 743.9 L1249.3 744.9 L1250.2 746.3 L1250.7 749.0 L1251.3 750.7 L1252.9 750.7 L1253.8 752.2 L1254.9 753.6 L1253.9 755.8 L1253.3 757.7 M1221.4 735.8 L1220.0 737.1 L1217.9 738.0 L1215.9 738.4 L1215.6 741.1 L1214.3 742.4 L1214.4 744.2 L1214.7 746.2 L1215.5 748.1 L1215.5 750.3 L1215.5 751.8 L1216.9 753.7 L1216.7 756.4 L1217.4 757.9 L1217.4 759.1 L1217.4 760.6 L1217.8 763.0 L1217.4 764.1 L1216.4 765.6 L1214.8 768.1 L1215.3 769.3 L1214.5 770.5 L1214.1 772.2 L1213.8 773.9 L1213.2 775.9 M1339.8 709.4 L1341.0 709.0 L1343.1 707.8 L1344.2 706.9 M1332.3 779.6 L1334.0 780.0 L1337.1 781.0 L1338.4 781.9 L1339.5 782.9 L1341.2 783.8 L1342.9 783.7 L1344.9 784.4 L1347.2 784.7 L1348.7 785.0 L1350.3 785.5 L1351.4 786.1 L1353.2 785.6 L1355.0 786.6 L1356.9 786.1 L1358.3 787.1 L1360.5 787.4 L1362.0 787.9 L1363.8 789.2 L1365.0 790.6 L1367.1 791.6 L1368.4 792.1 L1369.3 793.5 L1370.9 794.5 L1372.2 795.9 L1372.5 796.7 L1375.0 798.4 M1341.7 783.4 L1340.8 784.6 L1338.9 785.0 L1337.7 786.7 L1338.2 788.6 L1338.9 789.9 L1340.4 791.5 M1366.7 779.6 L1368.4 781.4 L1370.3 781.8 L1372.4 782.9 L1373.9 783.3 L1375.0 784.0 M1290.3 806.6 L1291.7 808.3 L1292.3 808.5 L1293.8 809.9 L1294.1 812.6 L1295.5 815.0 L1296.1 817.4 L1296.8 819.4 L1297.6 820.4 L1298.5 822.2 L1299.0 824.1 L1300.1 825.3 L1301.4 826.8 L1303.1 828.7 L1304.4 830.1 L1304.4 831.2 L1306.0 832.5 L1306.5 833.9 L1308.5 834.3 L1309.0 835.8 L1310.4 837.2 L1311.6 839.1 M1293.4 810.3 L1295.6 811.2 L1297.8 811.0 M1061.5 762.7 L1059.6 763.4 L1057.9 763.5 L1056.4 762.8 L1054.6 764.7 L1052.4 765.6 L1051.0 766.3 L1050.2 767.9 L1050.3 769.7 L1050.1 771.8 L1048.5 773.6 L1047.4 775.7 L1047.0 777.3 L1046.4 779.0 M1061.5 760.2 L1063.3 759.5 L1064.9 759.4 L1067.7 758.3 M1052.7 765.2 L1050.5 765.0 L1049.4 765.4 L1048.1 765.1 L1045.8 765.8 M1085.3 774.6 L1085.6 776.6 L1086.0 778.7 L1086.5 781.5 M1081.5 777.7 L1078.4 777.1 M1142.9 745.8 L1141.3 745.6 L1139.5 746.5 L1137.3 745.8 M1141.7 747.7 L1141.2 750.3 L1140.8 751.8 L1139.6 753.7 L1139.2 755.2 M1163.0 731.4 L1164.5 732.9 L1166.7 735.1 M984.4 737.0 L986.8 737.0 L988.4 736.3 L990.8 736.5 L992.5 735.9 L993.8 735.6 L995.9 736.2 L996.7 736.4 L998.7 736.9 L1000.1 737.3 L1002.1 739.4 L1001.3 740.0 L1001.6 741.9 L1001.2 743.6 L1001.4 745.9 L1001.1 747.6 L1000.3 748.6 L1001.1 750.8 L1000.7 753.3 M988.8 736.4 L989.2 738.6 L989.5 739.6 L989.6 740.9 L989.5 743.1 L988.8 745.2 M998.8 733.9 L999.9 736.1 L1001.0 737.3 L1001.9 738.9 M1008.8 733.3 L1009.6 734.9 L1011.3 736.4 L1013.0 737.8 L1015.6 738.3 L1017.0 739.3 L1019.8 739.9 L1021.3 741.8 L1022.2 743.0 L1021.2 745.3 L1020.9 746.5 L1021.2 748.0 L1019.7 749.7 L1019.4 752.6 L1018.9 753.9 M977.5 738.9 L977.6 740.6 L978.0 741.7 L979.2 743.1 L979.4 745.2 M975.0 824.1 L976.6 825.0 L977.8 827.0 L978.5 828.2 L979.5 829.6 L981.4 830.3 L982.4 832.2 L984.1 833.9 L985.3 835.2 L986.3 836.8 L987.2 838.1 L987.8 839.5 L989.0 841.9 L989.3 842.7 L990.3 845.1 L990.5 846.8 L991.3 848.0 M978.8 822.9 L980.6 824.1 M1158.0 767.7 L1156.3 767.5 L1154.7 766.1 L1152.6 766.2 L1150.8 766.8 L1148.2 766.2 L1146.4 767.2 L1144.7 766.9 L1143.3 768.0 L1141.3 768.5 L1140.2 770.3 L1138.4 771.9 L1138.0 774.4 L1137.3 776.0 L1136.3 777.5 L1136.2 779.5 L1134.3 781.6 L1133.3 782.4 L1132.6 784.1 L1131.8 785.5 L1129.1 786.7 L1127.5 785.4 L1125.3 784.5 L1123.1 783.0 L1120.1 782.3 L1118.7 784.0 L1117.5 786.0 L1117.3 786.7 L1115.1 790.2 L1113.2 789.3 L1111.9 789.6 L1109.9 789.5 L1107.3 788.8 L1106.8 790.0 L1104.2 789.5 L1103.5 791.9 L1102.5 793.0 L1102.0 795.4 L1101.1 796.6 L1099.3 797.9 L1098.7 799.2 L1097.7 801.2 L1095.3 802.8 L1093.7 804.1 L1091.7 805.6 L1090.7 807.0 L1087.9 807.9 L1086.6 808.8 L1084.7 809.2 L1082.9 810.0 L1080.4 809.8 L1079.1 810.7 L1077.0 810.7 L1075.5 811.1 L1073.7 812.5 L1071.4 812.4 L1070.1 813.4 L1068.3 814.3 L1067.3 816.0 L1065.1 816.8 L1063.6 818.5 L1061.8 818.7 L1059.4 819.5 L1058.0 820.0 L1055.9 821.5 L1054.2 821.1 L1052.2 822.4 L1051.7 824.2 L1050.2 825.6 L1048.8 827.4 L1047.8 829.0 L1046.7 830.1 L1045.6 831.7 L1044.2 832.4 L1042.6 834.8 L1040.7 836.4 L1038.9 837.4 L1037.6 838.1 L1035.5 838.3 L1033.7 839.0 L1032.8 841.0 L1033.2 843.1 L1033.5 844.9 L1033.9 846.9 L1033.9 848.0 M1137.9 779.0 L1138.6 780.5 L1138.4 782.0 L1138.4 784.3 L1138.8 785.3 L1139.5 787.8 L1140.2 788.7 L1140.9 791.2 L1140.9 792.5 L1142.7 794.3 L1143.7 795.2 L1144.8 796.7 L1144.9 798.0 L1146.9 799.5 L1148.3 800.9 L1151.1 801.8 M1129.1 789.0 L1129.3 791.0 L1128.0 792.5 L1129.1 795.0 L1129.1 797.2 M1116.6 790.3 L1114.4 790.5 L1113.2 791.2 L1110.7 791.3 L1110.0 791.5 L1108.1 791.1 L1105.3 792.6 L1104.4 794.5 L1103.9 795.5 L1103.7 797.5 L1101.8 798.5 L1101.4 800.6 L1099.8 802.1 L1099.0 803.8 L1096.9 805.3 L1095.7 807.0 L1093.7 808.8 L1092.7 810.0 L1090.7 810.8 L1088.9 811.2 L1086.2 812.3 L1085.1 812.4 L1082.5 812.9 L1080.8 813.4 L1078.7 814.4 L1077.2 814.9 L1075.1 814.9 L1072.8 815.8 L1071.2 815.9 L1069.9 817.4 L1068.3 818.4 L1067.6 819.1 L1066.8 820.6 L1066.1 822.5 L1064.3 824.6 L1063.1 825.6 L1061.9 827.4 L1060.0 828.4 L1058.6 830.1 L1057.2 831.1 L1056.2 832.2 L1056.2 834.4 L1055.4 835.7 L1055.7 838.4 L1056.1 839.4 L1055.2 841.1 L1054.4 841.8 L1051.8 842.2 L1050.3 842.9 L1048.8 844.6 L1047.9 845.8 L1047.1 848.0 M1081.5 805.9 L1081.7 808.0 L1082.1 809.7 M1085.3 812.2 L1085.5 814.4 L1085.8 817.1 L1085.7 818.9 L1084.9 820.4 L1085.5 822.1 L1085.0 823.7 L1084.6 825.4 M1075.3 817.8 L1074.6 819.9 L1074.6 821.4 L1074.3 822.7 L1074.5 825.2 L1075.6 827.3 L1076.2 829.2 L1077.2 831.9 L1077.8 834.8 M1067.7 821.0 L1068.4 823.5 M1042.7 827.2 L1044.2 828.2 L1045.2 829.7 M1031.4 835.4 L1032.5 836.4 L1034.5 838.5 M841.4 704.6 L839.2 705.1 L837.1 704.9 L835.5 705.3 L834.4 704.4 L831.6 705.9 L830.6 705.4 L828.1 706.2 L826.2 706.4 L824.5 705.9 L822.1 705.4 L820.4 705.1 L819.0 705.4 L816.7 705.2 L815.3 704.4 L813.2 703.6 L811.8 703.4 L809.0 702.3 L807.8 701.9 L805.9 700.5 L804.1 699.9 L802.6 697.7 M822.6 705.8 L823.0 703.6 L823.7 702.0 L823.5 699.8 L824.9 699.2 L825.2 696.6 L824.8 695.4 L825.7 693.9 M815.1 705.2 L814.0 706.9 L813.5 709.0 L813.6 710.2 L812.4 711.3 L812.3 713.3 M827.0 706.4 L827.4 707.7 L826.8 709.7 L827.4 711.2 L827.1 712.8 L826.3 714.8 L826.1 716.5 M835.1 705.2 L835.7 707.1 L835.4 708.0 L835.8 710.2 M810.1 702.7 L810.1 700.3 L809.4 698.9 M848.3 698.3 L848.9 699.8 L848.9 702.5 L848.7 703.9 M841.4 697.7 L843.3 699.5 M866.5 707.1 L865.6 708.2 L864.8 709.7 L863.8 712.2 L862.9 713.2 L863.0 714.8 L863.6 717.3 L862.7 718.1 L861.9 720.4 L859.0 722.3 L856.9 722.1 L855.3 721.4 L853.0 722.0 L851.8 723.0 L849.7 723.8 L848.3 724.0 M858.9 722.1 L859.9 723.8 L860.2 726.8 L860.1 728.9 L859.7 730.0 L860.2 732.8 M861.5 722.7 L863.1 724.8 L864.0 725.5 L865.5 727.9 L866.9 729.7 L867.5 731.1 L869.3 731.9 L870.1 733.5 L871.3 734.9 L872.3 736.2 L874.4 737.5 L875.4 739.0 L876.8 739.4 L879.0 741.5 M855.2 725.2 L856.3 726.6 L857.1 729.0 M874.0 698.3 L875.7 699.0 L876.3 700.7 L878.1 701.9 L880.0 702.7 L882.0 704.3 L883.6 704.9 L885.3 704.7 L886.5 705.2 M881.5 703.9 L882.2 705.3 L882.3 707.2 L883.1 709.4 L882.8 711.0 L883.6 712.7 L883.4 714.6 M869.6 698.7 L869.4 700.1 L869.8 702.4 L870.3 703.1 L870.7 704.7 L870.0 707.0 L869.6 708.9 M884.0 685.1 L883.4 687.3 L882.0 688.6 L880.3 691.4 M840.2 672.6 L842.3 674.2 L843.6 675.5 L846.3 676.2 L847.5 677.6 L849.5 678.9 M844.5 683.3 L847.0 683.9 M931.6 729.6 L929.7 730.2 L927.3 730.7 L926.1 730.4 L924.5 731.3 L921.9 730.0 L920.5 730.7 L917.8 730.0 M924.1 731.5 L923.2 733.3 L922.2 734.6 L921.5 736.5 L920.6 737.6 L919.2 739.5 L919.0 741.5 L917.6 742.5 L916.8 743.9 L915.9 746.2 L914.4 747.3 L913.1 749.9 L913.7 753.0 L916.6 753.4 M927.9 730.9 L927.9 733.5 L928.5 735.3 M931.6 715.2 L930.4 716.5 M963.0 749.0 L961.5 750.0 L960.2 751.3 L959.1 751.8 L958.0 752.8 L956.5 754.2 L955.8 755.6 L954.3 756.3 L952.7 757.4 L951.6 758.5 L950.4 759.2 L949.0 760.4 L947.4 761.1 L946.9 762.4 L945.6 764.0 L944.3 764.7 L943.6 766.3 L942.3 767.8 M956.7 755.3 L956.8 756.6 L956.3 758.8 L955.8 759.9 L956.3 762.5 L955.8 764.0 L955.4 765.3 M970.5 746.5 L970.8 748.2 L970.7 749.8 L971.2 751.9 L971.2 753.3 L971.7 755.3 M953.6 734.6 L951.0 735.8 L948.6 736.2 L947.2 737.7 L945.9 737.9 L944.8 739.0 M946.0 725.9 L947.9 726.1 L949.2 727.1 M780.0 665.1 L781.9 665.7 M666.9 611.4 L666.3 609.6 L664.9 609.1 L663.7 607.8 L663.0 606.0 L661.3 604.9 L660.2 603.5 L658.3 601.2 L657.1 599.7 L655.0 598.4 L653.1 598.1 L651.9 597.6 M658.8 601.4 L656.9 603.0 L656.0 604.0 L654.6 604.8 L653.3 606.4 L652.2 607.0 L651.4 608.7 L650.0 611.4 M666.9 615.1 L665.7 616.4 L663.9 618.8 L663.2 620.1 L662.3 621.0 L661.2 622.7 L660.4 624.1 L659.3 625.5 L657.4 626.6 L655.9 627.5 L655.2 628.7 L653.8 630.3 L652.7 630.7 L650.7 632.1 M658.8 580.7 L657.7 582.3 L656.2 583.2 L654.8 584.3 L653.2 586.3 M683.2 635.2 L682.0 635.5 L680.4 636.5 L678.7 638.1 L677.1 638.9 L675.1 640.2 M685.7 644.0 L684.3 642.7 L683.9 641.1 L682.6 640.2 M655.0 670.9 L655.5 672.9 L655.5 675.8 L654.3 677.1 L651.8 677.9 L650.4 678.4 L648.1 678.4 M675.7 680.9 L676.5 682.6 L676.3 685.3 M651.3 695.3 L651.9 697.4 L651.5 698.8 L652.3 700.6 L652.0 702.1 L651.5 704.5 L650.4 706.0 L650.9 707.7 L651.3 710.4 M688.2 701.6 L689.2 703.5 L689.1 706.4 L688.4 707.8 L687.5 708.6 L686.5 710.0 L687.7 711.8 L688.0 713.2 L687.6 715.4 M693.9 704.1 L691.9 705.0 L689.5 706.0 M774.7 660.3 L776.3 660.5 L777.6 661.5 L779.0 662.9 L781.0 664.6 M772.8 660.3 L771.6 661.7 L770.3 664.5 L769.9 665.5 L769.5 667.2 L769.3 669.5 L770.6 670.3 L771.6 672.2 M769.7 664.0 L771.8 664.8 L774.1 665.9 M750.3 659.0 L747.8 660.3 M802.9 697.8 L805.1 699.0 L806.9 699.1 L808.2 700.0 L809.3 701.8 L809.4 702.5 L810.9 703.5 L813.0 704.8 L814.3 705.3 L815.5 705.1 L817.5 706.0 L819.5 705.7 L820.4 705.5 L822.1 705.2 L824.3 705.5 L825.6 705.5 L827.1 704.3 L829.7 704.3 L831.3 703.9 L833.6 704.1 L835.1 704.2 L837.7 703.9 L838.5 702.5 L840.1 702.3 L842.3 702.1 L843.7 700.9 L845.0 700.4 M809.8 702.9 L809.1 705.1 L809.2 707.2 M814.2 705.4 L814.1 707.5 L813.7 709.6 L813.6 711.6 M824.2 705.4 L824.3 703.0 L825.4 701.3 L826.4 699.4 L827.1 697.6 L825.6 695.9 L825.5 694.1 M828.0 704.1 L827.7 705.8 L826.7 707.8 L826.5 709.9 L826.5 712.0 L825.7 713.7 L825.5 715.4 M835.5 704.1 L835.9 706.2 L837.0 707.4 L837.4 709.1 M840.5 702.2 L840.6 699.9 L840.9 698.9 L841.8 696.6 M756.5 711.0 L758.6 709.7 L760.4 708.6 L762.0 708.7 L763.2 709.0 L765.3 708.5 M747.8 718.5 L749.6 718.3 L751.1 718.1 L752.9 717.0 L754.7 717.7 L755.8 719.0 L758.2 719.4 L759.0 720.4 M839.2 672.8 L840.7 673.3 L842.5 674.3 L845.0 676.5" fill="none" stroke="#000" stroke-width="2.6" stroke-linejoin="round" stroke-linecap="round"/>
</svg>
</div>
<div id="status"></div><div><div class="abs" style="left:713px;top:1205px;width:19.5px;height:19.5px;box-sizing:border-box;border:1px solid #9c9c9c;background:#ececec"></div><svg class="ic" style="left:715.5px;top:1207px" width="15" height="15" viewBox="0 0 15 15" ><path d="M2 2C4 1 6 2 6.5 4.5L9 10M6.5 2C8.5 1 10 3 9 5L6 11M11 1.5L12.5 3M12 5.5L10 7" fill="none" stroke="#222" stroke-width="1.5" stroke-linecap="round"/><circle cx="8.5" cy="11" r="3" fill="#b9b0b0" stroke="#222" stroke-width="1.2"/><circle cx="8.6" cy="11.2" r="1" fill="#7a2f36"/></svg><div class="st" style="left:742px;top:1208.1px">Coordinate:</div><div class="abs" style="left:824.5px;top:1205px;width:300px;height:20px;box-sizing:border-box;border:1px solid #a6a6a6;border-top-color:#8b8b8b;background:#fff;box-shadow:inset 0 1px 1px rgba(0,0,0,.12);text-align:center;font-size:12.6px;line-height:19.2px;letter-spacing:.1px">297492,778115</div><div class="st" style="left:1134px;top:1208.1px;letter-spacing:-.55px">Scale</div><div class="abs" style="left:1179px;top:1209.5px;width:94px;height:14.5px;box-sizing:border-box;border:1px solid #a9a9a9;border-radius:0 3px 3px 0;background:#fff;font-size:12.6px;line-height:14px;padding-left:2px;letter-spacing:-.05px;overflow:hidden">1:473562</div><div class="abs" style="left:1258.5px;top:1210.5px;width:13.5px;height:12.5px;border-left:1px solid #b5b5b5;background:linear-gradient(#fff,#ececec);border-radius:0 2px 2px 0"></div><svg class="ic" style="left:1262.5px;top:1215px" width="6" height="4.4" viewBox="0 0 6 4.4" ><path d="M0 0H6L3 4.4Z" fill="#444"/></svg><div class="abs" style="left:1279px;top:1205px;width:19.5px;height:19.5px;box-sizing:border-box;border:1px solid #9c9c9c;background:#ececec"></div><svg class="ic" style="left:1281px;top:1206.5px" width="16" height="17" viewBox="0 0 16 17" ><path d="M3 15C7 13.5 11.5 9 14.5 1.5L15.5 2.5C13 10 9 14.5 4 16.5Z" fill="#8a8a8a" stroke="#555" stroke-width=".6"/><path d="M2.5 16.5L6.5 12.5" stroke="#444" stroke-width="1.6"/><circle cx="5.2" cy="5.2" r="3.6" fill="none" stroke="#d4212a" stroke-width="1.5"/><path d="M2.8 2.8L7.6 7.6" stroke="#d4212a" stroke-width="1.4"/></svg><svg class="ic" style="left:1305.3px;top:1204.3px" width="16" height="18" viewBox="0 0 16 18" ><defs><linearGradient id="cbg14865" x1="0" y1="0" x2="0" y2="1"><stop offset="0" stop-color="#f6faff"/><stop offset=".45" stop-color="#c4ddfa"/><stop offset="1" stop-color="#8fc0f5"/></linearGradient></defs><rect x="0.6" y="3.6" width="12.8" height="12.8" rx="2.6" fill="url(#cbg14865)" stroke="#5c6f8c" stroke-width="1"/><path d="M3.2 9.2L6.3 13.6L13.6 0.8" fill="none" stroke="#0d1734" stroke-width="2.3" stroke-linejoin="miter"/></svg><div class="st" style="left:1323.3px;top:1208.1px;letter-spacing:-.28px">Render</div><div class="st" style="left:1373.5px;top:1208.1px;letter-spacing:-.4px">EPSG:2291</div><div class="abs" style="left:1450px;top:1205px;width:19.5px;height:19.5px;box-sizing:border-box;border:1px solid #9c9c9c;background:#ececec"></div><svg class="ic" style="left:1452.5px;top:1207.5px" width="15" height="15" viewBox="0 0 15 15" ><circle cx="7.5" cy="7.5" r="6.6" fill="#5a5a5a" stroke="#111" stroke-width="1.6"/><ellipse cx="7.5" cy="7.5" rx="3.2" ry="6.6" fill="none" stroke="#111" stroke-width="1.3"/><path d="M1 7.5H14M7.5 1V14" stroke="#111" stroke-width="1.3"/><path d="M2.5 4H12.5M2.5 11H12.5" stroke="#ddd" stroke-width=".7"/></svg><div class="abs" style="left:1476px;top:1205px;width:19.5px;height:19.5px;box-sizing:border-box;border:1px solid #9c9c9c;background:#ececec"></div><svg class="ic" style="left:1479px;top:1208.5px" width="14" height="13" viewBox="0 0 14 13" ><path d="M7 1L13.2 12H0.8Z" fill="#f6ef9a" stroke="#6e6e3a" stroke-width="1" stroke-linejoin="round"/><path d="M7 4.6V8.6" stroke="#333" stroke-width="1.3"/><circle cx="7" cy="10.3" r=".8" fill="#333"/></svg><svg class="ic" style="left:1509px;top:1219px" width="12" height="12" viewBox="0 0 12 12" ><path d="M11.5 1L1 11.5M11.5 5L5 11.5M11.5 9L9 11.5" stroke="#9a9a9a" stroke-width="1"/></svg></div>
</div>
</body>
</html>
